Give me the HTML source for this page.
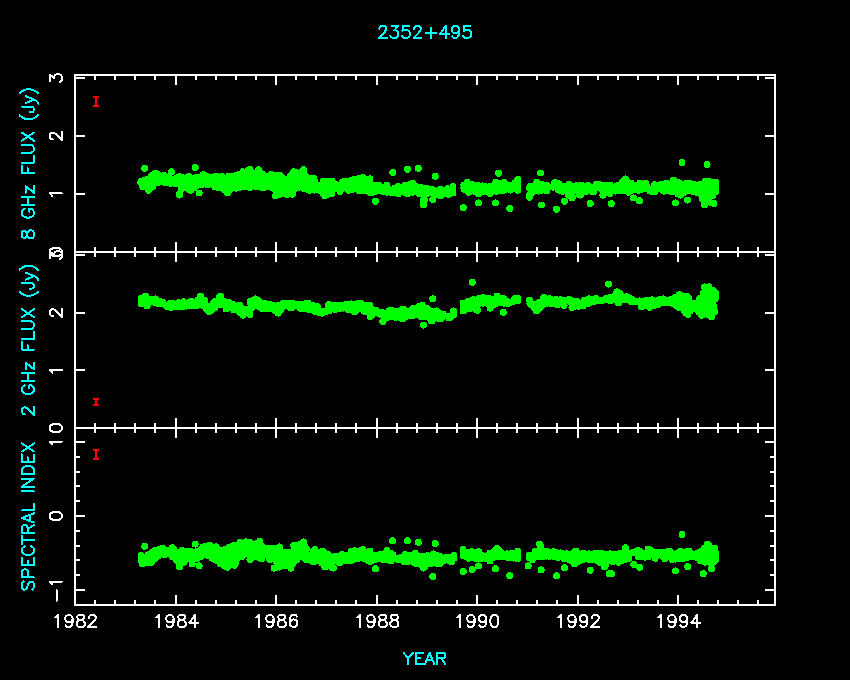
<!DOCTYPE html>
<html><head><meta charset="utf-8"><style>
html,body{margin:0;padding:0;background:#000;}
body{width:850px;height:680px;overflow:hidden;font-family:"Liberation Sans",sans-serif;}
svg{display:block;}
</style></head><body>
<svg width="850" height="680" viewBox="0 0 850 680">
<rect x="0" y="0" width="850" height="680" fill="#000"/>
<g fill="#00ff00" shape-rendering="crispEdges"><circle cx="140.8" cy="182.1" r="3.5"/><rect x="141.8" y="183.6" width="1" height="0.1"/><circle cx="142.2" cy="185.6" r="3.5"/><rect x="142.8" y="183.1" width="1" height="1.4"/><circle cx="143.3" cy="181.1" r="3.5"/><rect x="143.8" y="182.7" width="1" height="2.5"/><circle cx="144.3" cy="180.9" r="3.5"/><rect x="144.8" y="182.0" width="1" height="3.7"/><circle cx="144.9" cy="184.4" r="3.5"/><rect x="145.8" y="181.4" width="1" height="5.0"/><circle cx="146.3" cy="179.8" r="3.5"/><rect x="146.8" y="180.8" width="1" height="6.2"/><circle cx="147.7" cy="187.0" r="3.5"/><rect x="147.8" y="180.2" width="1" height="7.5"/><circle cx="148.3" cy="188.8" r="3.5"/><rect x="148.8" y="179.5" width="1" height="7.4"/><circle cx="148.9" cy="188.1" r="3.5"/><rect x="149.8" y="178.9" width="1" height="7.2"/><circle cx="150.7" cy="187.8" r="3.5"/><rect x="150.8" y="178.3" width="1" height="7.0"/><circle cx="151.6" cy="182.5" r="3.5"/><circle cx="151.3" cy="179.9" r="3.5"/><rect x="151.8" y="177.7" width="1" height="6.8"/><circle cx="151.8" cy="175.6" r="3.5"/><rect x="152.8" y="177.0" width="1" height="6.6"/><circle cx="153.6" cy="182.1" r="3.5"/><rect x="153.8" y="176.4" width="1" height="6.5"/><circle cx="153.8" cy="178.4" r="3.5"/><rect x="154.8" y="175.8" width="1" height="6.4"/><circle cx="155.5" cy="173.4" r="3.5"/><rect x="155.8" y="175.9" width="1" height="5.5"/><circle cx="155.9" cy="183.0" r="3.5"/><rect x="156.8" y="176.2" width="1" height="4.5"/><circle cx="157.8" cy="182.7" r="3.5"/><rect x="157.8" y="176.4" width="1" height="3.5"/><circle cx="157.8" cy="174.0" r="3.5"/><rect x="158.8" y="176.7" width="1" height="3.4"/><circle cx="159.7" cy="182.1" r="3.5"/><rect x="159.8" y="176.9" width="1" height="3.2"/><circle cx="160.4" cy="178.6" r="3.5"/><rect x="160.8" y="177.2" width="1" height="3.0"/><circle cx="161.6" cy="181.9" r="3.5"/><rect x="161.8" y="177.4" width="1" height="2.9"/><circle cx="161.9" cy="178.0" r="3.5"/><rect x="162.8" y="177.7" width="1" height="2.7"/><circle cx="163.4" cy="182.1" r="3.5"/><rect x="163.8" y="178.0" width="1" height="2.4"/><circle cx="164.7" cy="179.7" r="3.5"/><rect x="164.8" y="178.5" width="1" height="2.0"/><circle cx="165.4" cy="182.7" r="3.5"/><rect x="165.8" y="179.0" width="1" height="1.6"/><circle cx="166.7" cy="177.3" r="3.5"/><rect x="166.8" y="179.5" width="1" height="1.2"/><circle cx="167.6" cy="183.0" r="3.5"/><rect x="167.8" y="180.0" width="1" height="0.8"/><circle cx="168.3" cy="177.6" r="3.5"/><rect x="168.8" y="180.5" width="1" height="0.3"/><circle cx="169.5" cy="178.4" r="3.5"/><circle cx="170.4" cy="183.2" r="3.5"/><circle cx="171.0" cy="182.5" r="3.5"/><rect x="171.8" y="181.0" width="1" height="0.1"/><circle cx="172.0" cy="180.6" r="3.5"/><rect x="172.8" y="180.8" width="1" height="0.4"/><circle cx="173.6" cy="182.2" r="3.5"/><rect x="173.8" y="180.5" width="1" height="0.8"/><circle cx="174.1" cy="179.1" r="3.5"/><rect x="174.8" y="180.3" width="1" height="1.3"/><rect x="175.8" y="180.0" width="1" height="4.2"/><circle cx="175.8" cy="180.7" r="3.5"/><rect x="176.8" y="179.8" width="1" height="7.1"/><circle cx="177.2" cy="178.0" r="3.5"/><rect x="177.8" y="179.5" width="1" height="10.1"/><circle cx="178.2" cy="178.2" r="3.5"/><rect x="178.8" y="179.3" width="1" height="13.0"/><circle cx="179.2" cy="194.7" r="3.5"/><circle cx="178.9" cy="177.1" r="3.5"/><rect x="179.8" y="179.2" width="1" height="12.0"/><circle cx="179.9" cy="193.7" r="3.5"/><rect x="180.8" y="179.2" width="1" height="10.3"/><circle cx="181.5" cy="177.1" r="3.5"/><rect x="181.8" y="179.2" width="1" height="8.7"/><circle cx="181.8" cy="178.4" r="3.5"/><circle cx="182.5" cy="179.6" r="3.5"/><rect x="182.8" y="179.2" width="1" height="7.0"/><circle cx="182.8" cy="183.3" r="3.5"/><rect x="183.8" y="179.2" width="1" height="6.5"/><circle cx="184.6" cy="187.1" r="3.5"/><rect x="184.8" y="179.2" width="1" height="6.8"/><circle cx="184.9" cy="186.5" r="3.5"/><rect x="185.8" y="179.2" width="1" height="7.1"/><circle cx="186.5" cy="182.9" r="3.5"/><rect x="186.8" y="179.2" width="1" height="7.4"/><circle cx="187.3" cy="176.9" r="3.5"/><rect x="187.8" y="179.2" width="1" height="7.7"/><circle cx="188.5" cy="183.3" r="3.5"/><rect x="188.8" y="179.2" width="1" height="8.0"/><circle cx="189.3" cy="189.4" r="3.5"/><circle cx="189.2" cy="186.6" r="3.5"/><rect x="189.8" y="179.1" width="1" height="8.5"/><circle cx="190.5" cy="183.4" r="3.5"/><rect x="190.8" y="178.9" width="1" height="8.5"/><circle cx="191.7" cy="183.6" r="3.5"/><rect x="191.8" y="178.8" width="1" height="8.1"/><circle cx="192.0" cy="187.8" r="3.5"/><rect x="192.8" y="178.6" width="1" height="7.8"/><circle cx="192.9" cy="188.2" r="3.5"/><rect x="193.8" y="178.5" width="1" height="7.4"/><circle cx="194.5" cy="187.0" r="3.5"/><rect x="194.8" y="178.3" width="1" height="7.1"/><circle cx="195.4" cy="177.7" r="3.5"/><rect x="195.8" y="178.2" width="1" height="6.7"/><circle cx="196.0" cy="186.1" r="3.5"/><rect x="196.8" y="178.0" width="1" height="6.4"/><circle cx="197.8" cy="180.1" r="3.5"/><rect x="197.8" y="177.9" width="1" height="6.0"/><circle cx="198.3" cy="177.2" r="3.5"/><rect x="198.8" y="177.7" width="1" height="5.7"/><circle cx="199.2" cy="184.7" r="3.5"/><rect x="199.8" y="177.6" width="1" height="5.3"/><circle cx="200.3" cy="178.5" r="3.5"/><rect x="200.8" y="177.4" width="1" height="5.0"/><circle cx="201.7" cy="184.8" r="3.5"/><rect x="201.8" y="177.3" width="1" height="4.6"/><circle cx="202.6" cy="175.7" r="3.5"/><rect x="202.8" y="177.1" width="1" height="4.3"/><circle cx="203.2" cy="180.9" r="3.5"/><rect x="203.8" y="177.2" width="1" height="4.3"/><circle cx="204.1" cy="179.5" r="3.5"/><rect x="204.8" y="177.4" width="1" height="4.4"/><circle cx="205.4" cy="175.9" r="3.5"/><rect x="205.8" y="177.5" width="1" height="4.5"/><circle cx="205.8" cy="175.8" r="3.5"/><rect x="206.8" y="177.7" width="1" height="4.6"/><circle cx="207.4" cy="184.7" r="3.5"/><rect x="207.8" y="177.8" width="1" height="4.7"/><circle cx="208.7" cy="182.2" r="3.5"/><rect x="208.8" y="178.0" width="1" height="4.8"/><circle cx="209.4" cy="177.3" r="3.5"/><rect x="209.8" y="178.1" width="1" height="4.9"/><circle cx="210.4" cy="177.7" r="3.5"/><rect x="210.8" y="178.3" width="1" height="5.0"/><circle cx="210.8" cy="183.8" r="3.5"/><rect x="211.8" y="178.4" width="1" height="5.1"/><circle cx="212.3" cy="181.1" r="3.5"/><rect x="212.8" y="178.6" width="1" height="5.2"/><circle cx="213.4" cy="180.7" r="3.5"/><rect x="213.8" y="178.7" width="1" height="5.3"/><circle cx="214.7" cy="181.9" r="3.5"/><rect x="214.8" y="178.9" width="1" height="5.6"/><circle cx="215.2" cy="176.6" r="3.5"/><rect x="215.8" y="179.0" width="1" height="5.9"/><circle cx="216.2" cy="187.1" r="3.5"/><rect x="216.8" y="179.2" width="1" height="6.3"/><circle cx="217.3" cy="184.2" r="3.5"/><rect x="217.8" y="179.2" width="1" height="6.8"/><circle cx="217.8" cy="183.7" r="3.5"/><rect x="218.8" y="179.1" width="1" height="7.3"/><circle cx="219.0" cy="188.0" r="3.5"/><rect x="219.8" y="179.1" width="1" height="7.9"/><circle cx="219.8" cy="180.6" r="3.5"/><rect x="220.8" y="179.0" width="1" height="8.5"/><circle cx="221.0" cy="182.9" r="3.5"/><rect x="221.8" y="178.9" width="1" height="9.0"/><circle cx="222.2" cy="176.6" r="3.5"/><rect x="222.8" y="178.9" width="1" height="9.6"/><circle cx="223.4" cy="178.1" r="3.5"/><rect x="223.8" y="178.8" width="1" height="10.1"/><circle cx="224.1" cy="189.6" r="3.5"/><rect x="224.8" y="178.8" width="1" height="10.7"/><circle cx="225.4" cy="178.6" r="3.5"/><rect x="225.8" y="178.7" width="1" height="11.3"/><circle cx="226.4" cy="189.8" r="3.5"/><circle cx="225.9" cy="188.1" r="3.5"/><rect x="226.8" y="178.6" width="1" height="11.8"/><circle cx="227.6" cy="184.6" r="3.5"/><rect x="227.8" y="178.6" width="1" height="11.5"/><circle cx="228.4" cy="185.7" r="3.5"/><rect x="228.8" y="178.4" width="1" height="11.1"/><circle cx="229.1" cy="176.2" r="3.5"/><rect x="229.8" y="178.1" width="1" height="10.8"/><circle cx="229.8" cy="189.9" r="3.5"/><rect x="230.8" y="177.8" width="1" height="10.5"/><circle cx="231.3" cy="186.9" r="3.5"/><rect x="231.8" y="177.5" width="1" height="10.2"/><circle cx="232.0" cy="176.0" r="3.5"/><rect x="232.8" y="177.2" width="1" height="9.9"/><circle cx="233.0" cy="178.7" r="3.5"/><circle cx="233.3" cy="185.7" r="3.5"/><rect x="233.8" y="176.9" width="1" height="9.6"/><circle cx="234.5" cy="181.4" r="3.5"/><rect x="234.8" y="176.6" width="1" height="9.4"/><circle cx="235.4" cy="187.2" r="3.5"/><rect x="235.8" y="176.3" width="1" height="9.3"/><circle cx="236.7" cy="180.7" r="3.5"/><circle cx="236.2" cy="187.6" r="3.5"/><rect x="236.8" y="176.0" width="1" height="9.5"/><circle cx="237.0" cy="175.2" r="3.5"/><rect x="237.8" y="175.7" width="1" height="9.7"/><circle cx="238.8" cy="187.5" r="3.5"/><rect x="238.8" y="175.4" width="1" height="9.9"/><circle cx="238.8" cy="186.5" r="3.5"/><rect x="239.8" y="175.1" width="1" height="10.1"/><circle cx="240.7" cy="186.9" r="3.5"/><circle cx="239.9" cy="174.2" r="3.5"/><rect x="240.8" y="174.8" width="1" height="10.3"/><circle cx="241.5" cy="182.7" r="3.5"/><rect x="241.8" y="174.5" width="1" height="10.5"/><circle cx="242.6" cy="186.2" r="3.5"/><rect x="242.8" y="174.2" width="1" height="10.7"/><circle cx="243.7" cy="186.2" r="3.5"/><circle cx="243.2" cy="176.2" r="3.5"/><rect x="243.8" y="173.9" width="1" height="10.9"/><circle cx="244.2" cy="180.7" r="3.5"/><rect x="244.8" y="173.6" width="1" height="11.1"/><circle cx="245.0" cy="172.7" r="3.5"/><circle cx="245.0" cy="175.4" r="3.5"/><rect x="245.8" y="173.3" width="1" height="11.3"/><circle cx="246.6" cy="186.3" r="3.5"/><rect x="246.8" y="173.0" width="1" height="11.5"/><circle cx="247.3" cy="185.5" r="3.5"/><rect x="247.8" y="172.7" width="1" height="11.7"/><circle cx="248.2" cy="171.0" r="3.5"/><rect x="248.8" y="172.4" width="1" height="11.9"/><circle cx="248.9" cy="170.0" r="3.5"/><rect x="249.8" y="172.2" width="1" height="12.7"/><circle cx="250.4" cy="186.6" r="3.5"/><rect x="250.8" y="172.2" width="1" height="12.7"/><circle cx="250.9" cy="179.5" r="3.5"/><circle cx="251.2" cy="171.6" r="3.5"/><rect x="251.8" y="172.2" width="1" height="12.7"/><circle cx="252.3" cy="183.1" r="3.5"/><circle cx="252.0" cy="185.9" r="3.5"/><rect x="252.8" y="172.2" width="1" height="12.7"/><circle cx="253.2" cy="185.4" r="3.5"/><rect x="253.8" y="172.2" width="1" height="12.7"/><circle cx="254.1" cy="179.0" r="3.5"/><rect x="254.8" y="172.2" width="1" height="12.7"/><circle cx="254.9" cy="174.6" r="3.5"/><circle cx="255.6" cy="178.6" r="3.5"/><rect x="255.8" y="172.2" width="1" height="12.7"/><circle cx="256.6" cy="186.2" r="3.5"/><circle cx="256.7" cy="186.8" r="3.5"/><rect x="256.8" y="172.2" width="1" height="12.7"/><circle cx="257.7" cy="171.0" r="3.5"/><rect x="257.8" y="172.2" width="1" height="12.7"/><circle cx="258.5" cy="178.0" r="3.5"/><rect x="258.8" y="173.0" width="1" height="11.9"/><circle cx="258.9" cy="173.0" r="3.5"/><circle cx="259.6" cy="184.4" r="3.5"/><rect x="259.8" y="174.0" width="1" height="10.9"/><circle cx="259.8" cy="172.8" r="3.5"/><rect x="260.8" y="175.0" width="1" height="9.9"/><circle cx="261.3" cy="187.3" r="3.5"/><circle cx="260.9" cy="179.0" r="3.5"/><rect x="261.8" y="176.0" width="1" height="8.9"/><circle cx="261.8" cy="173.9" r="3.5"/><rect x="262.8" y="177.0" width="1" height="7.9"/><circle cx="263.4" cy="180.4" r="3.5"/><rect x="263.8" y="177.8" width="1" height="7.1"/><circle cx="263.8" cy="187.4" r="3.5"/><rect x="264.8" y="177.7" width="1" height="7.4"/><circle cx="264.8" cy="186.2" r="3.5"/><rect x="265.8" y="177.6" width="1" height="7.7"/><circle cx="266.3" cy="180.5" r="3.5"/><rect x="266.8" y="177.5" width="1" height="8.0"/><circle cx="267.2" cy="184.3" r="3.5"/><rect x="267.8" y="177.4" width="1" height="8.3"/><circle cx="267.8" cy="178.8" r="3.5"/><circle cx="268.0" cy="186.9" r="3.5"/><rect x="268.8" y="177.3" width="1" height="8.5"/><circle cx="269.3" cy="178.8" r="3.5"/><rect x="269.8" y="177.2" width="1" height="8.8"/><circle cx="270.4" cy="177.8" r="3.5"/><circle cx="270.2" cy="175.4" r="3.5"/><rect x="270.8" y="177.1" width="1" height="9.1"/><circle cx="271.5" cy="177.2" r="3.5"/><rect x="271.8" y="177.2" width="1" height="9.2"/><circle cx="271.8" cy="187.5" r="3.5"/><rect x="272.8" y="177.3" width="1" height="9.3"/><circle cx="273.1" cy="180.2" r="3.5"/><rect x="273.8" y="177.4" width="1" height="9.4"/><circle cx="274.3" cy="175.5" r="3.5"/><circle cx="274.5" cy="185.8" r="3.5"/><rect x="274.8" y="177.5" width="1" height="9.5"/><circle cx="275.0" cy="188.1" r="3.5"/><rect x="275.8" y="177.5" width="1" height="15.7"/><circle cx="275.8" cy="195.3" r="3.5"/><circle cx="276.7" cy="177.3" r="3.5"/><rect x="276.8" y="177.6" width="1" height="15.6"/><circle cx="277.4" cy="180.7" r="3.5"/><circle cx="277.1" cy="180.5" r="3.5"/><rect x="277.8" y="177.7" width="1" height="15.4"/><circle cx="278.7" cy="175.3" r="3.5"/><circle cx="277.8" cy="188.1" r="3.5"/><rect x="278.8" y="177.8" width="1" height="15.2"/><circle cx="279.7" cy="184.9" r="3.5"/><circle cx="278.9" cy="194.3" r="3.5"/><rect x="279.8" y="178.2" width="1" height="14.8"/><circle cx="280.5" cy="190.3" r="3.5"/><rect x="280.8" y="178.8" width="1" height="14.1"/><circle cx="281.3" cy="177.1" r="3.5"/><rect x="281.8" y="179.4" width="1" height="13.4"/><circle cx="282.4" cy="179.8" r="3.5"/><circle cx="281.9" cy="185.8" r="3.5"/><rect x="282.8" y="180.0" width="1" height="12.7"/><circle cx="283.3" cy="193.5" r="3.5"/><rect x="283.8" y="180.6" width="1" height="12.0"/><circle cx="284.5" cy="178.9" r="3.5"/><rect x="284.8" y="181.2" width="1" height="11.3"/><circle cx="285.1" cy="193.6" r="3.5"/><rect x="285.8" y="181.8" width="1" height="10.7"/><circle cx="286.1" cy="179.8" r="3.5"/><rect x="286.8" y="181.4" width="1" height="10.9"/><circle cx="287.0" cy="194.7" r="3.5"/><rect x="287.8" y="180.3" width="1" height="11.9"/><circle cx="287.9" cy="188.9" r="3.5"/><rect x="288.8" y="179.2" width="1" height="13.0"/><circle cx="289.7" cy="191.5" r="3.5"/><rect x="289.8" y="178.1" width="1" height="14.0"/><circle cx="290.7" cy="176.1" r="3.5"/><circle cx="290.2" cy="182.7" r="3.5"/><rect x="290.8" y="177.0" width="1" height="15.0"/><circle cx="290.9" cy="190.1" r="3.5"/><circle cx="291.0" cy="186.5" r="3.5"/><rect x="291.8" y="175.9" width="1" height="16.0"/><circle cx="292.6" cy="174.1" r="3.5"/><circle cx="292.1" cy="190.6" r="3.5"/><rect x="292.8" y="174.8" width="1" height="15.0"/><circle cx="292.9" cy="191.1" r="3.5"/><rect x="293.8" y="174.2" width="1" height="13.5"/><circle cx="293.9" cy="181.8" r="3.5"/><circle cx="294.2" cy="174.7" r="3.5"/><rect x="294.8" y="174.0" width="1" height="11.6"/><circle cx="295.1" cy="176.6" r="3.5"/><circle cx="295.2" cy="180.9" r="3.5"/><rect x="295.8" y="173.8" width="1" height="12.0"/><circle cx="296.0" cy="188.2" r="3.5"/><rect x="296.8" y="173.5" width="1" height="12.4"/><circle cx="297.2" cy="172.9" r="3.5"/><rect x="297.8" y="173.3" width="1" height="12.7"/><circle cx="297.9" cy="187.6" r="3.5"/><rect x="298.8" y="173.1" width="1" height="13.1"/><circle cx="298.9" cy="177.3" r="3.5"/><rect x="299.8" y="172.9" width="1" height="13.5"/><circle cx="299.9" cy="180.0" r="3.5"/><circle cx="300.7" cy="179.5" r="3.5"/><rect x="300.8" y="172.7" width="1" height="13.8"/><circle cx="301.7" cy="172.6" r="3.5"/><circle cx="301.4" cy="172.3" r="3.5"/><rect x="301.8" y="172.5" width="1" height="14.2"/><circle cx="302.0" cy="181.9" r="3.5"/><rect x="302.8" y="172.3" width="1" height="14.5"/><circle cx="302.9" cy="187.3" r="3.5"/><circle cx="303.7" cy="174.6" r="3.5"/><rect x="303.8" y="173.7" width="1" height="13.2"/><circle cx="303.8" cy="181.5" r="3.5"/><circle cx="304.4" cy="188.5" r="3.5"/><rect x="304.8" y="176.2" width="1" height="10.9"/><circle cx="305.1" cy="177.7" r="3.5"/><rect x="305.8" y="178.7" width="1" height="8.5"/><circle cx="306.5" cy="188.9" r="3.5"/><rect x="306.8" y="179.4" width="1" height="8.0"/><circle cx="307.1" cy="177.6" r="3.5"/><rect x="307.8" y="179.6" width="1" height="8.0"/><circle cx="308.4" cy="187.5" r="3.5"/><rect x="308.8" y="179.8" width="1" height="7.9"/><circle cx="309.1" cy="179.0" r="3.5"/><circle cx="308.8" cy="178.5" r="3.5"/><rect x="309.8" y="180.0" width="1" height="7.8"/><circle cx="309.9" cy="185.3" r="3.5"/><circle cx="310.1" cy="179.2" r="3.5"/><rect x="310.8" y="180.2" width="1" height="7.6"/><circle cx="311.5" cy="187.7" r="3.5"/><rect x="311.8" y="180.4" width="1" height="7.5"/><circle cx="312.0" cy="188.3" r="3.5"/><rect x="312.8" y="180.6" width="1" height="7.4"/><circle cx="313.2" cy="185.7" r="3.5"/><rect x="313.8" y="180.9" width="1" height="7.2"/><circle cx="314.4" cy="190.1" r="3.5"/><rect x="314.8" y="181.1" width="1" height="6.9"/><circle cx="315.0" cy="181.5" r="3.5"/><rect x="315.8" y="181.4" width="1" height="6.7"/><circle cx="315.9" cy="189.8" r="3.5"/><rect x="316.8" y="181.7" width="1" height="6.5"/><circle cx="317.6" cy="186.5" r="3.5"/><rect x="317.8" y="182.0" width="1" height="6.3"/><circle cx="317.9" cy="186.0" r="3.5"/><rect x="318.8" y="182.3" width="1" height="6.0"/><circle cx="319.6" cy="186.7" r="3.5"/><rect x="319.8" y="182.6" width="1" height="5.8"/><circle cx="320.1" cy="190.8" r="3.5"/><rect x="320.8" y="182.9" width="1" height="6.3"/><circle cx="321.1" cy="190.4" r="3.5"/><rect x="321.8" y="183.1" width="1" height="7.2"/><circle cx="322.7" cy="191.3" r="3.5"/><rect x="322.8" y="183.4" width="1" height="8.1"/><circle cx="323.3" cy="193.4" r="3.5"/><rect x="323.8" y="183.5" width="1" height="9.2"/><circle cx="324.3" cy="182.1" r="3.5"/><rect x="324.8" y="183.5" width="1" height="9.8"/><circle cx="325.2" cy="188.7" r="3.5"/><rect x="325.8" y="183.5" width="1" height="9.4"/><circle cx="326.6" cy="182.9" r="3.5"/><rect x="326.8" y="183.5" width="1" height="9.2"/><circle cx="327.5" cy="181.2" r="3.5"/><circle cx="327.2" cy="194.6" r="3.5"/><rect x="327.8" y="183.5" width="1" height="8.8"/><circle cx="328.3" cy="181.1" r="3.5"/><rect x="328.8" y="183.5" width="1" height="8.6"/><circle cx="329.7" cy="189.7" r="3.5"/><rect x="329.8" y="183.5" width="1" height="8.2"/><circle cx="329.8" cy="184.3" r="3.5"/><rect x="330.8" y="183.5" width="1" height="8.0"/><circle cx="331.4" cy="181.1" r="3.5"/><rect x="331.8" y="183.8" width="1" height="7.4"/><circle cx="332.3" cy="183.7" r="3.5"/><rect x="332.8" y="184.7" width="1" height="6.3"/><circle cx="333.4" cy="189.5" r="3.5"/><rect x="333.8" y="185.6" width="1" height="5.2"/><circle cx="334.8" cy="183.7" r="3.5"/><rect x="334.8" y="186.4" width="1" height="4.1"/><circle cx="335.1" cy="188.3" r="3.5"/><rect x="335.8" y="187.3" width="1" height="3.0"/><circle cx="336.0" cy="185.4" r="3.5"/><rect x="336.8" y="188.2" width="1" height="1.9"/><circle cx="337.7" cy="186.5" r="3.5"/><rect x="337.8" y="187.9" width="1" height="2.0"/><rect x="338.8" y="187.1" width="1" height="2.6"/><circle cx="339.4" cy="185.0" r="3.5"/><rect x="339.8" y="186.4" width="1" height="3.1"/><circle cx="340.1" cy="191.3" r="3.5"/><rect x="340.8" y="185.6" width="1" height="3.7"/><rect x="341.8" y="184.9" width="1" height="4.2"/><circle cx="341.9" cy="183.1" r="3.5"/><rect x="342.8" y="184.2" width="1" height="4.7"/><circle cx="343.6" cy="181.8" r="3.5"/><rect x="343.8" y="184.0" width="1" height="4.7"/><circle cx="344.4" cy="183.8" r="3.5"/><rect x="344.8" y="183.8" width="1" height="4.7"/><circle cx="345.2" cy="187.7" r="3.5"/><rect x="345.8" y="183.6" width="1" height="4.6"/><circle cx="346.2" cy="187.8" r="3.5"/><rect x="346.8" y="183.4" width="1" height="4.6"/><circle cx="347.3" cy="181.2" r="3.5"/><rect x="347.8" y="183.2" width="1" height="4.6"/><circle cx="348.5" cy="181.4" r="3.5"/><rect x="348.8" y="183.0" width="1" height="4.7"/><circle cx="348.8" cy="181.9" r="3.5"/><rect x="349.8" y="182.8" width="1" height="4.9"/><circle cx="350.5" cy="180.8" r="3.5"/><rect x="350.8" y="182.7" width="1" height="5.2"/><circle cx="351.4" cy="189.9" r="3.5"/><rect x="351.8" y="182.5" width="1" height="5.4"/><circle cx="352.1" cy="187.9" r="3.5"/><rect x="352.8" y="182.3" width="1" height="5.7"/><circle cx="353.6" cy="181.0" r="3.5"/><rect x="353.8" y="182.1" width="1" height="5.9"/><circle cx="354.1" cy="179.7" r="3.5"/><rect x="354.8" y="181.9" width="1" height="6.2"/><circle cx="355.7" cy="182.3" r="3.5"/><rect x="355.8" y="181.6" width="1" height="6.6"/><circle cx="356.5" cy="187.9" r="3.5"/><circle cx="356.1" cy="186.1" r="3.5"/><rect x="356.8" y="181.4" width="1" height="6.9"/><circle cx="357.5" cy="189.4" r="3.5"/><rect x="357.8" y="181.1" width="1" height="7.2"/><circle cx="357.9" cy="181.2" r="3.5"/><rect x="358.8" y="180.9" width="1" height="7.5"/><circle cx="358.8" cy="178.7" r="3.5"/><rect x="359.8" y="180.6" width="1" height="7.8"/><circle cx="359.9" cy="184.4" r="3.5"/><rect x="360.8" y="180.4" width="1" height="8.1"/><circle cx="361.0" cy="182.4" r="3.5"/><rect x="361.8" y="180.1" width="1" height="8.3"/><circle cx="362.7" cy="178.7" r="3.5"/><rect x="362.8" y="180.0" width="1" height="8.4"/><circle cx="363.3" cy="184.1" r="3.5"/><rect x="363.8" y="180.2" width="1" height="8.2"/><circle cx="364.2" cy="179.2" r="3.5"/><circle cx="364.1" cy="186.2" r="3.5"/><rect x="364.8" y="180.4" width="1" height="8.0"/><circle cx="364.9" cy="190.3" r="3.5"/><rect x="365.8" y="180.6" width="1" height="7.8"/><circle cx="365.8" cy="186.9" r="3.5"/><rect x="366.8" y="180.8" width="1" height="7.6"/><circle cx="367.2" cy="184.9" r="3.5"/><rect x="367.8" y="181.0" width="1" height="7.4"/><circle cx="368.5" cy="182.5" r="3.5"/><rect x="368.8" y="181.2" width="1" height="7.2"/><circle cx="369.0" cy="179.6" r="3.5"/><rect x="369.8" y="186.3" width="1" height="3.5"/><circle cx="370.5" cy="190.8" r="3.5"/><rect x="370.8" y="186.5" width="1" height="3.2"/><rect x="371.8" y="186.7" width="1" height="3.0"/><circle cx="372.7" cy="192.2" r="3.5"/><rect x="372.8" y="186.8" width="1" height="2.8"/><circle cx="372.9" cy="185.1" r="3.5"/><rect x="373.8" y="187.0" width="1" height="2.6"/><circle cx="374.5" cy="192.0" r="3.5"/><rect x="374.8" y="187.2" width="1" height="2.4"/><circle cx="374.9" cy="186.1" r="3.5"/><rect x="375.8" y="187.3" width="1" height="2.1"/><circle cx="376.3" cy="185.2" r="3.5"/><rect x="376.8" y="187.5" width="1" height="1.9"/><circle cx="377.7" cy="185.5" r="3.5"/><rect x="377.8" y="187.7" width="1" height="1.7"/><circle cx="378.2" cy="189.0" r="3.5"/><rect x="378.8" y="187.7" width="1" height="1.6"/><circle cx="379.5" cy="190.0" r="3.5"/><rect x="379.8" y="187.7" width="1" height="1.5"/><circle cx="380.4" cy="190.8" r="3.5"/><rect x="380.8" y="187.7" width="1" height="1.5"/><circle cx="380.9" cy="187.2" r="3.5"/><rect x="381.8" y="187.7" width="1" height="1.4"/><circle cx="382.4" cy="190.2" r="3.5"/><rect x="382.8" y="187.7" width="1" height="1.5"/><circle cx="383.4" cy="188.0" r="3.5"/><rect x="383.8" y="187.7" width="1" height="1.6"/><circle cx="383.9" cy="189.7" r="3.5"/><rect x="384.8" y="187.7" width="1" height="1.8"/><circle cx="385.3" cy="190.5" r="3.5"/><rect x="385.8" y="187.7" width="1" height="1.9"/><rect x="386.8" y="187.7" width="1" height="2.0"/><circle cx="386.9" cy="192.2" r="3.5"/><rect x="387.8" y="187.9" width="1" height="2.0"/><circle cx="388.3" cy="189.2" r="3.5"/><rect x="388.8" y="188.0" width="1" height="2.0"/><circle cx="389.2" cy="191.3" r="3.5"/><rect x="389.8" y="188.1" width="1" height="2.0"/><rect x="390.8" y="188.2" width="1" height="2.0"/><circle cx="391.5" cy="190.6" r="3.5"/><rect x="391.8" y="188.4" width="1" height="2.0"/><circle cx="391.8" cy="192.8" r="3.5"/><rect x="392.8" y="188.5" width="1" height="2.1"/><circle cx="393.3" cy="192.6" r="3.5"/><rect x="393.8" y="188.6" width="1" height="2.1"/><circle cx="394.7" cy="188.3" r="3.5"/><rect x="394.8" y="188.7" width="1" height="2.1"/><rect x="395.8" y="188.9" width="1" height="2.1"/><rect x="396.8" y="189.0" width="1" height="2.1"/><rect x="397.8" y="189.1" width="1" height="2.1"/><circle cx="397.8" cy="187.8" r="3.5"/><rect x="398.8" y="188.9" width="1" height="2.4"/><circle cx="399.5" cy="187.8" r="3.5"/><rect x="399.8" y="188.6" width="1" height="2.6"/><circle cx="400.6" cy="187.2" r="3.5"/><rect x="400.8" y="188.4" width="1" height="2.9"/><circle cx="401.5" cy="189.1" r="3.5"/><rect x="401.8" y="188.1" width="1" height="3.1"/><circle cx="402.5" cy="191.9" r="3.5"/><rect x="402.8" y="187.9" width="1" height="3.4"/><circle cx="403.7" cy="191.3" r="3.5"/><rect x="403.8" y="187.6" width="1" height="3.6"/><circle cx="404.6" cy="189.3" r="3.5"/><rect x="404.8" y="187.4" width="1" height="3.9"/><circle cx="405.4" cy="185.4" r="3.5"/><rect x="405.8" y="187.1" width="1" height="4.1"/><circle cx="405.8" cy="193.1" r="3.5"/><rect x="406.8" y="186.9" width="1" height="4.4"/><circle cx="406.9" cy="192.9" r="3.5"/><rect x="407.8" y="186.6" width="1" height="4.6"/><circle cx="408.0" cy="193.7" r="3.5"/><rect x="408.8" y="186.4" width="1" height="4.9"/><circle cx="409.0" cy="184.8" r="3.5"/><rect x="409.8" y="186.1" width="1" height="5.1"/><circle cx="410.5" cy="189.0" r="3.5"/><rect x="410.8" y="185.9" width="1" height="5.4"/><circle cx="411.3" cy="184.3" r="3.5"/><rect x="411.8" y="185.6" width="1" height="5.6"/><circle cx="412.0" cy="186.3" r="3.5"/><rect x="412.8" y="186.0" width="1" height="5.2"/><circle cx="412.9" cy="192.1" r="3.5"/><rect x="413.8" y="186.5" width="1" height="4.7"/><circle cx="414.2" cy="188.1" r="3.5"/><rect x="414.8" y="187.0" width="1" height="4.2"/><circle cx="415.5" cy="189.0" r="3.5"/><rect x="415.8" y="187.5" width="1" height="3.7"/><circle cx="416.5" cy="186.5" r="3.5"/><rect x="416.8" y="188.0" width="1" height="3.2"/><circle cx="417.3" cy="188.2" r="3.5"/><rect x="417.8" y="188.5" width="1" height="2.7"/><circle cx="418.8" cy="189.6" r="3.5"/><rect x="418.8" y="189.0" width="1" height="2.2"/><circle cx="419.4" cy="187.8" r="3.5"/><rect x="419.8" y="189.5" width="1" height="3.4"/><circle cx="420.8" cy="187.4" r="3.5"/><rect x="420.8" y="190.0" width="1" height="4.9"/><circle cx="421.5" cy="188.5" r="3.5"/><rect x="421.8" y="190.5" width="1" height="6.4"/><circle cx="421.9" cy="190.5" r="3.5"/><rect x="422.8" y="190.6" width="1" height="8.3"/><circle cx="423.0" cy="189.4" r="3.5"/><circle cx="423.6" cy="200.3" r="3.5"/><rect x="423.8" y="190.7" width="1" height="7.2"/><circle cx="424.6" cy="200.3" r="3.5"/><rect x="424.8" y="190.8" width="1" height="4.1"/><circle cx="425.2" cy="188.9" r="3.5"/><rect x="425.8" y="190.8" width="1" height="1.0"/><circle cx="426.2" cy="190.8" r="3.5"/><rect x="426.8" y="190.9" width="1" height="0.4"/><circle cx="427.2" cy="188.7" r="3.5"/><rect x="427.8" y="191.0" width="1" height="0.5"/><rect x="428.8" y="191.1" width="1" height="0.6"/><circle cx="429.1" cy="191.4" r="3.5"/><rect x="429.8" y="191.1" width="1" height="0.7"/><circle cx="430.6" cy="192.5" r="3.5"/><rect x="430.8" y="191.2" width="1" height="0.7"/><circle cx="431.4" cy="189.0" r="3.5"/><rect x="431.8" y="191.3" width="1" height="0.8"/><circle cx="432.2" cy="192.7" r="3.5"/><rect x="432.8" y="191.4" width="1" height="0.9"/><circle cx="433.3" cy="194.1" r="3.5"/><rect x="433.8" y="191.5" width="1" height="0.9"/><circle cx="434.1" cy="190.8" r="3.5"/><rect x="434.8" y="191.5" width="1" height="1.0"/><circle cx="434.8" cy="192.9" r="3.5"/><rect x="435.8" y="191.6" width="1" height="1.1"/><circle cx="436.2" cy="194.9" r="3.5"/><rect x="436.8" y="191.7" width="1" height="1.2"/><circle cx="437.7" cy="191.6" r="3.5"/><rect x="437.8" y="191.8" width="1" height="1.2"/><rect x="438.8" y="191.8" width="1" height="1.3"/><circle cx="439.4" cy="189.8" r="3.5"/><rect x="439.8" y="191.9" width="1" height="1.4"/><circle cx="440.8" cy="189.5" r="3.5"/><rect x="440.8" y="191.8" width="1" height="1.4"/><rect x="441.8" y="191.6" width="1" height="1.4"/><circle cx="442.0" cy="189.9" r="3.5"/><rect x="442.8" y="191.4" width="1" height="1.4"/><circle cx="443.7" cy="191.8" r="3.5"/><rect x="443.8" y="191.2" width="1" height="1.4"/><circle cx="443.9" cy="193.5" r="3.5"/><rect x="444.8" y="191.0" width="1" height="1.4"/><circle cx="445.3" cy="190.4" r="3.5"/><rect x="445.8" y="190.8" width="1" height="1.4"/><circle cx="445.8" cy="194.0" r="3.5"/><rect x="446.8" y="190.6" width="1" height="1.4"/><circle cx="447.5" cy="188.5" r="3.5"/><rect x="447.8" y="190.4" width="1" height="1.4"/><circle cx="448.4" cy="194.3" r="3.5"/><rect x="448.8" y="190.2" width="1" height="1.4"/><circle cx="449.2" cy="193.8" r="3.5"/><rect x="449.8" y="190.0" width="1" height="1.4"/><circle cx="450.2" cy="193.3" r="3.5"/><rect x="450.8" y="189.8" width="1" height="1.4"/><rect x="451.8" y="189.6" width="1" height="1.4"/><circle cx="452.1" cy="188.8" r="3.5"/><circle cx="141.3" cy="183.1" r="3.5"/><circle cx="144.1" cy="180.3" r="3.5"/><circle cx="155.4" cy="173.2" r="3.5"/><circle cx="163.9" cy="175.3" r="3.5"/><circle cx="170.9" cy="178.9" r="3.5"/><circle cx="179.4" cy="176.7" r="3.5"/><circle cx="189.3" cy="176.7" r="3.5"/><circle cx="203.4" cy="174.6" r="3.5"/><circle cx="217.5" cy="176.7" r="3.5"/><circle cx="228.8" cy="176.0" r="3.5"/><circle cx="242.9" cy="171.8" r="3.5"/><circle cx="250.0" cy="169.7" r="3.5"/><circle cx="250.0" cy="169.7" r="3.5"/><circle cx="258.5" cy="169.7" r="3.5"/><circle cx="264.1" cy="175.3" r="3.5"/><circle cx="271.2" cy="174.6" r="3.5"/><circle cx="279.6" cy="175.3" r="3.5"/><circle cx="286.7" cy="179.6" r="3.5"/><circle cx="293.8" cy="171.8" r="3.5"/><circle cx="303.6" cy="169.7" r="3.5"/><circle cx="306.5" cy="176.7" r="3.5"/><circle cx="313.5" cy="178.1" r="3.5"/><circle cx="323.4" cy="181.0" r="3.5"/><circle cx="331.9" cy="181.0" r="3.5"/><circle cx="337.5" cy="185.9" r="3.5"/><circle cx="343.2" cy="181.7" r="3.5"/><circle cx="354.5" cy="179.6" r="3.5"/><circle cx="362.9" cy="177.4" r="3.5"/><circle cx="370.0" cy="178.9" r="3.5"/><circle cx="370.0" cy="183.8" r="3.5"/><circle cx="378.5" cy="185.2" r="3.5"/><circle cx="386.9" cy="185.2" r="3.5"/><circle cx="398.2" cy="186.6" r="3.5"/><circle cx="412.4" cy="183.1" r="3.5"/><circle cx="422.2" cy="188.0" r="3.5"/><circle cx="440.6" cy="189.4" r="3.5"/><circle cx="452.9" cy="186.6" r="3.5"/><circle cx="452.9" cy="190.9" r="3.5"/><circle cx="141.3" cy="181.0" r="3.5"/><circle cx="142.7" cy="186.7" r="3.5"/><circle cx="148.4" cy="190.2" r="3.5"/><circle cx="152.6" cy="186.7" r="3.5"/><circle cx="158.2" cy="182.4" r="3.5"/><circle cx="175.2" cy="183.9" r="3.5"/><circle cx="179.4" cy="195.1" r="3.5"/><circle cx="183.6" cy="188.1" r="3.5"/><circle cx="190.7" cy="190.2" r="3.5"/><circle cx="203.4" cy="183.9" r="3.5"/><circle cx="214.7" cy="186.7" r="3.5"/><circle cx="227.4" cy="193.0" r="3.5"/><circle cx="235.9" cy="188.1" r="3.5"/><circle cx="250.0" cy="186.7" r="3.5"/><circle cx="250.0" cy="187.4" r="3.5"/><circle cx="264.1" cy="187.4" r="3.5"/><circle cx="275.4" cy="189.5" r="3.5"/><circle cx="275.4" cy="195.9" r="3.5"/><circle cx="292.4" cy="194.4" r="3.5"/><circle cx="295.2" cy="188.1" r="3.5"/><circle cx="309.3" cy="190.2" r="3.5"/><circle cx="320.6" cy="190.9" r="3.5"/><circle cx="324.8" cy="195.9" r="3.5"/><circle cx="331.9" cy="193.7" r="3.5"/><circle cx="348.8" cy="190.2" r="3.5"/><circle cx="360.1" cy="190.9" r="3.5"/><circle cx="370.0" cy="190.9" r="3.5"/><circle cx="370.0" cy="192.3" r="3.5"/><circle cx="382.7" cy="191.6" r="3.5"/><circle cx="398.2" cy="193.7" r="3.5"/><circle cx="419.4" cy="193.7" r="3.5"/><circle cx="423.6" cy="202.2" r="3.5"/><circle cx="426.5" cy="193.7" r="3.5"/><circle cx="440.6" cy="195.9" r="3.5"/><circle cx="452.9" cy="193.0" r="3.5"/><circle cx="452.9" cy="189.5" r="3.5"/><rect x="463.4" y="186.3" width="1" height="1.0"/><circle cx="464.2" cy="187.6" r="3.5"/><rect x="464.4" y="185.9" width="1" height="1.9"/><circle cx="464.4" cy="189.4" r="3.5"/><rect x="465.4" y="185.5" width="1" height="2.8"/><circle cx="466.3" cy="189.5" r="3.5"/><rect x="466.4" y="185.1" width="1" height="3.7"/><circle cx="467.1" cy="186.0" r="3.5"/><rect x="467.4" y="185.0" width="1" height="4.3"/><circle cx="467.7" cy="186.7" r="3.5"/><rect x="468.4" y="185.3" width="1" height="4.5"/><circle cx="469.1" cy="184.3" r="3.5"/><rect x="469.4" y="185.6" width="1" height="4.4"/><circle cx="469.6" cy="184.1" r="3.5"/><rect x="470.4" y="185.9" width="1" height="4.2"/><circle cx="471.3" cy="190.8" r="3.5"/><rect x="471.4" y="186.2" width="1" height="4.1"/><circle cx="472.2" cy="184.4" r="3.5"/><rect x="472.4" y="186.4" width="1" height="4.0"/><circle cx="472.6" cy="190.7" r="3.5"/><rect x="473.4" y="186.7" width="1" height="3.8"/><circle cx="473.6" cy="190.2" r="3.5"/><rect x="474.4" y="187.0" width="1" height="3.7"/><circle cx="474.8" cy="191.0" r="3.5"/><rect x="475.4" y="187.3" width="1" height="3.5"/><circle cx="475.6" cy="191.7" r="3.5"/><rect x="476.4" y="187.6" width="1" height="3.4"/><circle cx="476.9" cy="192.6" r="3.5"/><rect x="477.4" y="187.8" width="1" height="3.3"/><circle cx="477.7" cy="192.8" r="3.5"/><rect x="478.4" y="187.9" width="1" height="3.3"/><circle cx="478.5" cy="188.7" r="3.5"/><rect x="479.4" y="188.0" width="1" height="3.0"/><circle cx="479.5" cy="193.4" r="3.5"/><rect x="480.4" y="188.1" width="1" height="2.6"/><circle cx="480.4" cy="186.1" r="3.5"/><rect x="481.4" y="188.2" width="1" height="2.2"/><circle cx="481.9" cy="192.0" r="3.5"/><rect x="482.4" y="188.3" width="1" height="1.9"/><circle cx="482.6" cy="185.9" r="3.5"/><rect x="483.4" y="188.4" width="1" height="1.5"/><circle cx="484.2" cy="191.7" r="3.5"/><rect x="484.4" y="188.5" width="1" height="1.2"/><circle cx="484.4" cy="191.9" r="3.5"/><rect x="485.4" y="188.7" width="1" height="0.8"/><circle cx="486.0" cy="186.8" r="3.5"/><rect x="486.4" y="188.8" width="1" height="0.4"/><rect x="487.4" y="188.9" width="1" height="0.1"/><circle cx="487.5" cy="188.4" r="3.5"/><rect x="490.4" y="189.7" width="1" height="1.3"/><circle cx="491.2" cy="187.4" r="3.5"/><rect x="491.4" y="188.7" width="1" height="2.1"/><circle cx="492.0" cy="191.8" r="3.5"/><rect x="492.4" y="187.7" width="1" height="2.8"/><rect x="493.4" y="186.7" width="1" height="3.6"/><circle cx="494.3" cy="185.4" r="3.5"/><rect x="494.4" y="185.7" width="1" height="4.3"/><circle cx="495.1" cy="186.0" r="3.5"/><rect x="495.4" y="184.9" width="1" height="4.9"/><circle cx="495.8" cy="182.5" r="3.5"/><rect x="496.4" y="184.9" width="1" height="4.6"/><circle cx="496.8" cy="191.2" r="3.5"/><rect x="497.4" y="184.9" width="1" height="4.4"/><circle cx="498.2" cy="190.7" r="3.5"/><rect x="498.4" y="184.9" width="1" height="4.1"/><circle cx="498.8" cy="183.4" r="3.5"/><rect x="499.4" y="184.9" width="1" height="3.9"/><circle cx="500.0" cy="189.7" r="3.5"/><rect x="500.4" y="184.9" width="1" height="3.6"/><circle cx="500.8" cy="183.1" r="3.5"/><rect x="501.4" y="184.9" width="1" height="3.4"/><circle cx="501.7" cy="190.3" r="3.5"/><rect x="502.4" y="184.9" width="1" height="3.1"/><circle cx="503.0" cy="183.3" r="3.5"/><rect x="503.4" y="184.9" width="1" height="2.9"/><circle cx="504.2" cy="189.7" r="3.5"/><rect x="504.4" y="185.3" width="1" height="2.4"/><circle cx="504.8" cy="188.4" r="3.5"/><rect x="505.4" y="185.9" width="1" height="1.8"/><circle cx="505.4" cy="183.7" r="3.5"/><rect x="506.4" y="186.5" width="1" height="1.2"/><circle cx="506.4" cy="185.8" r="3.5"/><rect x="507.4" y="187.1" width="1" height="0.6"/><circle cx="508.7" cy="185.7" r="3.5"/><circle cx="510.1" cy="185.9" r="3.5"/><circle cx="510.5" cy="190.0" r="3.5"/><circle cx="511.5" cy="188.8" r="3.5"/><rect x="512.4" y="187.4" width="1" height="0.3"/><circle cx="512.9" cy="185.0" r="3.5"/><rect x="513.4" y="186.4" width="1" height="1.3"/><rect x="514.4" y="185.4" width="1" height="2.3"/><rect x="515.4" y="184.4" width="1" height="3.3"/><circle cx="515.4" cy="182.6" r="3.5"/><rect x="516.4" y="183.4" width="1" height="4.3"/><circle cx="516.6" cy="185.4" r="3.5"/><circle cx="463.9" cy="185.2" r="3.5"/><circle cx="467.4" cy="182.4" r="3.5"/><circle cx="477.3" cy="185.2" r="3.5"/><circle cx="490.0" cy="186.6" r="3.5"/><circle cx="490.0" cy="188.0" r="3.5"/><circle cx="495.6" cy="182.4" r="3.5"/><circle cx="504.1" cy="182.4" r="3.5"/><circle cx="511.2" cy="186.6" r="3.5"/><circle cx="517.8" cy="179.6" r="3.5"/><circle cx="517.8" cy="183.8" r="3.5"/><circle cx="463.9" cy="188.1" r="3.5"/><circle cx="468.8" cy="192.3" r="3.5"/><circle cx="478.7" cy="193.7" r="3.5"/><circle cx="490.0" cy="190.9" r="3.5"/><circle cx="490.0" cy="193.7" r="3.5"/><circle cx="504.1" cy="190.2" r="3.5"/><circle cx="517.8" cy="190.2" r="3.5"/><circle cx="517.8" cy="188.1" r="3.5"/><rect x="529.0" y="188.7" width="1" height="6.0"/><circle cx="529.2" cy="195.3" r="3.5"/><rect x="530.0" y="188.1" width="1" height="4.9"/><circle cx="530.1" cy="186.2" r="3.5"/><rect x="531.0" y="187.6" width="1" height="3.7"/><circle cx="531.3" cy="192.2" r="3.5"/><rect x="532.0" y="187.1" width="1" height="2.7"/><circle cx="532.1" cy="187.5" r="3.5"/><rect x="533.0" y="186.5" width="1" height="3.2"/><rect x="534.0" y="186.0" width="1" height="3.6"/><rect x="535.0" y="185.5" width="1" height="4.0"/><circle cx="535.5" cy="187.6" r="3.5"/><rect x="536.0" y="184.9" width="1" height="4.5"/><circle cx="536.6" cy="190.9" r="3.5"/><rect x="537.0" y="185.1" width="1" height="4.2"/><rect x="538.0" y="185.4" width="1" height="3.8"/><circle cx="538.3" cy="191.1" r="3.5"/><rect x="539.0" y="185.7" width="1" height="3.4"/><circle cx="539.2" cy="188.6" r="3.5"/><rect x="540.0" y="186.0" width="1" height="3.0"/><circle cx="540.5" cy="190.8" r="3.5"/><rect x="541.0" y="186.3" width="1" height="2.6"/><circle cx="541.9" cy="184.2" r="3.5"/><rect x="542.0" y="186.6" width="1" height="2.2"/><circle cx="542.2" cy="188.2" r="3.5"/><rect x="543.0" y="186.9" width="1" height="1.9"/><rect x="544.0" y="187.1" width="1" height="1.5"/><rect x="545.0" y="187.4" width="1" height="1.1"/><circle cx="545.5" cy="187.5" r="3.5"/><rect x="546.0" y="187.7" width="1" height="0.7"/><circle cx="546.3" cy="190.6" r="3.5"/><rect x="547.0" y="187.4" width="1" height="1.0"/><circle cx="548.0" cy="186.9" r="3.5"/><rect x="548.0" y="187.0" width="1" height="1.4"/><rect x="549.0" y="186.7" width="1" height="1.7"/><rect x="550.0" y="186.4" width="1" height="2.0"/><rect x="551.0" y="186.0" width="1" height="2.4"/><rect x="552.0" y="185.7" width="1" height="2.7"/><circle cx="552.9" cy="187.2" r="3.5"/><rect x="553.0" y="185.4" width="1" height="3.0"/><circle cx="553.4" cy="186.3" r="3.5"/><rect x="554.0" y="185.0" width="1" height="3.4"/><circle cx="554.5" cy="183.1" r="3.5"/><rect x="555.0" y="185.0" width="1" height="3.4"/><circle cx="555.8" cy="183.6" r="3.5"/><rect x="556.0" y="185.1" width="1" height="3.3"/><rect x="557.0" y="185.3" width="1" height="3.1"/><circle cx="557.9" cy="189.4" r="3.5"/><rect x="558.0" y="185.4" width="1" height="3.0"/><circle cx="558.6" cy="183.6" r="3.5"/><rect x="559.0" y="185.6" width="1" height="2.8"/><circle cx="560.0" cy="187.1" r="3.5"/><rect x="560.0" y="185.7" width="1" height="2.7"/><circle cx="560.1" cy="185.6" r="3.5"/><rect x="561.0" y="185.9" width="1" height="3.1"/><circle cx="561.3" cy="191.1" r="3.5"/><rect x="562.0" y="186.0" width="1" height="3.6"/><circle cx="562.9" cy="191.2" r="3.5"/><rect x="563.0" y="186.2" width="1" height="4.1"/><circle cx="563.7" cy="186.2" r="3.5"/><rect x="564.0" y="186.3" width="1" height="4.5"/><circle cx="564.2" cy="188.1" r="3.5"/><rect x="565.0" y="186.5" width="1" height="5.0"/><circle cx="565.9" cy="189.5" r="3.5"/><rect x="566.0" y="186.6" width="1" height="5.5"/><circle cx="566.0" cy="189.1" r="3.5"/><rect x="567.0" y="186.8" width="1" height="6.0"/><circle cx="568.0" cy="186.3" r="3.5"/><rect x="568.0" y="186.9" width="1" height="6.4"/><circle cx="568.5" cy="194.9" r="3.5"/><rect x="569.0" y="187.0" width="1" height="7.0"/><circle cx="569.6" cy="185.6" r="3.5"/><rect x="570.0" y="187.1" width="1" height="7.5"/><circle cx="570.8" cy="192.8" r="3.5"/><rect x="571.0" y="187.1" width="1" height="8.1"/><circle cx="572.0" cy="194.6" r="3.5"/><rect x="572.0" y="187.2" width="1" height="8.1"/><circle cx="572.7" cy="196.9" r="3.5"/><rect x="573.0" y="187.2" width="1" height="7.7"/><circle cx="573.3" cy="187.3" r="3.5"/><rect x="574.0" y="187.3" width="1" height="7.3"/><circle cx="574.9" cy="186.0" r="3.5"/><rect x="575.0" y="187.4" width="1" height="6.9"/><circle cx="575.6" cy="188.1" r="3.5"/><rect x="576.0" y="187.4" width="1" height="6.5"/><circle cx="576.5" cy="185.5" r="3.5"/><rect x="577.0" y="187.5" width="1" height="6.1"/><circle cx="577.8" cy="191.3" r="3.5"/><rect x="578.0" y="187.5" width="1" height="5.7"/><circle cx="578.5" cy="191.5" r="3.5"/><rect x="579.0" y="187.6" width="1" height="5.4"/><circle cx="579.6" cy="194.9" r="3.5"/><rect x="580.0" y="187.6" width="1" height="4.9"/><circle cx="580.4" cy="192.5" r="3.5"/><rect x="581.0" y="187.7" width="1" height="4.4"/><circle cx="581.4" cy="190.2" r="3.5"/><rect x="582.0" y="187.7" width="1" height="3.9"/><circle cx="582.3" cy="187.2" r="3.5"/><rect x="583.0" y="187.6" width="1" height="3.5"/><rect x="584.0" y="187.6" width="1" height="3.0"/><circle cx="584.0" cy="186.0" r="3.5"/><rect x="585.0" y="187.5" width="1" height="2.6"/><circle cx="585.5" cy="192.0" r="3.5"/><rect x="586.0" y="187.5" width="1" height="2.1"/><circle cx="586.4" cy="189.8" r="3.5"/><rect x="587.0" y="187.4" width="1" height="1.7"/><circle cx="587.7" cy="187.3" r="3.5"/><rect x="588.0" y="187.4" width="1" height="1.2"/><circle cx="588.4" cy="185.5" r="3.5"/><rect x="589.0" y="187.3" width="1" height="1.3"/><circle cx="590.0" cy="188.4" r="3.5"/><rect x="590.0" y="187.3" width="1" height="1.6"/><circle cx="591.0" cy="187.7" r="3.5"/><rect x="591.0" y="187.2" width="1" height="2.0"/><circle cx="591.2" cy="188.4" r="3.5"/><rect x="592.0" y="187.2" width="1" height="2.3"/><circle cx="592.5" cy="191.9" r="3.5"/><rect x="593.0" y="187.1" width="1" height="2.7"/><circle cx="593.8" cy="191.5" r="3.5"/><rect x="594.0" y="187.1" width="1" height="3.0"/><rect x="595.0" y="187.0" width="1" height="3.4"/><rect x="596.0" y="187.0" width="1" height="3.7"/><circle cx="596.4" cy="185.1" r="3.5"/><rect x="597.0" y="187.1" width="1" height="3.9"/><circle cx="597.7" cy="185.2" r="3.5"/><rect x="598.0" y="187.1" width="1" height="4.2"/><circle cx="598.6" cy="184.7" r="3.5"/><rect x="599.0" y="187.2" width="1" height="4.4"/><circle cx="599.5" cy="184.7" r="3.5"/><rect x="600.0" y="187.2" width="1" height="4.7"/><circle cx="600.5" cy="187.3" r="3.5"/><rect x="601.0" y="187.3" width="1" height="4.9"/><rect x="602.0" y="187.3" width="1" height="5.2"/><circle cx="602.0" cy="185.0" r="3.5"/><rect x="603.0" y="187.4" width="1" height="4.9"/><circle cx="603.5" cy="194.3" r="3.5"/><rect x="604.0" y="187.4" width="1" height="4.3"/><circle cx="604.7" cy="192.4" r="3.5"/><rect x="605.0" y="187.5" width="1" height="3.6"/><circle cx="605.9" cy="185.3" r="3.5"/><rect x="606.0" y="187.5" width="1" height="3.0"/><rect x="607.0" y="187.6" width="1" height="2.3"/><circle cx="607.0" cy="186.5" r="3.5"/><rect x="608.0" y="187.6" width="1" height="1.7"/><circle cx="608.0" cy="187.8" r="3.5"/><rect x="609.0" y="187.7" width="1" height="1.0"/><circle cx="609.3" cy="185.3" r="3.5"/><rect x="610.0" y="189.0" width="1" height="2.0"/><rect x="611.0" y="188.9" width="1" height="1.9"/><rect x="612.0" y="188.7" width="1" height="1.7"/><circle cx="612.5" cy="190.2" r="3.5"/><rect x="613.0" y="188.5" width="1" height="1.5"/><rect x="614.0" y="188.4" width="1" height="1.4"/><circle cx="614.2" cy="188.3" r="3.5"/><rect x="615.0" y="188.2" width="1" height="1.2"/><circle cx="615.8" cy="191.1" r="3.5"/><rect x="616.0" y="188.0" width="1" height="1.0"/><circle cx="616.2" cy="186.6" r="3.5"/><rect x="617.0" y="187.9" width="1" height="0.9"/><rect x="618.0" y="187.7" width="1" height="0.7"/><circle cx="618.7" cy="190.5" r="3.5"/><rect x="619.0" y="186.8" width="1" height="1.8"/><rect x="620.0" y="185.9" width="1" height="2.8"/><circle cx="620.4" cy="190.5" r="3.5"/><rect x="621.0" y="185.0" width="1" height="3.9"/><circle cx="621.3" cy="185.5" r="3.5"/><rect x="622.0" y="184.1" width="1" height="4.9"/><circle cx="622.6" cy="181.7" r="3.5"/><rect x="623.0" y="183.2" width="1" height="6.0"/><circle cx="623.4" cy="190.6" r="3.5"/><rect x="624.0" y="182.3" width="1" height="7.0"/><circle cx="624.5" cy="182.3" r="3.5"/><rect x="625.0" y="181.4" width="1" height="8.0"/><circle cx="625.6" cy="190.8" r="3.5"/><rect x="626.0" y="182.1" width="1" height="7.5"/><circle cx="626.2" cy="182.7" r="3.5"/><rect x="627.0" y="182.8" width="1" height="6.9"/><circle cx="627.5" cy="181.8" r="3.5"/><rect x="628.0" y="183.6" width="1" height="6.2"/><circle cx="628.7" cy="189.7" r="3.5"/><rect x="629.0" y="184.3" width="1" height="5.2"/><circle cx="629.1" cy="185.0" r="3.5"/><rect x="630.0" y="185.1" width="1" height="4.3"/><circle cx="630.8" cy="190.9" r="3.5"/><rect x="631.0" y="185.6" width="1" height="3.6"/><circle cx="631.1" cy="184.7" r="3.5"/><rect x="632.0" y="185.6" width="1" height="3.3"/><circle cx="632.4" cy="189.9" r="3.5"/><rect x="633.0" y="185.6" width="1" height="3.1"/><circle cx="633.6" cy="186.9" r="3.5"/><rect x="634.0" y="185.6" width="1" height="2.9"/><rect x="635.0" y="185.6" width="1" height="2.7"/><rect x="636.0" y="185.6" width="1" height="2.5"/><circle cx="636.7" cy="185.8" r="3.5"/><rect x="637.0" y="185.6" width="1" height="2.3"/><rect x="638.0" y="185.6" width="1" height="2.1"/><circle cx="639.0" cy="188.1" r="3.5"/><rect x="639.0" y="185.6" width="1" height="2.2"/><circle cx="639.7" cy="183.3" r="3.5"/><rect x="640.0" y="185.6" width="1" height="2.3"/><circle cx="640.7" cy="189.8" r="3.5"/><rect x="641.0" y="185.6" width="1" height="2.4"/><circle cx="641.6" cy="187.8" r="3.5"/><rect x="642.0" y="185.6" width="1" height="2.5"/><circle cx="642.9" cy="186.8" r="3.5"/><rect x="643.0" y="185.6" width="1" height="2.6"/><circle cx="643.1" cy="187.5" r="3.5"/><rect x="644.0" y="185.6" width="1" height="2.7"/><circle cx="644.9" cy="188.2" r="3.5"/><rect x="645.0" y="185.6" width="1" height="2.8"/><circle cx="645.7" cy="188.6" r="3.5"/><rect x="646.0" y="185.8" width="1" height="2.8"/><circle cx="646.3" cy="185.7" r="3.5"/><rect x="647.0" y="185.9" width="1" height="2.7"/><rect x="648.0" y="186.1" width="1" height="2.7"/><circle cx="648.6" cy="189.3" r="3.5"/><rect x="649.0" y="186.2" width="1" height="2.6"/><circle cx="649.7" cy="190.8" r="3.5"/><rect x="650.0" y="186.4" width="1" height="2.6"/><circle cx="650.5" cy="190.1" r="3.5"/><rect x="651.0" y="186.5" width="1" height="2.5"/><circle cx="651.5" cy="189.3" r="3.5"/><rect x="652.0" y="186.7" width="1" height="2.4"/><rect x="653.0" y="186.8" width="1" height="2.3"/><circle cx="653.2" cy="191.4" r="3.5"/><rect x="654.0" y="187.0" width="1" height="2.1"/><circle cx="654.4" cy="184.7" r="3.5"/><rect x="655.0" y="187.1" width="1" height="1.9"/><circle cx="655.2" cy="191.2" r="3.5"/><rect x="656.0" y="187.3" width="1" height="1.7"/><circle cx="656.9" cy="188.2" r="3.5"/><rect x="657.0" y="187.4" width="1" height="1.5"/><circle cx="657.1" cy="186.9" r="3.5"/><rect x="658.0" y="187.6" width="1" height="1.3"/><circle cx="658.5" cy="187.2" r="3.5"/><rect x="659.0" y="187.7" width="1" height="1.1"/><rect x="660.0" y="187.3" width="1" height="1.5"/><circle cx="660.5" cy="189.1" r="3.5"/><rect x="661.0" y="187.0" width="1" height="1.8"/><circle cx="661.0" cy="184.7" r="3.5"/><rect x="662.0" y="186.6" width="1" height="2.1"/><rect x="663.0" y="186.3" width="1" height="2.4"/><circle cx="663.5" cy="190.4" r="3.5"/><rect x="664.0" y="185.9" width="1" height="2.7"/><circle cx="664.1" cy="191.1" r="3.5"/><rect x="665.0" y="185.6" width="1" height="3.0"/><circle cx="665.1" cy="190.9" r="3.5"/><rect x="666.0" y="185.2" width="1" height="3.3"/><circle cx="666.6" cy="183.3" r="3.5"/><rect x="667.0" y="184.9" width="1" height="3.6"/><circle cx="667.3" cy="190.4" r="3.5"/><rect x="668.0" y="184.5" width="1" height="3.9"/><circle cx="668.4" cy="190.8" r="3.5"/><rect x="669.0" y="184.2" width="1" height="4.3"/><rect x="670.0" y="183.8" width="1" height="5.0"/><circle cx="670.1" cy="190.3" r="3.5"/><rect x="671.0" y="183.5" width="1" height="5.8"/><circle cx="671.4" cy="184.3" r="3.5"/><rect x="672.0" y="183.1" width="1" height="6.5"/><circle cx="672.2" cy="192.0" r="3.5"/><rect x="673.0" y="182.8" width="1" height="7.2"/><circle cx="673.8" cy="187.2" r="3.5"/><circle cx="673.9" cy="188.9" r="3.5"/><rect x="674.0" y="183.2" width="1" height="7.1"/><circle cx="674.1" cy="181.2" r="3.5"/><rect x="675.0" y="183.8" width="1" height="7.0"/><circle cx="675.4" cy="182.9" r="3.5"/><rect x="676.0" y="184.2" width="1" height="6.9"/><circle cx="676.2" cy="191.8" r="3.5"/><rect x="677.0" y="184.8" width="1" height="6.7"/><circle cx="677.8" cy="182.6" r="3.5"/><rect x="678.0" y="185.2" width="1" height="6.6"/><circle cx="678.1" cy="194.0" r="3.5"/><rect x="679.0" y="185.8" width="1" height="6.5"/><circle cx="679.4" cy="184.2" r="3.5"/><circle cx="679.5" cy="193.5" r="3.5"/><rect x="680.0" y="186.2" width="1" height="6.4"/><circle cx="680.2" cy="189.8" r="3.5"/><rect x="681.0" y="186.2" width="1" height="5.9"/><circle cx="681.6" cy="194.2" r="3.5"/><rect x="682.0" y="186.1" width="1" height="5.4"/><circle cx="682.5" cy="189.6" r="3.5"/><rect x="683.0" y="186.1" width="1" height="4.8"/><circle cx="683.2" cy="184.6" r="3.5"/><rect x="684.0" y="186.0" width="1" height="4.3"/><circle cx="684.4" cy="192.3" r="3.5"/><rect x="685.0" y="185.9" width="1" height="3.8"/><circle cx="685.5" cy="183.6" r="3.5"/><rect x="686.0" y="185.8" width="1" height="3.3"/><circle cx="686.7" cy="191.1" r="3.5"/><rect x="687.0" y="185.7" width="1" height="2.8"/><circle cx="687.7" cy="186.8" r="3.5"/><rect x="688.0" y="185.6" width="1" height="3.0"/><circle cx="688.9" cy="190.4" r="3.5"/><rect x="689.0" y="185.7" width="1" height="3.1"/><circle cx="689.6" cy="183.7" r="3.5"/><rect x="690.0" y="185.9" width="1" height="3.1"/><rect x="691.0" y="186.2" width="1" height="3.1"/><circle cx="691.5" cy="187.4" r="3.5"/><rect x="692.0" y="186.4" width="1" height="3.0"/><rect x="693.0" y="186.7" width="1" height="3.0"/><circle cx="693.2" cy="191.8" r="3.5"/><rect x="694.0" y="186.9" width="1" height="3.0"/><circle cx="694.2" cy="184.6" r="3.5"/><rect x="695.0" y="187.2" width="1" height="3.0"/><circle cx="695.9" cy="190.3" r="3.5"/><rect x="696.0" y="187.4" width="1" height="2.9"/><circle cx="696.9" cy="191.9" r="3.5"/><rect x="697.0" y="187.7" width="1" height="2.9"/><rect x="698.0" y="187.2" width="1" height="3.6"/><circle cx="698.1" cy="193.0" r="3.5"/><rect x="699.0" y="186.7" width="1" height="4.3"/><circle cx="699.7" cy="191.1" r="3.5"/><rect x="700.0" y="186.2" width="1" height="5.4"/><circle cx="700.0" cy="184.4" r="3.5"/><rect x="701.0" y="185.7" width="1" height="8.6"/><circle cx="701.7" cy="186.5" r="3.5"/><rect x="702.0" y="185.2" width="1" height="11.7"/><circle cx="702.8" cy="199.3" r="3.5"/><circle cx="702.9" cy="197.8" r="3.5"/><rect x="703.0" y="184.7" width="1" height="14.9"/><circle cx="703.3" cy="198.9" r="3.5"/><rect x="704.0" y="184.2" width="1" height="18.1"/><circle cx="704.5" cy="183.0" r="3.5"/><rect x="705.0" y="183.7" width="1" height="17.0"/><circle cx="705.1" cy="181.9" r="3.5"/><circle cx="705.6" cy="194.9" r="3.5"/><rect x="706.0" y="183.5" width="1" height="15.3"/><circle cx="706.4" cy="200.7" r="3.5"/><rect x="707.0" y="183.7" width="1" height="13.2"/><circle cx="707.4" cy="198.6" r="3.5"/><circle cx="707.2" cy="181.5" r="3.5"/><rect x="708.0" y="183.8" width="1" height="11.1"/><circle cx="708.4" cy="188.9" r="3.5"/><rect x="709.0" y="184.0" width="1" height="10.2"/><circle cx="709.3" cy="181.6" r="3.5"/><rect x="710.0" y="184.1" width="1" height="9.8"/><circle cx="710.0" cy="188.4" r="3.5"/><circle cx="710.3" cy="183.8" r="3.5"/><rect x="711.0" y="184.3" width="1" height="9.3"/><circle cx="712.0" cy="182.7" r="3.5"/><rect x="712.0" y="184.4" width="1" height="8.8"/><circle cx="712.9" cy="189.6" r="3.5"/><circle cx="712.6" cy="192.6" r="3.5"/><rect x="713.0" y="184.5" width="1" height="7.7"/><circle cx="713.9" cy="185.6" r="3.5"/><rect x="714.0" y="184.7" width="1" height="6.5"/><circle cx="714.4" cy="183.2" r="3.5"/><rect x="715.0" y="184.8" width="1" height="5.4"/><circle cx="715.5" cy="191.9" r="3.5"/><circle cx="529.5" cy="188.0" r="3.5"/><circle cx="536.6" cy="182.4" r="3.5"/><circle cx="546.5" cy="185.2" r="3.5"/><circle cx="554.9" cy="182.4" r="3.5"/><circle cx="569.1" cy="184.5" r="3.5"/><circle cx="581.8" cy="185.2" r="3.5"/><circle cx="595.9" cy="184.5" r="3.5"/><circle cx="610.0" cy="185.2" r="3.5"/><circle cx="610.0" cy="186.6" r="3.5"/><circle cx="618.5" cy="185.2" r="3.5"/><circle cx="625.5" cy="178.9" r="3.5"/><circle cx="631.2" cy="183.1" r="3.5"/><circle cx="645.3" cy="183.1" r="3.5"/><circle cx="659.4" cy="185.2" r="3.5"/><circle cx="673.5" cy="180.3" r="3.5"/><circle cx="680.6" cy="183.8" r="3.5"/><circle cx="689.1" cy="183.1" r="3.5"/><circle cx="697.5" cy="185.2" r="3.5"/><circle cx="706.0" cy="181.0" r="3.5"/><circle cx="715.9" cy="182.4" r="3.5"/><circle cx="715.9" cy="185.2" r="3.5"/><circle cx="529.5" cy="188.1" r="3.5"/><circle cx="529.5" cy="197.3" r="3.5"/><circle cx="532.4" cy="192.3" r="3.5"/><circle cx="546.5" cy="190.9" r="3.5"/><circle cx="560.6" cy="190.9" r="3.5"/><circle cx="571.9" cy="198.0" r="3.5"/><circle cx="580.4" cy="195.1" r="3.5"/><circle cx="588.8" cy="190.9" r="3.5"/><circle cx="602.9" cy="195.1" r="3.5"/><circle cx="610.0" cy="190.9" r="3.5"/><circle cx="610.0" cy="193.7" r="3.5"/><circle cx="618.5" cy="190.9" r="3.5"/><circle cx="628.4" cy="192.3" r="3.5"/><circle cx="638.2" cy="190.2" r="3.5"/><circle cx="652.4" cy="191.6" r="3.5"/><circle cx="669.3" cy="190.9" r="3.5"/><circle cx="680.6" cy="195.1" r="3.5"/><circle cx="687.6" cy="190.9" r="3.5"/><circle cx="700.4" cy="193.7" r="3.5"/><circle cx="704.6" cy="205.0" r="3.5"/><circle cx="708.8" cy="196.8" r="3.5"/><circle cx="712.4" cy="195.9" r="3.5"/><circle cx="715.9" cy="190.9" r="3.5"/><circle cx="715.9" cy="190.9" r="3.5"/><circle cx="144.8" cy="168.3" r="3.5"/><circle cx="195.2" cy="167.6" r="3.5"/><circle cx="171.6" cy="171.8" r="3.5"/><circle cx="199.2" cy="193.0" r="3.5"/><circle cx="392.6" cy="172.5" r="3.5"/><circle cx="407.4" cy="169.3" r="3.5"/><circle cx="418.3" cy="168.3" r="3.5"/><circle cx="435.2" cy="176.3" r="3.5"/><circle cx="375.4" cy="201.2" r="3.5"/><circle cx="423.4" cy="205.0" r="3.5"/><circle cx="432.8" cy="199.4" r="3.5"/><circle cx="463.2" cy="207.8" r="3.5"/><circle cx="478.4" cy="202.9" r="3.5"/><circle cx="498.5" cy="173.2" r="3.5"/><circle cx="540.4" cy="173.0" r="3.5"/><circle cx="495.6" cy="202.9" r="3.5"/><circle cx="509.8" cy="208.5" r="3.5"/><circle cx="541.5" cy="205.0" r="3.5"/><circle cx="556.4" cy="209.2" r="3.5"/><circle cx="564.5" cy="201.2" r="3.5"/><circle cx="590.2" cy="203.6" r="3.5"/><circle cx="682.0" cy="162.6" r="3.5"/><circle cx="707.1" cy="164.5" r="3.5"/><circle cx="633.7" cy="197.9" r="3.5"/><circle cx="639.6" cy="200.8" r="3.5"/><circle cx="675.6" cy="202.9" r="3.5"/><circle cx="687.6" cy="200.1" r="3.5"/><circle cx="611.4" cy="203.6" r="3.5"/><circle cx="711.6" cy="202.9" r="3.5"/><circle cx="713.8" cy="203.6" r="3.5"/><rect x="143.8" y="299.9" width="1" height="0.7"/><circle cx="144.4" cy="298.5" r="3.5"/><rect x="144.8" y="298.9" width="1" height="2.8"/><circle cx="145.7" cy="299.4" r="3.5"/><rect x="145.8" y="299.2" width="1" height="3.6"/><circle cx="146.0" cy="297.9" r="3.5"/><rect x="146.8" y="300.0" width="1" height="3.2"/><circle cx="146.8" cy="302.9" r="3.5"/><rect x="147.8" y="300.9" width="1" height="1.3"/><circle cx="148.1" cy="304.2" r="3.5"/><circle cx="149.5" cy="301.3" r="3.5"/><circle cx="153.3" cy="299.7" r="3.5"/><circle cx="155.6" cy="302.7" r="3.5"/><circle cx="157.4" cy="302.6" r="3.5"/><circle cx="158.1" cy="303.2" r="3.5"/><circle cx="159.6" cy="301.5" r="3.5"/><circle cx="162.4" cy="303.2" r="3.5"/><circle cx="162.9" cy="302.5" r="3.5"/><circle cx="166.8" cy="306.2" r="3.5"/><circle cx="167.9" cy="306.6" r="3.5"/><circle cx="169.6" cy="303.8" r="3.5"/><circle cx="170.4" cy="303.3" r="3.5"/><circle cx="171.0" cy="304.5" r="3.5"/><circle cx="175.2" cy="306.2" r="3.5"/><circle cx="175.9" cy="305.0" r="3.5"/><circle cx="177.5" cy="304.7" r="3.5"/><circle cx="178.4" cy="302.8" r="3.5"/><circle cx="179.5" cy="306.5" r="3.5"/><circle cx="184.2" cy="303.5" r="3.5"/><circle cx="186.2" cy="306.1" r="3.5"/><circle cx="187.4" cy="305.9" r="3.5"/><circle cx="188.7" cy="302.8" r="3.5"/><circle cx="188.8" cy="304.8" r="3.5"/><circle cx="190.4" cy="306.0" r="3.5"/><circle cx="191.7" cy="305.8" r="3.5"/><circle cx="191.9" cy="301.4" r="3.5"/><circle cx="193.3" cy="304.2" r="3.5"/><rect x="193.8" y="303.5" width="1" height="0.1"/><rect x="194.8" y="303.3" width="1" height="0.3"/><circle cx="195.5" cy="305.5" r="3.5"/><rect x="195.8" y="303.1" width="1" height="0.4"/><rect x="196.8" y="302.9" width="1" height="0.6"/><circle cx="197.1" cy="305.3" r="3.5"/><rect x="197.8" y="302.1" width="1" height="1.5"/><circle cx="197.8" cy="300.3" r="3.5"/><rect x="198.8" y="300.6" width="1" height="3.0"/><rect x="199.8" y="299.1" width="1" height="4.5"/><circle cx="200.2" cy="296.8" r="3.5"/><rect x="200.8" y="299.3" width="1" height="4.3"/><circle cx="201.1" cy="302.9" r="3.5"/><rect x="201.8" y="300.3" width="1" height="3.3"/><rect x="202.8" y="301.3" width="1" height="2.3"/><circle cx="202.8" cy="300.2" r="3.5"/><rect x="203.8" y="302.3" width="1" height="2.1"/><circle cx="204.5" cy="304.0" r="3.5"/><rect x="204.8" y="303.6" width="1" height="1.7"/><circle cx="204.8" cy="301.5" r="3.5"/><rect x="205.8" y="305.5" width="1" height="0.9"/><circle cx="206.3" cy="308.6" r="3.5"/><rect x="206.8" y="307.3" width="1" height="0.1"/><circle cx="207.4" cy="305.9" r="3.5"/><circle cx="208.6" cy="310.9" r="3.5"/><circle cx="210.7" cy="310.7" r="3.5"/><circle cx="210.8" cy="305.9" r="3.5"/><circle cx="212.0" cy="309.2" r="3.5"/><rect x="212.8" y="305.9" width="1" height="0.2"/><circle cx="213.0" cy="303.6" r="3.5"/><rect x="213.8" y="304.7" width="1" height="0.5"/><circle cx="214.5" cy="304.5" r="3.5"/><rect x="214.8" y="303.7" width="1" height="1.0"/><circle cx="215.1" cy="303.7" r="3.5"/><rect x="215.8" y="302.7" width="1" height="1.5"/><circle cx="216.6" cy="305.1" r="3.5"/><rect x="216.8" y="301.7" width="1" height="2.0"/><rect x="217.8" y="300.7" width="1" height="2.5"/><circle cx="218.8" cy="300.0" r="3.5"/><rect x="218.8" y="299.7" width="1" height="3.0"/><circle cx="219.6" cy="303.0" r="3.5"/><rect x="219.8" y="298.7" width="1" height="3.5"/><circle cx="219.8" cy="296.9" r="3.5"/><rect x="220.8" y="299.8" width="1" height="3.0"/><circle cx="221.4" cy="300.5" r="3.5"/><rect x="221.8" y="301.1" width="1" height="2.4"/><circle cx="222.3" cy="303.6" r="3.5"/><rect x="222.8" y="302.5" width="1" height="1.8"/><circle cx="223.1" cy="304.4" r="3.5"/><rect x="223.8" y="303.8" width="1" height="1.2"/><circle cx="224.6" cy="303.7" r="3.5"/><rect x="224.8" y="304.3" width="1" height="1.5"/><rect x="225.8" y="304.5" width="1" height="1.9"/><circle cx="226.0" cy="302.5" r="3.5"/><rect x="226.8" y="304.7" width="1" height="1.8"/><circle cx="227.0" cy="308.7" r="3.5"/><rect x="227.8" y="304.8" width="1" height="1.8"/><rect x="228.8" y="305.1" width="1" height="1.7"/><rect x="229.8" y="305.3" width="1" height="1.6"/><circle cx="230.8" cy="306.7" r="3.5"/><rect x="230.8" y="305.6" width="1" height="1.5"/><circle cx="231.0" cy="307.9" r="3.5"/><rect x="231.8" y="305.8" width="1" height="1.3"/><circle cx="231.9" cy="305.6" r="3.5"/><rect x="232.8" y="306.1" width="1" height="1.2"/><circle cx="233.6" cy="304.7" r="3.5"/><rect x="233.8" y="306.3" width="1" height="1.1"/><circle cx="233.9" cy="309.8" r="3.5"/><rect x="234.8" y="306.6" width="1" height="1.0"/><circle cx="235.2" cy="309.9" r="3.5"/><rect x="235.8" y="306.8" width="1" height="0.8"/><circle cx="236.5" cy="306.6" r="3.5"/><rect x="236.8" y="307.1" width="1" height="0.7"/><circle cx="237.5" cy="307.3" r="3.5"/><rect x="237.8" y="307.3" width="1" height="1.3"/><circle cx="238.3" cy="309.1" r="3.5"/><rect x="238.8" y="307.6" width="1" height="1.9"/><circle cx="238.8" cy="305.4" r="3.5"/><rect x="239.8" y="307.9" width="1" height="2.5"/><circle cx="240.0" cy="312.8" r="3.5"/><rect x="240.8" y="308.9" width="1" height="2.3"/><rect x="241.8" y="309.9" width="1" height="2.2"/><circle cx="242.0" cy="312.0" r="3.5"/><rect x="242.8" y="310.9" width="1" height="1.6"/><circle cx="243.1" cy="313.7" r="3.5"/><rect x="243.8" y="311.9" width="1" height="0.1"/><circle cx="244.5" cy="311.7" r="3.5"/><rect x="244.8" y="310.7" width="1" height="0.8"/><circle cx="245.6" cy="310.6" r="3.5"/><rect x="245.8" y="309.4" width="1" height="1.7"/><circle cx="246.7" cy="309.4" r="3.5"/><rect x="246.8" y="308.0" width="1" height="2.5"/><circle cx="247.1" cy="312.8" r="3.5"/><rect x="247.8" y="306.6" width="1" height="3.4"/><circle cx="248.3" cy="311.9" r="3.5"/><rect x="248.8" y="305.2" width="1" height="4.3"/><circle cx="249.5" cy="311.4" r="3.5"/><rect x="249.8" y="304.8" width="1" height="6.6"/><circle cx="250.3" cy="302.4" r="3.5"/><rect x="250.8" y="304.2" width="1" height="4.9"/><circle cx="251.2" cy="308.3" r="3.5"/><rect x="251.8" y="303.5" width="1" height="3.2"/><circle cx="252.5" cy="306.6" r="3.5"/><rect x="252.8" y="302.9" width="1" height="1.5"/><circle cx="253.3" cy="300.5" r="3.5"/><rect x="254.8" y="301.7" width="1" height="1.0"/><circle cx="255.0" cy="301.9" r="3.5"/><rect x="255.8" y="301.7" width="1" height="1.4"/><circle cx="256.5" cy="304.8" r="3.5"/><rect x="256.8" y="302.2" width="1" height="1.4"/><rect x="257.8" y="302.7" width="1" height="1.4"/><circle cx="258.3" cy="300.7" r="3.5"/><rect x="258.8" y="303.2" width="1" height="1.4"/><circle cx="259.4" cy="306.6" r="3.5"/><rect x="259.8" y="303.7" width="1" height="1.4"/><circle cx="260.4" cy="303.8" r="3.5"/><rect x="260.8" y="304.2" width="1" height="1.4"/><circle cx="261.2" cy="303.3" r="3.5"/><rect x="261.8" y="304.7" width="1" height="1.4"/><circle cx="262.4" cy="308.4" r="3.5"/><rect x="262.8" y="305.2" width="1" height="1.1"/><circle cx="263.1" cy="303.6" r="3.5"/><rect x="263.8" y="305.7" width="1" height="0.7"/><circle cx="264.5" cy="307.2" r="3.5"/><rect x="264.8" y="305.8" width="1" height="0.5"/><circle cx="265.6" cy="303.7" r="3.5"/><rect x="265.8" y="306.0" width="1" height="0.4"/><circle cx="266.0" cy="304.7" r="3.5"/><rect x="266.8" y="306.1" width="1" height="0.2"/><circle cx="267.2" cy="308.7" r="3.5"/><rect x="267.8" y="306.3" width="1" height="0.1"/><circle cx="269.6" cy="304.4" r="3.5"/><circle cx="270.3" cy="304.6" r="3.5"/><circle cx="272.9" cy="305.5" r="3.5"/><rect x="273.8" y="307.2" width="1" height="0.4"/><rect x="274.8" y="307.3" width="1" height="1.0"/><circle cx="275.0" cy="310.8" r="3.5"/><rect x="275.8" y="307.5" width="1" height="1.6"/><rect x="276.8" y="307.6" width="1" height="2.2"/><circle cx="277.6" cy="308.3" r="3.5"/><rect x="277.8" y="307.8" width="1" height="2.8"/><rect x="278.8" y="307.4" width="1" height="2.7"/><circle cx="279.5" cy="306.1" r="3.5"/><rect x="279.8" y="307.0" width="1" height="2.6"/><rect x="280.8" y="306.6" width="1" height="2.4"/><circle cx="281.1" cy="309.4" r="3.5"/><rect x="281.8" y="306.3" width="1" height="2.3"/><circle cx="282.2" cy="304.6" r="3.5"/><rect x="282.8" y="305.9" width="1" height="2.2"/><circle cx="283.0" cy="306.1" r="3.5"/><rect x="283.8" y="305.6" width="1" height="1.9"/><circle cx="284.5" cy="303.8" r="3.5"/><rect x="284.8" y="305.6" width="1" height="1.4"/><circle cx="285.8" cy="303.8" r="3.5"/><rect x="285.8" y="305.6" width="1" height="0.9"/><rect x="286.8" y="305.6" width="1" height="0.4"/><circle cx="287.0" cy="303.6" r="3.5"/><circle cx="288.5" cy="304.6" r="3.5"/><circle cx="289.5" cy="305.2" r="3.5"/><circle cx="290.9" cy="304.5" r="3.5"/><circle cx="292.2" cy="307.3" r="3.5"/><circle cx="293.5" cy="304.0" r="3.5"/><circle cx="293.8" cy="303.9" r="3.5"/><circle cx="294.9" cy="304.4" r="3.5"/><circle cx="296.4" cy="305.6" r="3.5"/><circle cx="297.1" cy="305.1" r="3.5"/><circle cx="300.0" cy="308.1" r="3.5"/><circle cx="301.1" cy="308.1" r="3.5"/><circle cx="302.7" cy="304.0" r="3.5"/><rect x="302.8" y="306.3" width="1" height="0.0"/><circle cx="303.6" cy="308.5" r="3.5"/><rect x="303.8" y="306.2" width="1" height="0.3"/><circle cx="304.8" cy="308.5" r="3.5"/><rect x="304.8" y="306.0" width="1" height="0.7"/><circle cx="305.0" cy="303.9" r="3.5"/><rect x="305.8" y="305.9" width="1" height="1.1"/><circle cx="305.8" cy="308.2" r="3.5"/><rect x="306.8" y="305.7" width="1" height="1.5"/><circle cx="306.8" cy="307.1" r="3.5"/><rect x="307.8" y="305.8" width="1" height="1.7"/><circle cx="308.1" cy="307.9" r="3.5"/><rect x="308.8" y="306.1" width="1" height="1.6"/><rect x="309.8" y="306.4" width="1" height="1.6"/><circle cx="309.8" cy="310.0" r="3.5"/><rect x="310.8" y="306.8" width="1" height="1.5"/><rect x="311.8" y="307.1" width="1" height="1.4"/><circle cx="312.0" cy="305.2" r="3.5"/><rect x="312.8" y="307.4" width="1" height="1.3"/><circle cx="313.8" cy="307.0" r="3.5"/><rect x="313.8" y="307.8" width="1" height="1.2"/><rect x="314.8" y="308.1" width="1" height="1.1"/><circle cx="315.7" cy="308.7" r="3.5"/><rect x="315.8" y="308.4" width="1" height="1.0"/><rect x="316.8" y="308.4" width="1" height="1.3"/><circle cx="317.6" cy="307.1" r="3.5"/><rect x="317.8" y="308.3" width="1" height="1.6"/><rect x="318.8" y="308.1" width="1" height="1.9"/><circle cx="318.9" cy="312.5" r="3.5"/><rect x="319.8" y="308.0" width="1" height="2.2"/><rect x="320.8" y="307.9" width="1" height="2.5"/><rect x="321.8" y="307.8" width="1" height="2.7"/><rect x="322.8" y="307.7" width="1" height="2.5"/><circle cx="323.4" cy="311.5" r="3.5"/><rect x="323.8" y="307.6" width="1" height="2.3"/><circle cx="324.6" cy="311.1" r="3.5"/><rect x="324.8" y="307.5" width="1" height="2.1"/><circle cx="325.7" cy="311.8" r="3.5"/><rect x="325.8" y="307.4" width="1" height="1.9"/><circle cx="326.0" cy="311.6" r="3.5"/><rect x="326.8" y="307.3" width="1" height="1.8"/><rect x="327.8" y="307.1" width="1" height="1.6"/><circle cx="328.0" cy="305.9" r="3.5"/><rect x="328.8" y="307.1" width="1" height="1.4"/><circle cx="329.5" cy="310.3" r="3.5"/><rect x="329.8" y="307.1" width="1" height="1.1"/><circle cx="330.4" cy="309.4" r="3.5"/><rect x="330.8" y="307.2" width="1" height="0.8"/><rect x="331.8" y="307.3" width="1" height="0.6"/><rect x="332.8" y="307.3" width="1" height="0.3"/><circle cx="333.6" cy="305.3" r="3.5"/><rect x="333.8" y="307.4" width="1" height="0.0"/><circle cx="334.6" cy="307.9" r="3.5"/><circle cx="335.2" cy="309.6" r="3.5"/><circle cx="335.8" cy="305.7" r="3.5"/><circle cx="337.5" cy="305.2" r="3.5"/><circle cx="337.9" cy="307.8" r="3.5"/><circle cx="339.9" cy="308.7" r="3.5"/><circle cx="341.7" cy="307.9" r="3.5"/><circle cx="342.6" cy="306.1" r="3.5"/><circle cx="345.9" cy="304.6" r="3.5"/><rect x="346.8" y="306.9" width="1" height="0.0"/><circle cx="347.5" cy="307.2" r="3.5"/><rect x="347.8" y="306.8" width="1" height="0.5"/><circle cx="348.5" cy="309.7" r="3.5"/><rect x="348.8" y="306.7" width="1" height="0.9"/><circle cx="349.0" cy="304.9" r="3.5"/><rect x="349.8" y="306.5" width="1" height="1.3"/><circle cx="350.4" cy="309.8" r="3.5"/><rect x="350.8" y="306.4" width="1" height="1.8"/><circle cx="351.4" cy="306.4" r="3.5"/><rect x="351.8" y="306.3" width="1" height="2.2"/><rect x="352.8" y="306.2" width="1" height="2.6"/><circle cx="352.8" cy="306.5" r="3.5"/><rect x="353.8" y="306.1" width="1" height="3.0"/><circle cx="354.2" cy="309.1" r="3.5"/><rect x="354.8" y="306.0" width="1" height="3.2"/><circle cx="355.5" cy="310.8" r="3.5"/><rect x="355.8" y="305.9" width="1" height="3.3"/><circle cx="356.0" cy="304.3" r="3.5"/><rect x="356.8" y="305.8" width="1" height="3.4"/><rect x="357.8" y="305.7" width="1" height="3.5"/><circle cx="358.1" cy="303.8" r="3.5"/><rect x="358.8" y="305.8" width="1" height="3.4"/><circle cx="359.4" cy="306.8" r="3.5"/><rect x="359.8" y="305.9" width="1" height="3.2"/><circle cx="360.7" cy="309.0" r="3.5"/><rect x="360.8" y="306.1" width="1" height="3.0"/><circle cx="361.6" cy="303.8" r="3.5"/><rect x="361.8" y="306.3" width="1" height="2.9"/><circle cx="362.6" cy="304.9" r="3.5"/><rect x="362.8" y="306.5" width="1" height="2.7"/><circle cx="363.7" cy="310.8" r="3.5"/><rect x="363.8" y="306.7" width="1" height="2.5"/><circle cx="364.0" cy="306.9" r="3.5"/><rect x="364.8" y="306.9" width="1" height="2.3"/><rect x="365.8" y="307.1" width="1" height="1.8"/><circle cx="366.2" cy="308.8" r="3.5"/><rect x="366.8" y="307.3" width="1" height="0.9"/><circle cx="367.0" cy="305.3" r="3.5"/><rect x="367.8" y="307.4" width="1" height="0.1"/><circle cx="369.5" cy="308.7" r="3.5"/><rect x="369.8" y="308.7" width="1" height="5.4"/><circle cx="370.2" cy="307.7" r="3.5"/><rect x="370.8" y="309.4" width="1" height="4.3"/><circle cx="371.0" cy="313.1" r="3.5"/><rect x="371.8" y="310.1" width="1" height="3.2"/><circle cx="372.1" cy="315.1" r="3.5"/><rect x="372.8" y="310.8" width="1" height="2.1"/><circle cx="372.8" cy="310.2" r="3.5"/><rect x="373.8" y="311.5" width="1" height="1.1"/><rect x="374.8" y="312.2" width="1" height="0.0"/><circle cx="375.0" cy="311.5" r="3.5"/><circle cx="376.5" cy="310.7" r="3.5"/><circle cx="378.5" cy="311.9" r="3.5"/><circle cx="379.1" cy="313.3" r="3.5"/><circle cx="380.4" cy="314.2" r="3.5"/><rect x="381.8" y="314.9" width="1" height="2.8"/><circle cx="382.3" cy="312.8" r="3.5"/><rect x="382.8" y="314.7" width="1" height="4.0"/><circle cx="382.9" cy="313.1" r="3.5"/><rect x="383.8" y="314.4" width="1" height="3.7"/><circle cx="384.7" cy="318.5" r="3.5"/><rect x="384.8" y="314.2" width="1" height="3.4"/><rect x="385.8" y="313.9" width="1" height="3.0"/><circle cx="386.6" cy="318.0" r="3.5"/><rect x="386.8" y="313.7" width="1" height="2.7"/><circle cx="387.4" cy="316.6" r="3.5"/><rect x="387.8" y="313.4" width="1" height="2.4"/><circle cx="388.6" cy="311.4" r="3.5"/><rect x="388.8" y="313.2" width="1" height="2.0"/><circle cx="389.1" cy="310.8" r="3.5"/><rect x="389.8" y="312.9" width="1" height="1.7"/><circle cx="390.1" cy="310.9" r="3.5"/><rect x="390.8" y="312.7" width="1" height="1.4"/><circle cx="391.4" cy="315.9" r="3.5"/><rect x="391.8" y="312.6" width="1" height="1.7"/><circle cx="392.2" cy="310.4" r="3.5"/><rect x="392.8" y="312.6" width="1" height="1.9"/><circle cx="393.7" cy="312.1" r="3.5"/><rect x="393.8" y="312.5" width="1" height="2.2"/><circle cx="394.6" cy="311.7" r="3.5"/><rect x="394.8" y="312.5" width="1" height="2.4"/><circle cx="395.5" cy="317.2" r="3.5"/><rect x="395.8" y="312.4" width="1" height="2.7"/><circle cx="396.0" cy="311.2" r="3.5"/><rect x="396.8" y="312.3" width="1" height="2.9"/><circle cx="397.3" cy="316.9" r="3.5"/><rect x="397.8" y="312.3" width="1" height="3.2"/><circle cx="398.8" cy="311.6" r="3.5"/><rect x="398.8" y="312.2" width="1" height="3.4"/><circle cx="399.3" cy="317.2" r="3.5"/><rect x="399.8" y="312.1" width="1" height="3.7"/><circle cx="400.4" cy="318.1" r="3.5"/><rect x="400.8" y="312.1" width="1" height="3.9"/><circle cx="401.5" cy="309.8" r="3.5"/><rect x="401.8" y="312.0" width="1" height="4.2"/><circle cx="402.0" cy="317.8" r="3.5"/><rect x="402.8" y="311.9" width="1" height="4.0"/><circle cx="402.8" cy="310.3" r="3.5"/><rect x="403.8" y="311.9" width="1" height="3.7"/><circle cx="404.5" cy="309.5" r="3.5"/><rect x="404.8" y="311.8" width="1" height="3.4"/><circle cx="404.9" cy="311.5" r="3.5"/><rect x="405.8" y="311.7" width="1" height="3.2"/><circle cx="406.2" cy="316.6" r="3.5"/><rect x="406.8" y="311.7" width="1" height="2.9"/><circle cx="407.1" cy="314.8" r="3.5"/><rect x="407.8" y="311.6" width="1" height="2.6"/><rect x="408.8" y="311.5" width="1" height="2.3"/><circle cx="408.8" cy="315.5" r="3.5"/><rect x="409.8" y="311.4" width="1" height="2.0"/><circle cx="410.7" cy="311.2" r="3.5"/><rect x="410.8" y="311.4" width="1" height="1.7"/><rect x="411.8" y="311.3" width="1" height="1.4"/><circle cx="412.1" cy="310.4" r="3.5"/><rect x="412.8" y="311.0" width="1" height="1.9"/><circle cx="413.5" cy="315.2" r="3.5"/><rect x="413.8" y="310.6" width="1" height="2.4"/><circle cx="414.2" cy="309.3" r="3.5"/><rect x="414.8" y="310.3" width="1" height="2.9"/><circle cx="415.3" cy="308.6" r="3.5"/><rect x="415.8" y="309.9" width="1" height="3.5"/><circle cx="415.9" cy="314.3" r="3.5"/><rect x="416.8" y="309.5" width="1" height="4.0"/><circle cx="417.7" cy="308.9" r="3.5"/><rect x="417.8" y="309.2" width="1" height="4.5"/><circle cx="418.2" cy="309.9" r="3.5"/><rect x="418.8" y="308.8" width="1" height="5.0"/><circle cx="418.9" cy="306.6" r="3.5"/><rect x="419.8" y="308.5" width="1" height="5.6"/><circle cx="420.3" cy="315.9" r="3.5"/><rect x="420.8" y="308.1" width="1" height="6.2"/><circle cx="421.5" cy="313.3" r="3.5"/><rect x="421.8" y="307.8" width="1" height="6.9"/><circle cx="421.9" cy="313.8" r="3.5"/><rect x="422.8" y="308.5" width="1" height="6.5"/><circle cx="423.5" cy="315.9" r="3.5"/><rect x="423.8" y="309.3" width="1" height="6.1"/><circle cx="423.9" cy="316.6" r="3.5"/><rect x="424.8" y="310.0" width="1" height="5.7"/><circle cx="425.6" cy="311.6" r="3.5"/><rect x="425.8" y="310.8" width="1" height="5.4"/><circle cx="426.5" cy="308.3" r="3.5"/><rect x="426.8" y="311.5" width="1" height="5.0"/><circle cx="427.0" cy="316.4" r="3.5"/><rect x="427.8" y="312.3" width="1" height="4.6"/><circle cx="428.5" cy="310.3" r="3.5"/><rect x="428.8" y="313.0" width="1" height="4.2"/><circle cx="429.2" cy="315.7" r="3.5"/><rect x="429.8" y="313.8" width="1" height="3.9"/><circle cx="430.7" cy="315.4" r="3.5"/><rect x="430.8" y="314.0" width="1" height="4.0"/><circle cx="430.9" cy="320.0" r="3.5"/><rect x="431.8" y="313.9" width="1" height="4.4"/><circle cx="431.8" cy="319.8" r="3.5"/><rect x="432.8" y="313.8" width="1" height="4.2"/><circle cx="433.3" cy="316.4" r="3.5"/><rect x="433.8" y="313.7" width="1" height="4.0"/><circle cx="433.8" cy="316.5" r="3.5"/><rect x="434.8" y="313.5" width="1" height="3.9"/><circle cx="434.8" cy="311.5" r="3.5"/><rect x="435.8" y="313.4" width="1" height="3.7"/><circle cx="435.9" cy="318.0" r="3.5"/><rect x="436.8" y="313.9" width="1" height="2.9"/><circle cx="436.9" cy="313.0" r="3.5"/><rect x="437.8" y="314.4" width="1" height="2.1"/><rect x="438.8" y="314.9" width="1" height="1.4"/><circle cx="438.9" cy="312.9" r="3.5"/><rect x="439.8" y="315.4" width="1" height="0.8"/><circle cx="440.5" cy="318.4" r="3.5"/><rect x="440.8" y="315.9" width="1" height="0.2"/><circle cx="441.2" cy="318.3" r="3.5"/><circle cx="442.7" cy="316.7" r="3.5"/><rect x="446.8" y="315.6" width="1" height="0.1"/><rect x="447.8" y="315.2" width="1" height="0.4"/><circle cx="448.2" cy="316.4" r="3.5"/><rect x="448.8" y="314.9" width="1" height="0.5"/><rect x="449.8" y="314.5" width="1" height="0.2"/><circle cx="450.5" cy="316.9" r="3.5"/><circle cx="450.9" cy="316.0" r="3.5"/><circle cx="141.3" cy="303.9" r="3.5"/><circle cx="145.5" cy="296.1" r="3.5"/><circle cx="149.8" cy="299.6" r="3.5"/><circle cx="155.4" cy="298.9" r="3.5"/><circle cx="162.5" cy="302.4" r="3.5"/><circle cx="172.4" cy="303.1" r="3.5"/><circle cx="183.6" cy="301.7" r="3.5"/><circle cx="190.7" cy="301.7" r="3.5"/><circle cx="197.8" cy="300.3" r="3.5"/><circle cx="200.6" cy="296.1" r="3.5"/><circle cx="204.8" cy="300.3" r="3.5"/><circle cx="209.1" cy="308.1" r="3.5"/><circle cx="214.7" cy="301.7" r="3.5"/><circle cx="220.4" cy="296.1" r="3.5"/><circle cx="224.6" cy="301.7" r="3.5"/><circle cx="228.8" cy="302.4" r="3.5"/><circle cx="240.1" cy="305.3" r="3.5"/><circle cx="244.4" cy="309.5" r="3.5"/><circle cx="250.0" cy="301.7" r="3.5"/><circle cx="250.0" cy="302.4" r="3.5"/><circle cx="255.6" cy="298.9" r="3.5"/><circle cx="264.1" cy="303.1" r="3.5"/><circle cx="278.2" cy="305.3" r="3.5"/><circle cx="283.9" cy="303.1" r="3.5"/><circle cx="290.9" cy="303.1" r="3.5"/><circle cx="298.0" cy="304.6" r="3.5"/><circle cx="307.9" cy="303.1" r="3.5"/><circle cx="316.4" cy="306.0" r="3.5"/><circle cx="329.1" cy="304.6" r="3.5"/><circle cx="340.4" cy="305.3" r="3.5"/><circle cx="351.6" cy="303.9" r="3.5"/><circle cx="358.7" cy="303.1" r="3.5"/><circle cx="370.0" cy="305.3" r="3.5"/><circle cx="370.0" cy="306.0" r="3.5"/><circle cx="379.9" cy="313.0" r="3.5"/><circle cx="391.2" cy="310.2" r="3.5"/><circle cx="402.5" cy="309.5" r="3.5"/><circle cx="412.4" cy="308.8" r="3.5"/><circle cx="422.2" cy="305.3" r="3.5"/><circle cx="430.7" cy="311.6" r="3.5"/><circle cx="436.4" cy="310.9" r="3.5"/><circle cx="443.4" cy="314.4" r="3.5"/><circle cx="453.3" cy="310.9" r="3.5"/><circle cx="454.0" cy="314.4" r="3.5"/><circle cx="141.3" cy="298.3" r="3.5"/><circle cx="141.3" cy="299.7" r="3.5"/><circle cx="146.9" cy="306.0" r="3.5"/><circle cx="151.2" cy="301.8" r="3.5"/><circle cx="158.2" cy="303.9" r="3.5"/><circle cx="170.9" cy="307.4" r="3.5"/><circle cx="182.2" cy="306.7" r="3.5"/><circle cx="196.4" cy="306.0" r="3.5"/><circle cx="203.4" cy="306.0" r="3.5"/><circle cx="209.1" cy="311.7" r="3.5"/><circle cx="214.7" cy="307.4" r="3.5"/><circle cx="220.4" cy="304.6" r="3.5"/><circle cx="226.0" cy="308.9" r="3.5"/><circle cx="237.3" cy="310.3" r="3.5"/><circle cx="242.9" cy="315.2" r="3.5"/><circle cx="250.0" cy="311.7" r="3.5"/><circle cx="250.0" cy="314.5" r="3.5"/><circle cx="254.2" cy="304.6" r="3.5"/><circle cx="262.7" cy="308.9" r="3.5"/><circle cx="272.6" cy="308.9" r="3.5"/><circle cx="278.2" cy="313.1" r="3.5"/><circle cx="289.5" cy="307.4" r="3.5"/><circle cx="303.6" cy="308.9" r="3.5"/><circle cx="314.9" cy="311.7" r="3.5"/><circle cx="322.0" cy="313.1" r="3.5"/><circle cx="329.1" cy="311.0" r="3.5"/><circle cx="343.2" cy="308.1" r="3.5"/><circle cx="354.5" cy="311.7" r="3.5"/><circle cx="365.8" cy="311.7" r="3.5"/><circle cx="370.0" cy="308.9" r="3.5"/><circle cx="370.0" cy="316.6" r="3.5"/><circle cx="379.9" cy="313.1" r="3.5"/><circle cx="382.7" cy="321.6" r="3.5"/><circle cx="391.2" cy="316.6" r="3.5"/><circle cx="402.5" cy="318.7" r="3.5"/><circle cx="412.4" cy="315.2" r="3.5"/><circle cx="420.8" cy="316.6" r="3.5"/><circle cx="432.1" cy="320.9" r="3.5"/><circle cx="439.2" cy="318.7" r="3.5"/><circle cx="449.1" cy="318.0" r="3.5"/><circle cx="454.0" cy="312.4" r="3.5"/><rect x="462.6" y="304.8" width="1" height="3.2"/><circle cx="463.4" cy="307.5" r="3.5"/><rect x="463.6" y="304.6" width="1" height="3.1"/><circle cx="464.6" cy="309.6" r="3.5"/><rect x="464.6" y="304.4" width="1" height="3.1"/><circle cx="465.5" cy="308.1" r="3.5"/><rect x="465.6" y="304.1" width="1" height="3.0"/><circle cx="466.0" cy="309.0" r="3.5"/><rect x="466.6" y="303.9" width="1" height="2.9"/><circle cx="467.6" cy="301.9" r="3.5"/><rect x="467.6" y="303.7" width="1" height="2.9"/><circle cx="468.6" cy="308.4" r="3.5"/><rect x="468.6" y="303.4" width="1" height="3.0"/><circle cx="469.1" cy="308.0" r="3.5"/><rect x="469.6" y="303.2" width="1" height="3.4"/><circle cx="470.3" cy="308.6" r="3.5"/><rect x="470.6" y="302.9" width="1" height="3.8"/><circle cx="470.7" cy="300.9" r="3.5"/><rect x="471.6" y="302.7" width="1" height="4.2"/><circle cx="472.3" cy="306.1" r="3.5"/><rect x="472.6" y="302.4" width="1" height="4.6"/><circle cx="472.7" cy="300.0" r="3.5"/><rect x="473.6" y="302.2" width="1" height="5.0"/><circle cx="473.8" cy="299.8" r="3.5"/><rect x="474.6" y="301.9" width="1" height="5.5"/><circle cx="475.3" cy="304.6" r="3.5"/><rect x="475.6" y="301.7" width="1" height="5.9"/><circle cx="476.3" cy="309.2" r="3.5"/><rect x="476.6" y="301.4" width="1" height="6.3"/><circle cx="477.5" cy="310.1" r="3.5"/><rect x="477.6" y="301.2" width="1" height="5.5"/><circle cx="478.5" cy="299.2" r="3.5"/><rect x="478.6" y="300.9" width="1" height="4.5"/><circle cx="478.8" cy="298.5" r="3.5"/><rect x="479.6" y="300.7" width="1" height="3.5"/><circle cx="479.8" cy="303.2" r="3.5"/><rect x="480.6" y="300.4" width="1" height="2.5"/><circle cx="481.0" cy="298.7" r="3.5"/><rect x="481.6" y="300.2" width="1" height="1.5"/><circle cx="482.6" cy="297.7" r="3.5"/><rect x="482.6" y="300.0" width="1" height="0.7"/><circle cx="483.0" cy="303.1" r="3.5"/><rect x="483.6" y="300.2" width="1" height="0.7"/><circle cx="484.6" cy="303.0" r="3.5"/><rect x="484.6" y="300.4" width="1" height="0.7"/><circle cx="485.4" cy="301.6" r="3.5"/><rect x="485.6" y="300.6" width="1" height="0.7"/><rect x="486.6" y="300.8" width="1" height="0.7"/><circle cx="487.5" cy="303.4" r="3.5"/><rect x="487.6" y="301.0" width="1" height="0.7"/><circle cx="487.8" cy="298.7" r="3.5"/><rect x="488.6" y="301.2" width="1" height="0.7"/><circle cx="489.6" cy="298.8" r="3.5"/><rect x="489.6" y="304.1" width="1" height="1.4"/><circle cx="490.6" cy="301.8" r="3.5"/><rect x="490.6" y="303.3" width="1" height="1.5"/><circle cx="490.8" cy="307.0" r="3.5"/><rect x="491.6" y="302.5" width="1" height="1.6"/><rect x="492.6" y="301.7" width="1" height="1.7"/><circle cx="493.1" cy="299.9" r="3.5"/><rect x="493.6" y="300.9" width="1" height="1.8"/><circle cx="493.8" cy="304.9" r="3.5"/><rect x="494.6" y="300.1" width="1" height="1.9"/><rect x="495.6" y="299.3" width="1" height="2.0"/><circle cx="496.1" cy="303.1" r="3.5"/><rect x="496.6" y="298.6" width="1" height="2.1"/><circle cx="497.2" cy="296.2" r="3.5"/><rect x="497.6" y="299.0" width="1" height="1.7"/><circle cx="498.2" cy="299.7" r="3.5"/><rect x="498.6" y="299.4" width="1" height="1.3"/><circle cx="499.3" cy="300.1" r="3.5"/><rect x="499.6" y="299.8" width="1" height="0.9"/><circle cx="500.4" cy="302.1" r="3.5"/><rect x="500.6" y="300.2" width="1" height="0.5"/><rect x="501.6" y="300.6" width="1" height="0.1"/><circle cx="502.1" cy="298.3" r="3.5"/><circle cx="504.0" cy="303.1" r="3.5"/><circle cx="505.6" cy="302.8" r="3.5"/><circle cx="506.6" cy="300.9" r="3.5"/><circle cx="506.9" cy="303.2" r="3.5"/><circle cx="508.9" cy="303.0" r="3.5"/><circle cx="511.4" cy="302.0" r="3.5"/><circle cx="512.2" cy="302.0" r="3.5"/><circle cx="514.6" cy="298.8" r="3.5"/><circle cx="514.8" cy="299.3" r="3.5"/><circle cx="516.4" cy="298.5" r="3.5"/><circle cx="516.7" cy="300.6" r="3.5"/><circle cx="463.1" cy="303.1" r="3.5"/><circle cx="468.8" cy="301.0" r="3.5"/><circle cx="482.9" cy="297.5" r="3.5"/><circle cx="490.0" cy="298.9" r="3.5"/><circle cx="490.0" cy="301.7" r="3.5"/><circle cx="497.1" cy="296.1" r="3.5"/><circle cx="504.1" cy="298.9" r="3.5"/><circle cx="517.8" cy="298.2" r="3.5"/><circle cx="517.8" cy="301.0" r="3.5"/><circle cx="463.1" cy="308.9" r="3.5"/><circle cx="463.1" cy="311.0" r="3.5"/><circle cx="468.8" cy="308.9" r="3.5"/><circle cx="477.3" cy="310.3" r="3.5"/><circle cx="482.9" cy="303.2" r="3.5"/><circle cx="490.0" cy="304.6" r="3.5"/><circle cx="490.0" cy="308.1" r="3.5"/><circle cx="497.1" cy="303.2" r="3.5"/><circle cx="508.4" cy="303.2" r="3.5"/><circle cx="517.8" cy="300.4" r="3.5"/><circle cx="517.8" cy="299.0" r="3.5"/><circle cx="529.9" cy="303.5" r="3.5"/><circle cx="530.8" cy="304.5" r="3.5"/><rect x="533.0" y="305.3" width="1" height="0.1"/><circle cx="533.9" cy="307.6" r="3.5"/><rect x="534.0" y="305.7" width="1" height="0.7"/><rect x="535.0" y="306.0" width="1" height="1.4"/><circle cx="535.6" cy="304.0" r="3.5"/><rect x="536.0" y="306.3" width="1" height="2.1"/><circle cx="536.7" cy="310.3" r="3.5"/><rect x="537.0" y="305.5" width="1" height="2.2"/><circle cx="537.5" cy="308.4" r="3.5"/><rect x="538.0" y="304.6" width="1" height="2.3"/><circle cx="538.5" cy="302.6" r="3.5"/><rect x="539.0" y="303.7" width="1" height="2.5"/><circle cx="539.1" cy="308.5" r="3.5"/><rect x="540.0" y="302.8" width="1" height="2.6"/><rect x="541.0" y="301.9" width="1" height="2.7"/><circle cx="541.4" cy="306.5" r="3.5"/><rect x="542.0" y="301.0" width="1" height="2.8"/><circle cx="542.6" cy="301.4" r="3.5"/><rect x="543.0" y="300.1" width="1" height="2.9"/><rect x="544.0" y="300.1" width="1" height="2.1"/><circle cx="544.6" cy="301.3" r="3.5"/><rect x="545.0" y="300.3" width="1" height="1.2"/><circle cx="545.3" cy="300.7" r="3.5"/><rect x="546.0" y="300.5" width="1" height="0.2"/><circle cx="546.3" cy="299.8" r="3.5"/><rect x="547.0" y="300.6" width="1" height="0.2"/><rect x="548.0" y="300.8" width="1" height="0.2"/><circle cx="548.4" cy="301.8" r="3.5"/><rect x="549.0" y="301.0" width="1" height="0.1"/><circle cx="549.7" cy="298.8" r="3.5"/><rect x="550.0" y="301.1" width="1" height="0.1"/><rect x="551.0" y="301.3" width="1" height="0.0"/><circle cx="551.8" cy="303.7" r="3.5"/><circle cx="553.0" cy="303.9" r="3.5"/><circle cx="556.0" cy="299.7" r="3.5"/><circle cx="557.1" cy="304.3" r="3.5"/><rect x="558.0" y="302.1" width="1" height="0.1"/><circle cx="558.3" cy="304.4" r="3.5"/><rect x="559.0" y="302.1" width="1" height="0.3"/><rect x="560.0" y="302.1" width="1" height="0.5"/><circle cx="560.8" cy="299.7" r="3.5"/><rect x="561.0" y="302.1" width="1" height="0.7"/><rect x="562.0" y="302.1" width="1" height="0.9"/><circle cx="562.8" cy="300.3" r="3.5"/><rect x="563.0" y="302.1" width="1" height="1.1"/><rect x="564.0" y="302.1" width="1" height="1.3"/><circle cx="564.1" cy="305.3" r="3.5"/><rect x="565.0" y="302.1" width="1" height="1.5"/><circle cx="565.8" cy="300.9" r="3.5"/><rect x="566.0" y="302.1" width="1" height="1.7"/><rect x="567.0" y="302.1" width="1" height="1.9"/><circle cx="567.6" cy="300.3" r="3.5"/><rect x="568.0" y="302.1" width="1" height="2.1"/><circle cx="568.1" cy="301.0" r="3.5"/><rect x="569.0" y="302.2" width="1" height="2.2"/><circle cx="569.0" cy="300.1" r="3.5"/><rect x="570.0" y="302.5" width="1" height="2.2"/><circle cx="570.9" cy="300.5" r="3.5"/><rect x="571.0" y="302.7" width="1" height="2.1"/><circle cx="571.3" cy="302.4" r="3.5"/><rect x="572.0" y="303.0" width="1" height="1.9"/><circle cx="572.8" cy="302.0" r="3.5"/><rect x="573.0" y="303.2" width="1" height="1.5"/><circle cx="573.3" cy="307.0" r="3.5"/><rect x="574.0" y="303.5" width="1" height="1.1"/><circle cx="574.3" cy="301.4" r="3.5"/><rect x="575.0" y="303.7" width="1" height="0.8"/><circle cx="575.2" cy="302.2" r="3.5"/><rect x="576.0" y="304.0" width="1" height="0.4"/><circle cx="576.7" cy="303.2" r="3.5"/><rect x="577.0" y="304.2" width="1" height="0.0"/><rect x="578.0" y="304.0" width="1" height="0.1"/><circle cx="578.4" cy="306.4" r="3.5"/><rect x="579.0" y="303.7" width="1" height="0.2"/><circle cx="579.4" cy="305.5" r="3.5"/><rect x="580.0" y="303.5" width="1" height="0.4"/><rect x="581.0" y="303.2" width="1" height="0.5"/><rect x="582.0" y="303.0" width="1" height="0.6"/><circle cx="582.8" cy="304.5" r="3.5"/><rect x="583.0" y="302.7" width="1" height="0.6"/><rect x="584.0" y="302.5" width="1" height="0.4"/><circle cx="584.1" cy="300.3" r="3.5"/><rect x="585.0" y="302.2" width="1" height="0.1"/><circle cx="586.6" cy="303.7" r="3.5"/><circle cx="587.4" cy="303.8" r="3.5"/><circle cx="588.9" cy="302.9" r="3.5"/><circle cx="590.2" cy="302.2" r="3.5"/><circle cx="591.3" cy="301.1" r="3.5"/><circle cx="592.1" cy="299.4" r="3.5"/><circle cx="593.9" cy="300.8" r="3.5"/><circle cx="594.3" cy="301.3" r="3.5"/><circle cx="595.1" cy="300.5" r="3.5"/><circle cx="596.0" cy="298.7" r="3.5"/><circle cx="598.0" cy="300.6" r="3.5"/><circle cx="599.7" cy="300.2" r="3.5"/><circle cx="601.6" cy="300.6" r="3.5"/><circle cx="604.3" cy="299.9" r="3.5"/><circle cx="605.4" cy="298.7" r="3.5"/><circle cx="606.4" cy="298.3" r="3.5"/><circle cx="611.0" cy="300.3" r="3.5"/><rect x="613.0" y="297.9" width="1" height="0.8"/><rect x="614.0" y="296.9" width="1" height="2.1"/><circle cx="614.8" cy="299.1" r="3.5"/><rect x="615.0" y="295.9" width="1" height="3.3"/><circle cx="615.8" cy="294.2" r="3.5"/><rect x="616.0" y="294.9" width="1" height="4.6"/><circle cx="616.7" cy="293.7" r="3.5"/><rect x="617.0" y="294.6" width="1" height="5.2"/><circle cx="617.9" cy="301.7" r="3.5"/><rect x="618.0" y="295.1" width="1" height="4.9"/><circle cx="618.8" cy="297.2" r="3.5"/><rect x="619.0" y="295.6" width="1" height="4.4"/><circle cx="619.2" cy="293.2" r="3.5"/><rect x="620.0" y="296.1" width="1" height="3.8"/><circle cx="620.2" cy="294.2" r="3.5"/><rect x="621.0" y="296.6" width="1" height="3.3"/><circle cx="622.0" cy="297.4" r="3.5"/><rect x="622.0" y="297.1" width="1" height="2.7"/><circle cx="622.5" cy="299.4" r="3.5"/><rect x="623.0" y="297.6" width="1" height="2.1"/><rect x="624.0" y="298.1" width="1" height="1.6"/><circle cx="624.6" cy="297.6" r="3.5"/><rect x="625.0" y="298.6" width="1" height="1.0"/><circle cx="625.5" cy="299.6" r="3.5"/><rect x="626.0" y="299.1" width="1" height="0.5"/><circle cx="626.7" cy="298.9" r="3.5"/><circle cx="628.0" cy="298.8" r="3.5"/><circle cx="629.4" cy="298.0" r="3.5"/><circle cx="630.8" cy="300.1" r="3.5"/><circle cx="631.8" cy="299.3" r="3.5"/><circle cx="632.4" cy="302.0" r="3.5"/><circle cx="633.2" cy="301.9" r="3.5"/><circle cx="634.2" cy="300.9" r="3.5"/><circle cx="635.1" cy="302.0" r="3.5"/><circle cx="638.9" cy="301.5" r="3.5"/><rect x="639.0" y="303.4" width="1" height="0.0"/><circle cx="639.5" cy="300.9" r="3.5"/><rect x="640.0" y="303.3" width="1" height="0.6"/><rect x="641.0" y="303.3" width="1" height="1.0"/><circle cx="641.8" cy="301.6" r="3.5"/><rect x="642.0" y="303.2" width="1" height="1.2"/><circle cx="642.1" cy="306.4" r="3.5"/><rect x="643.0" y="303.1" width="1" height="1.3"/><rect x="644.0" y="303.0" width="1" height="1.5"/><rect x="645.0" y="302.9" width="1" height="1.7"/><rect x="646.0" y="302.8" width="1" height="1.8"/><circle cx="646.2" cy="305.7" r="3.5"/><rect x="647.0" y="302.8" width="1" height="2.0"/><rect x="648.0" y="302.7" width="1" height="2.2"/><circle cx="649.0" cy="301.4" r="3.5"/><rect x="649.0" y="302.6" width="1" height="2.3"/><circle cx="649.6" cy="300.9" r="3.5"/><rect x="650.0" y="302.5" width="1" height="2.1"/><circle cx="650.5" cy="306.0" r="3.5"/><rect x="651.0" y="302.4" width="1" height="1.9"/><circle cx="651.9" cy="299.9" r="3.5"/><rect x="652.0" y="302.3" width="1" height="1.6"/><rect x="653.0" y="302.3" width="1" height="1.4"/><circle cx="653.4" cy="305.5" r="3.5"/><rect x="654.0" y="302.2" width="1" height="1.1"/><circle cx="654.3" cy="305.3" r="3.5"/><rect x="655.0" y="302.1" width="1" height="0.9"/><circle cx="655.2" cy="305.0" r="3.5"/><rect x="656.0" y="302.0" width="1" height="0.6"/><circle cx="656.5" cy="302.0" r="3.5"/><rect x="657.0" y="301.9" width="1" height="0.4"/><rect x="658.0" y="301.8" width="1" height="0.2"/><circle cx="658.1" cy="300.4" r="3.5"/><rect x="659.0" y="301.8" width="1" height="0.1"/><circle cx="660.0" cy="299.6" r="3.5"/><circle cx="660.4" cy="300.9" r="3.5"/><circle cx="662.6" cy="299.7" r="3.5"/><circle cx="663.4" cy="302.9" r="3.5"/><circle cx="664.4" cy="303.0" r="3.5"/><circle cx="665.7" cy="301.4" r="3.5"/><circle cx="667.8" cy="300.6" r="3.5"/><circle cx="668.7" cy="302.5" r="3.5"/><circle cx="670.0" cy="299.8" r="3.5"/><circle cx="672.0" cy="300.7" r="3.5"/><rect x="673.0" y="301.1" width="1" height="1.0"/><circle cx="673.4" cy="304.0" r="3.5"/><rect x="674.0" y="300.4" width="1" height="2.2"/><circle cx="674.8" cy="304.6" r="3.5"/><rect x="675.0" y="299.8" width="1" height="3.4"/><circle cx="675.3" cy="297.4" r="3.5"/><rect x="676.0" y="299.1" width="1" height="4.6"/><circle cx="676.1" cy="305.5" r="3.5"/><rect x="677.0" y="298.3" width="1" height="5.8"/><circle cx="677.3" cy="305.6" r="3.5"/><rect x="678.0" y="297.6" width="1" height="7.0"/><circle cx="678.9" cy="303.8" r="3.5"/><rect x="679.0" y="297.3" width="1" height="7.9"/><circle cx="679.0" cy="296.2" r="3.5"/><rect x="680.0" y="297.5" width="1" height="8.5"/><circle cx="680.6" cy="304.9" r="3.5"/><rect x="681.0" y="297.8" width="1" height="9.0"/><circle cx="681.1" cy="295.8" r="3.5"/><rect x="682.0" y="298.0" width="1" height="9.6"/><circle cx="682.1" cy="305.8" r="3.5"/><circle cx="682.4" cy="296.6" r="3.5"/><rect x="683.0" y="298.3" width="1" height="10.1"/><circle cx="683.3" cy="302.3" r="3.5"/><rect x="684.0" y="298.5" width="1" height="10.7"/><circle cx="684.7" cy="311.3" r="3.5"/><circle cx="684.4" cy="296.3" r="3.5"/><rect x="685.0" y="298.8" width="1" height="11.2"/><circle cx="685.5" cy="311.0" r="3.5"/><rect x="686.0" y="299.0" width="1" height="11.4"/><circle cx="686.0" cy="296.7" r="3.5"/><rect x="687.0" y="299.3" width="1" height="10.7"/><circle cx="687.1" cy="307.1" r="3.5"/><rect x="688.0" y="300.1" width="1" height="9.4"/><circle cx="688.5" cy="308.9" r="3.5"/><circle cx="688.8" cy="298.7" r="3.5"/><rect x="689.0" y="301.0" width="1" height="8.0"/><circle cx="690.0" cy="310.9" r="3.5"/><rect x="690.0" y="301.9" width="1" height="6.6"/><circle cx="690.3" cy="310.1" r="3.5"/><rect x="691.0" y="302.8" width="1" height="5.2"/><circle cx="691.8" cy="303.0" r="3.5"/><rect x="692.0" y="303.7" width="1" height="3.8"/><circle cx="692.7" cy="308.4" r="3.5"/><rect x="693.0" y="304.6" width="1" height="2.4"/><circle cx="694.0" cy="308.7" r="3.5"/><rect x="694.0" y="305.5" width="1" height="1.0"/><rect x="695.0" y="304.7" width="1" height="2.3"/><rect x="696.0" y="303.6" width="1" height="4.4"/><circle cx="696.9" cy="309.4" r="3.5"/><rect x="697.0" y="302.4" width="1" height="6.5"/><circle cx="697.1" cy="304.8" r="3.5"/><rect x="698.0" y="301.2" width="1" height="8.5"/><circle cx="698.9" cy="312.1" r="3.5"/><rect x="699.0" y="300.1" width="1" height="10.6"/><circle cx="699.4" cy="298.8" r="3.5"/><rect x="700.0" y="298.9" width="1" height="12.7"/><circle cx="700.2" cy="312.5" r="3.5"/><circle cx="700.5" cy="305.4" r="3.5"/><rect x="701.0" y="297.7" width="1" height="14.7"/><circle cx="701.3" cy="308.9" r="3.5"/><rect x="702.0" y="296.6" width="1" height="16.3"/><circle cx="702.7" cy="300.8" r="3.5"/><rect x="703.0" y="294.3" width="1" height="18.6"/><circle cx="703.8" cy="292.9" r="3.5"/><rect x="704.0" y="289.8" width="1" height="23.3"/><circle cx="704.7" cy="304.3" r="3.5"/><circle cx="704.9" cy="313.8" r="3.5"/><rect x="705.0" y="289.4" width="1" height="23.8"/><circle cx="705.4" cy="294.4" r="3.5"/><circle cx="705.5" cy="289.6" r="3.5"/><rect x="706.0" y="289.4" width="1" height="24.0"/><circle cx="706.3" cy="307.7" r="3.5"/><circle cx="706.6" cy="287.4" r="3.5"/><rect x="707.0" y="289.4" width="1" height="24.1"/><circle cx="707.3" cy="290.1" r="3.5"/><circle cx="707.6" cy="290.1" r="3.5"/><rect x="708.0" y="289.4" width="1" height="24.3"/><circle cx="708.1" cy="311.9" r="3.5"/><circle cx="708.7" cy="313.6" r="3.5"/><rect x="709.0" y="290.1" width="1" height="23.7"/><circle cx="709.8" cy="294.3" r="3.5"/><circle cx="709.2" cy="315.2" r="3.5"/><rect x="710.0" y="291.1" width="1" height="22.9"/><circle cx="710.2" cy="304.0" r="3.5"/><circle cx="710.5" cy="292.4" r="3.5"/><rect x="711.0" y="292.1" width="1" height="22.0"/><circle cx="711.8" cy="299.5" r="3.5"/><circle cx="712.0" cy="292.5" r="3.5"/><rect x="712.0" y="293.1" width="1" height="19.5"/><circle cx="712.4" cy="304.9" r="3.5"/><circle cx="713.0" cy="290.7" r="3.5"/><rect x="713.0" y="294.1" width="1" height="16.8"/><circle cx="713.9" cy="299.6" r="3.5"/><circle cx="713.9" cy="306.7" r="3.5"/><rect x="714.0" y="294.9" width="1" height="13.7"/><circle cx="714.2" cy="310.4" r="3.5"/><circle cx="714.4" cy="293.1" r="3.5"/><rect x="715.0" y="295.7" width="1" height="0.5"/><circle cx="715.7" cy="293.6" r="3.5"/><circle cx="529.5" cy="300.3" r="3.5"/><circle cx="536.6" cy="303.9" r="3.5"/><circle cx="543.6" cy="297.5" r="3.5"/><circle cx="556.4" cy="299.6" r="3.5"/><circle cx="569.1" cy="299.6" r="3.5"/><circle cx="577.5" cy="301.7" r="3.5"/><circle cx="588.8" cy="298.9" r="3.5"/><circle cx="610.0" cy="297.5" r="3.5"/><circle cx="610.0" cy="298.9" r="3.5"/><circle cx="617.1" cy="291.9" r="3.5"/><circle cx="626.9" cy="296.8" r="3.5"/><circle cx="638.2" cy="301.0" r="3.5"/><circle cx="646.7" cy="300.3" r="3.5"/><circle cx="663.6" cy="298.9" r="3.5"/><circle cx="672.1" cy="299.6" r="3.5"/><circle cx="679.2" cy="294.7" r="3.5"/><circle cx="687.6" cy="296.8" r="3.5"/><circle cx="694.7" cy="303.1" r="3.5"/><circle cx="703.2" cy="293.3" r="3.5"/><circle cx="704.6" cy="286.9" r="3.5"/><circle cx="708.8" cy="286.9" r="3.5"/><circle cx="713.8" cy="291.9" r="3.5"/><circle cx="715.9" cy="294.7" r="3.5"/><circle cx="715.9" cy="297.5" r="3.5"/><circle cx="529.5" cy="300.4" r="3.5"/><circle cx="536.6" cy="311.0" r="3.5"/><circle cx="546.5" cy="303.2" r="3.5"/><circle cx="557.8" cy="304.6" r="3.5"/><circle cx="571.9" cy="307.4" r="3.5"/><circle cx="583.2" cy="306.0" r="3.5"/><circle cx="591.6" cy="301.8" r="3.5"/><circle cx="610.0" cy="299.7" r="3.5"/><circle cx="610.0" cy="300.4" r="3.5"/><circle cx="618.5" cy="302.5" r="3.5"/><circle cx="631.2" cy="301.8" r="3.5"/><circle cx="641.1" cy="306.7" r="3.5"/><circle cx="649.5" cy="307.4" r="3.5"/><circle cx="658.0" cy="304.6" r="3.5"/><circle cx="669.3" cy="302.5" r="3.5"/><circle cx="679.2" cy="307.4" r="3.5"/><circle cx="686.2" cy="313.1" r="3.5"/><circle cx="694.7" cy="308.9" r="3.5"/><circle cx="701.8" cy="315.2" r="3.5"/><circle cx="711.6" cy="316.6" r="3.5"/><circle cx="714.5" cy="311.7" r="3.5"/><circle cx="715.2" cy="299.0" r="3.5"/><circle cx="715.9" cy="296.1" r="3.5"/><circle cx="432.8" cy="298.9" r="3.5"/><circle cx="472.4" cy="282.4" r="3.5"/><circle cx="423.4" cy="325.1" r="3.5"/><circle cx="503.4" cy="312.4" r="3.5"/><circle cx="608.6" cy="284.1" r="3.5"/><circle cx="687.6" cy="314.5" r="3.5"/><circle cx="142.0" cy="557.1" r="3.5"/><rect x="142.8" y="559.0" width="1" height="2.2"/><rect x="143.8" y="558.7" width="1" height="2.4"/><circle cx="144.5" cy="558.2" r="3.5"/><rect x="144.8" y="558.3" width="1" height="2.7"/><circle cx="145.3" cy="558.5" r="3.5"/><rect x="145.8" y="557.9" width="1" height="2.9"/><circle cx="146.7" cy="559.9" r="3.5"/><rect x="146.8" y="557.5" width="1" height="3.1"/><circle cx="147.4" cy="562.8" r="3.5"/><rect x="147.8" y="557.2" width="1" height="3.3"/><circle cx="147.9" cy="562.6" r="3.5"/><rect x="148.8" y="556.6" width="1" height="3.7"/><circle cx="149.8" cy="554.5" r="3.5"/><rect x="149.8" y="556.0" width="1" height="4.1"/><rect x="150.8" y="555.4" width="1" height="4.5"/><circle cx="151.7" cy="561.9" r="3.5"/><rect x="151.8" y="554.8" width="1" height="4.2"/><circle cx="151.9" cy="552.4" r="3.5"/><rect x="152.8" y="554.2" width="1" height="3.9"/><circle cx="153.2" cy="556.8" r="3.5"/><rect x="153.8" y="553.6" width="1" height="3.6"/><circle cx="154.0" cy="551.5" r="3.5"/><rect x="154.8" y="553.0" width="1" height="3.3"/><circle cx="155.2" cy="558.2" r="3.5"/><rect x="155.8" y="552.6" width="1" height="2.7"/><circle cx="155.8" cy="557.7" r="3.5"/><rect x="156.8" y="552.3" width="1" height="2.1"/><rect x="157.8" y="552.0" width="1" height="1.6"/><circle cx="158.0" cy="549.8" r="3.5"/><rect x="158.8" y="551.7" width="1" height="1.9"/><circle cx="159.1" cy="554.6" r="3.5"/><rect x="159.8" y="551.4" width="1" height="2.3"/><circle cx="159.9" cy="549.6" r="3.5"/><rect x="160.8" y="551.1" width="1" height="2.6"/><circle cx="161.3" cy="549.1" r="3.5"/><rect x="161.8" y="550.8" width="1" height="3.0"/><rect x="162.8" y="551.2" width="1" height="2.7"/><circle cx="163.6" cy="554.4" r="3.5"/><rect x="163.8" y="551.7" width="1" height="2.2"/><circle cx="164.3" cy="549.6" r="3.5"/><rect x="164.8" y="552.2" width="1" height="1.8"/><circle cx="165.4" cy="554.2" r="3.5"/><rect x="165.8" y="552.7" width="1" height="1.3"/><circle cx="166.2" cy="550.3" r="3.5"/><rect x="166.8" y="553.2" width="1" height="0.9"/><circle cx="167.0" cy="552.4" r="3.5"/><rect x="167.8" y="553.5" width="1" height="0.6"/><circle cx="167.9" cy="551.2" r="3.5"/><rect x="168.8" y="552.6" width="1" height="1.5"/><circle cx="169.7" cy="553.7" r="3.5"/><rect x="169.8" y="551.8" width="1" height="2.4"/><circle cx="170.0" cy="553.0" r="3.5"/><rect x="170.8" y="551.0" width="1" height="3.3"/><circle cx="171.1" cy="552.6" r="3.5"/><rect x="171.8" y="550.1" width="1" height="4.2"/><rect x="172.8" y="551.3" width="1" height="3.8"/><circle cx="173.5" cy="549.3" r="3.5"/><rect x="173.8" y="552.6" width="1" height="3.3"/><circle cx="174.6" cy="550.8" r="3.5"/><rect x="174.8" y="553.9" width="1" height="2.8"/><circle cx="175.0" cy="553.2" r="3.5"/><rect x="175.8" y="555.3" width="1" height="2.3"/><circle cx="176.6" cy="558.8" r="3.5"/><rect x="176.8" y="555.4" width="1" height="4.0"/><circle cx="177.6" cy="561.4" r="3.5"/><rect x="177.8" y="554.9" width="1" height="6.7"/><circle cx="178.5" cy="554.2" r="3.5"/><rect x="178.8" y="554.4" width="1" height="9.5"/><circle cx="178.8" cy="557.4" r="3.5"/><circle cx="179.6" cy="552.5" r="3.5"/><rect x="179.8" y="553.9" width="1" height="9.5"/><circle cx="180.6" cy="556.0" r="3.5"/><rect x="180.8" y="553.4" width="1" height="9.0"/><circle cx="181.4" cy="559.1" r="3.5"/><rect x="181.8" y="552.9" width="1" height="8.4"/><circle cx="181.9" cy="563.0" r="3.5"/><rect x="182.8" y="553.0" width="1" height="7.3"/><circle cx="183.4" cy="557.4" r="3.5"/><rect x="183.8" y="553.1" width="1" height="7.0"/><circle cx="184.3" cy="551.2" r="3.5"/><rect x="184.8" y="553.2" width="1" height="7.0"/><circle cx="185.5" cy="559.9" r="3.5"/><rect x="185.8" y="553.3" width="1" height="7.1"/><circle cx="186.3" cy="553.8" r="3.5"/><rect x="186.8" y="553.4" width="1" height="7.2"/><circle cx="187.5" cy="554.4" r="3.5"/><rect x="187.8" y="553.5" width="1" height="7.2"/><circle cx="188.0" cy="556.9" r="3.5"/><rect x="188.8" y="553.6" width="1" height="7.3"/><circle cx="189.6" cy="551.6" r="3.5"/><rect x="189.8" y="553.7" width="1" height="7.4"/><circle cx="190.0" cy="556.5" r="3.5"/><rect x="190.8" y="553.8" width="1" height="7.4"/><circle cx="191.1" cy="551.5" r="3.5"/><rect x="191.8" y="553.9" width="1" height="7.3"/><circle cx="192.7" cy="556.8" r="3.5"/><rect x="192.8" y="554.0" width="1" height="6.0"/><circle cx="193.1" cy="554.9" r="3.5"/><rect x="193.8" y="554.1" width="1" height="4.8"/><circle cx="194.0" cy="558.6" r="3.5"/><rect x="194.8" y="554.2" width="1" height="3.5"/><circle cx="194.8" cy="553.4" r="3.5"/><rect x="195.8" y="554.3" width="1" height="2.2"/><circle cx="196.7" cy="554.2" r="3.5"/><rect x="196.8" y="553.7" width="1" height="2.5"/><circle cx="197.0" cy="558.4" r="3.5"/><rect x="197.8" y="553.0" width="1" height="2.9"/><rect x="198.8" y="552.3" width="1" height="3.2"/><circle cx="199.7" cy="552.5" r="3.5"/><rect x="199.8" y="551.6" width="1" height="3.6"/><circle cx="200.1" cy="550.7" r="3.5"/><rect x="200.8" y="550.9" width="1" height="4.0"/><circle cx="201.2" cy="556.5" r="3.5"/><rect x="201.8" y="550.2" width="1" height="4.4"/><circle cx="202.5" cy="548.1" r="3.5"/><rect x="202.8" y="549.5" width="1" height="4.8"/><circle cx="202.8" cy="547.0" r="3.5"/><rect x="203.8" y="549.1" width="1" height="4.8"/><circle cx="204.0" cy="546.9" r="3.5"/><rect x="204.8" y="548.9" width="1" height="4.7"/><circle cx="205.3" cy="546.4" r="3.5"/><rect x="205.8" y="548.6" width="1" height="4.7"/><circle cx="205.9" cy="546.6" r="3.5"/><rect x="206.8" y="548.4" width="1" height="4.6"/><rect x="207.8" y="548.1" width="1" height="5.2"/><circle cx="208.3" cy="546.4" r="3.5"/><rect x="208.8" y="548.0" width="1" height="6.0"/><circle cx="209.5" cy="548.8" r="3.5"/><rect x="209.8" y="548.2" width="1" height="6.4"/><circle cx="210.2" cy="545.8" r="3.5"/><rect x="210.8" y="548.4" width="1" height="6.9"/><circle cx="211.2" cy="548.0" r="3.5"/><rect x="211.8" y="548.6" width="1" height="7.4"/><circle cx="212.7" cy="548.1" r="3.5"/><rect x="212.8" y="548.8" width="1" height="7.8"/><circle cx="213.6" cy="555.9" r="3.5"/><rect x="213.8" y="549.0" width="1" height="8.3"/><circle cx="213.8" cy="558.1" r="3.5"/><rect x="214.8" y="549.2" width="1" height="8.8"/><circle cx="215.3" cy="559.6" r="3.5"/><rect x="215.8" y="549.5" width="1" height="9.1"/><circle cx="216.3" cy="549.4" r="3.5"/><rect x="216.8" y="550.5" width="1" height="8.8"/><circle cx="217.4" cy="560.7" r="3.5"/><rect x="217.8" y="551.5" width="1" height="8.5"/><circle cx="218.4" cy="552.7" r="3.5"/><rect x="218.8" y="552.5" width="1" height="8.1"/><circle cx="219.7" cy="561.1" r="3.5"/><rect x="219.8" y="553.5" width="1" height="7.8"/><circle cx="219.9" cy="552.8" r="3.5"/><rect x="220.8" y="553.2" width="1" height="8.6"/><circle cx="221.0" cy="551.0" r="3.5"/><circle cx="221.0" cy="550.8" r="3.5"/><rect x="221.8" y="552.8" width="1" height="9.5"/><circle cx="222.6" cy="550.6" r="3.5"/><rect x="222.8" y="552.4" width="1" height="10.4"/><circle cx="223.4" cy="565.2" r="3.5"/><rect x="223.8" y="552.0" width="1" height="11.4"/><circle cx="224.0" cy="549.8" r="3.5"/><rect x="224.8" y="551.5" width="1" height="12.3"/><circle cx="224.9" cy="551.4" r="3.5"/><rect x="225.8" y="551.1" width="1" height="13.2"/><circle cx="225.9" cy="554.3" r="3.5"/><rect x="226.8" y="550.7" width="1" height="14.1"/><circle cx="227.4" cy="548.9" r="3.5"/><circle cx="227.2" cy="567.0" r="3.5"/><rect x="227.8" y="550.3" width="1" height="14.3"/><circle cx="227.9" cy="563.7" r="3.5"/><rect x="228.8" y="549.9" width="1" height="14.4"/><circle cx="229.7" cy="548.0" r="3.5"/><rect x="229.8" y="549.5" width="1" height="14.5"/><circle cx="229.9" cy="552.2" r="3.5"/><rect x="230.8" y="549.1" width="1" height="14.6"/><circle cx="231.3" cy="564.9" r="3.5"/><rect x="231.8" y="548.8" width="1" height="14.7"/><circle cx="232.1" cy="550.3" r="3.5"/><rect x="232.8" y="548.4" width="1" height="14.7"/><circle cx="232.8" cy="546.1" r="3.5"/><circle cx="233.1" cy="559.7" r="3.5"/><rect x="233.8" y="548.0" width="1" height="14.8"/><circle cx="234.3" cy="564.4" r="3.5"/><rect x="234.8" y="547.5" width="1" height="13.2"/><circle cx="235.4" cy="563.2" r="3.5"/><circle cx="235.6" cy="562.1" r="3.5"/><rect x="235.8" y="547.0" width="1" height="11.2"/><circle cx="236.5" cy="546.4" r="3.5"/><rect x="236.8" y="546.5" width="1" height="9.2"/><circle cx="237.3" cy="557.2" r="3.5"/><rect x="237.8" y="546.0" width="1" height="9.5"/><circle cx="238.6" cy="554.5" r="3.5"/><circle cx="237.9" cy="557.6" r="3.5"/><rect x="238.8" y="545.5" width="1" height="9.8"/><circle cx="239.4" cy="544.8" r="3.5"/><rect x="239.8" y="545.1" width="1" height="10.1"/><circle cx="240.0" cy="551.2" r="3.5"/><circle cx="240.1" cy="543.1" r="3.5"/><rect x="240.8" y="545.0" width="1" height="10.1"/><circle cx="241.5" cy="543.9" r="3.5"/><rect x="241.8" y="544.8" width="1" height="10.0"/><circle cx="242.2" cy="556.4" r="3.5"/><circle cx="242.0" cy="552.5" r="3.5"/><rect x="242.8" y="544.7" width="1" height="10.0"/><circle cx="242.9" cy="548.4" r="3.5"/><circle cx="243.2" cy="545.5" r="3.5"/><rect x="243.8" y="544.6" width="1" height="9.9"/><circle cx="244.0" cy="544.8" r="3.5"/><circle cx="244.2" cy="549.2" r="3.5"/><rect x="244.8" y="544.5" width="1" height="9.9"/><circle cx="245.7" cy="543.6" r="3.5"/><rect x="245.8" y="544.5" width="1" height="9.7"/><circle cx="246.6" cy="543.5" r="3.5"/><rect x="246.8" y="544.7" width="1" height="9.4"/><circle cx="247.7" cy="551.2" r="3.5"/><rect x="247.8" y="544.8" width="1" height="9.0"/><circle cx="248.5" cy="543.7" r="3.5"/><circle cx="248.5" cy="544.5" r="3.5"/><rect x="248.8" y="545.0" width="1" height="8.7"/><circle cx="248.8" cy="554.0" r="3.5"/><circle cx="248.9" cy="554.7" r="3.5"/><rect x="249.8" y="546.5" width="1" height="10.6"/><circle cx="249.9" cy="559.4" r="3.5"/><circle cx="250.5" cy="557.9" r="3.5"/><rect x="250.8" y="546.4" width="1" height="10.6"/><circle cx="251.0" cy="558.4" r="3.5"/><rect x="251.8" y="546.3" width="1" height="10.7"/><circle cx="252.5" cy="553.5" r="3.5"/><rect x="252.8" y="546.2" width="1" height="10.7"/><circle cx="253.5" cy="552.9" r="3.5"/><rect x="253.8" y="546.1" width="1" height="10.7"/><circle cx="254.6" cy="556.6" r="3.5"/><circle cx="254.8" cy="544.0" r="3.5"/><rect x="254.8" y="546.0" width="1" height="10.8"/><circle cx="255.7" cy="545.4" r="3.5"/><rect x="255.8" y="545.9" width="1" height="10.8"/><circle cx="256.2" cy="544.3" r="3.5"/><rect x="256.8" y="545.7" width="1" height="11.0"/><circle cx="257.5" cy="548.0" r="3.5"/><circle cx="257.4" cy="546.4" r="3.5"/><rect x="257.8" y="544.9" width="1" height="11.7"/><circle cx="258.1" cy="542.8" r="3.5"/><rect x="258.8" y="544.2" width="1" height="12.4"/><circle cx="259.1" cy="557.6" r="3.5"/><rect x="259.8" y="545.0" width="1" height="11.4"/><circle cx="259.8" cy="557.1" r="3.5"/><rect x="260.8" y="548.5" width="1" height="7.9"/><circle cx="261.7" cy="558.1" r="3.5"/><rect x="261.8" y="548.9" width="1" height="7.6"/><circle cx="262.2" cy="552.2" r="3.5"/><circle cx="262.1" cy="547.7" r="3.5"/><rect x="262.8" y="549.1" width="1" height="7.5"/><circle cx="263.1" cy="552.6" r="3.5"/><rect x="263.8" y="549.3" width="1" height="7.4"/><circle cx="264.4" cy="553.7" r="3.5"/><rect x="264.8" y="549.5" width="1" height="7.2"/><circle cx="264.9" cy="550.2" r="3.5"/><rect x="265.8" y="549.7" width="1" height="7.1"/><circle cx="266.4" cy="554.6" r="3.5"/><rect x="266.8" y="549.9" width="1" height="7.0"/><circle cx="267.2" cy="548.6" r="3.5"/><rect x="267.8" y="550.1" width="1" height="6.9"/><circle cx="268.1" cy="552.9" r="3.5"/><circle cx="267.8" cy="554.6" r="3.5"/><rect x="268.8" y="550.4" width="1" height="6.7"/><circle cx="269.1" cy="558.2" r="3.5"/><rect x="269.8" y="550.6" width="1" height="7.5"/><circle cx="270.3" cy="548.8" r="3.5"/><rect x="270.8" y="550.8" width="1" height="9.4"/><circle cx="271.1" cy="549.9" r="3.5"/><rect x="271.8" y="550.6" width="1" height="11.5"/><circle cx="272.3" cy="557.4" r="3.5"/><rect x="272.8" y="550.4" width="1" height="13.7"/><circle cx="273.4" cy="548.2" r="3.5"/><rect x="273.8" y="550.2" width="1" height="15.3"/><circle cx="274.0" cy="553.4" r="3.5"/><rect x="274.8" y="550.1" width="1" height="15.3"/><circle cx="275.1" cy="553.3" r="3.5"/><circle cx="274.9" cy="553.2" r="3.5"/><rect x="275.8" y="549.9" width="1" height="15.2"/><circle cx="276.5" cy="566.5" r="3.5"/><rect x="276.8" y="549.8" width="1" height="15.2"/><circle cx="277.0" cy="555.6" r="3.5"/><circle cx="277.8" cy="567.1" r="3.5"/><rect x="277.8" y="549.6" width="1" height="15.2"/><circle cx="278.4" cy="552.3" r="3.5"/><rect x="278.8" y="549.4" width="1" height="15.2"/><circle cx="279.6" cy="567.1" r="3.5"/><circle cx="279.5" cy="565.1" r="3.5"/><rect x="279.8" y="549.8" width="1" height="14.6"/><circle cx="279.9" cy="548.9" r="3.5"/><rect x="280.8" y="550.6" width="1" height="13.6"/><circle cx="281.7" cy="558.0" r="3.5"/><rect x="281.8" y="551.4" width="1" height="12.6"/><circle cx="282.0" cy="555.8" r="3.5"/><rect x="282.8" y="552.2" width="1" height="11.6"/><circle cx="283.1" cy="559.1" r="3.5"/><rect x="283.8" y="553.0" width="1" height="10.6"/><circle cx="284.2" cy="556.8" r="3.5"/><rect x="284.8" y="553.8" width="1" height="9.6"/><circle cx="285.0" cy="552.3" r="3.5"/><circle cx="285.7" cy="562.2" r="3.5"/><rect x="285.8" y="554.6" width="1" height="9.2"/><circle cx="286.4" cy="565.4" r="3.5"/><rect x="286.8" y="555.0" width="1" height="9.2"/><circle cx="286.9" cy="553.4" r="3.5"/><rect x="287.8" y="555.0" width="1" height="9.6"/><circle cx="288.7" cy="552.7" r="3.5"/><rect x="288.8" y="555.0" width="1" height="10.0"/><circle cx="289.7" cy="552.6" r="3.5"/><rect x="289.8" y="555.0" width="1" height="10.3"/><circle cx="290.4" cy="559.7" r="3.5"/><circle cx="289.8" cy="554.2" r="3.5"/><rect x="290.8" y="554.2" width="1" height="10.6"/><circle cx="291.3" cy="562.8" r="3.5"/><circle cx="291.7" cy="553.5" r="3.5"/><rect x="291.8" y="551.7" width="1" height="10.6"/><circle cx="292.3" cy="564.4" r="3.5"/><circle cx="291.9" cy="563.4" r="3.5"/><rect x="292.8" y="549.2" width="1" height="10.6"/><circle cx="293.4" cy="562.0" r="3.5"/><circle cx="293.0" cy="551.9" r="3.5"/><rect x="293.8" y="547.8" width="1" height="10.6"/><circle cx="294.1" cy="546.3" r="3.5"/><circle cx="294.4" cy="556.4" r="3.5"/><rect x="294.8" y="547.6" width="1" height="10.7"/><circle cx="295.2" cy="559.9" r="3.5"/><rect x="295.8" y="547.4" width="1" height="10.8"/><circle cx="296.0" cy="545.1" r="3.5"/><rect x="296.8" y="547.2" width="1" height="10.9"/><circle cx="297.0" cy="559.7" r="3.5"/><rect x="297.8" y="547.0" width="1" height="11.0"/><circle cx="297.8" cy="556.2" r="3.5"/><rect x="298.8" y="546.8" width="1" height="11.1"/><circle cx="298.8" cy="545.2" r="3.5"/><rect x="299.8" y="546.6" width="1" height="11.2"/><circle cx="300.2" cy="550.8" r="3.5"/><rect x="300.8" y="546.2" width="1" height="11.5"/><circle cx="301.0" cy="556.6" r="3.5"/><rect x="301.8" y="545.4" width="1" height="12.1"/><circle cx="302.4" cy="551.4" r="3.5"/><circle cx="302.0" cy="544.2" r="3.5"/><rect x="302.8" y="544.7" width="1" height="12.8"/><circle cx="303.6" cy="542.7" r="3.5"/><rect x="303.8" y="546.0" width="1" height="11.4"/><circle cx="304.1" cy="551.5" r="3.5"/><rect x="304.8" y="548.5" width="1" height="8.8"/><circle cx="305.4" cy="559.1" r="3.5"/><circle cx="305.1" cy="546.9" r="3.5"/><rect x="305.8" y="551.0" width="1" height="6.2"/><circle cx="305.9" cy="549.4" r="3.5"/><rect x="306.8" y="551.5" width="1" height="5.8"/><circle cx="307.5" cy="558.5" r="3.5"/><rect x="307.8" y="551.6" width="1" height="6.0"/><circle cx="308.0" cy="558.8" r="3.5"/><rect x="308.8" y="551.7" width="1" height="6.3"/><circle cx="309.0" cy="558.5" r="3.5"/><rect x="309.8" y="551.8" width="1" height="6.5"/><circle cx="310.1" cy="560.2" r="3.5"/><rect x="310.8" y="551.9" width="1" height="6.7"/><circle cx="311.7" cy="559.0" r="3.5"/><rect x="311.8" y="552.0" width="1" height="6.9"/><circle cx="312.6" cy="557.3" r="3.5"/><rect x="312.8" y="552.0" width="1" height="7.1"/><circle cx="313.5" cy="550.6" r="3.5"/><rect x="313.8" y="552.1" width="1" height="7.2"/><circle cx="313.8" cy="550.9" r="3.5"/><rect x="314.8" y="552.3" width="1" height="7.3"/><circle cx="315.4" cy="560.9" r="3.5"/><rect x="315.8" y="552.5" width="1" height="7.2"/><circle cx="315.9" cy="559.8" r="3.5"/><rect x="316.8" y="552.8" width="1" height="7.1"/><circle cx="316.9" cy="561.0" r="3.5"/><rect x="317.8" y="553.0" width="1" height="7.0"/><circle cx="318.1" cy="560.7" r="3.5"/><rect x="318.8" y="553.3" width="1" height="6.9"/><circle cx="318.8" cy="557.1" r="3.5"/><rect x="319.8" y="553.5" width="1" height="6.9"/><circle cx="320.1" cy="552.2" r="3.5"/><rect x="320.8" y="553.8" width="1" height="6.8"/><circle cx="321.3" cy="555.7" r="3.5"/><circle cx="321.6" cy="551.7" r="3.5"/><rect x="321.8" y="554.0" width="1" height="7.0"/><circle cx="322.6" cy="560.5" r="3.5"/><rect x="322.8" y="554.3" width="1" height="8.0"/><circle cx="323.6" cy="552.2" r="3.5"/><circle cx="323.7" cy="564.4" r="3.5"/><rect x="323.8" y="554.7" width="1" height="8.8"/><circle cx="324.2" cy="554.7" r="3.5"/><circle cx="324.2" cy="554.2" r="3.5"/><rect x="324.8" y="555.1" width="1" height="9.1"/><circle cx="325.0" cy="553.6" r="3.5"/><rect x="325.8" y="555.5" width="1" height="8.9"/><circle cx="326.1" cy="566.5" r="3.5"/><rect x="326.8" y="556.0" width="1" height="8.6"/><circle cx="327.6" cy="566.0" r="3.5"/><rect x="327.8" y="556.4" width="1" height="8.3"/><circle cx="327.8" cy="554.6" r="3.5"/><rect x="328.8" y="556.9" width="1" height="8.1"/><circle cx="328.8" cy="555.5" r="3.5"/><rect x="329.8" y="557.3" width="1" height="7.8"/><circle cx="330.2" cy="563.3" r="3.5"/><rect x="330.8" y="557.7" width="1" height="7.5"/><circle cx="331.5" cy="567.4" r="3.5"/><rect x="331.8" y="558.2" width="1" height="7.2"/><circle cx="332.1" cy="566.9" r="3.5"/><rect x="332.8" y="558.6" width="1" height="7.0"/><circle cx="333.0" cy="561.3" r="3.5"/><rect x="333.8" y="559.0" width="1" height="5.8"/><circle cx="334.2" cy="557.3" r="3.5"/><rect x="334.8" y="559.1" width="1" height="4.9"/><circle cx="335.3" cy="556.9" r="3.5"/><rect x="335.8" y="558.8" width="1" height="4.4"/><circle cx="336.6" cy="556.3" r="3.5"/><rect x="336.8" y="558.5" width="1" height="3.9"/><rect x="337.8" y="558.2" width="1" height="3.4"/><circle cx="338.5" cy="561.1" r="3.5"/><rect x="338.8" y="557.9" width="1" height="2.9"/><circle cx="339.2" cy="562.5" r="3.5"/><rect x="339.8" y="557.6" width="1" height="2.4"/><circle cx="340.7" cy="561.9" r="3.5"/><rect x="340.8" y="557.3" width="1" height="2.5"/><circle cx="341.2" cy="555.6" r="3.5"/><rect x="341.8" y="556.9" width="1" height="2.7"/><rect x="342.8" y="556.6" width="1" height="2.9"/><circle cx="343.1" cy="560.8" r="3.5"/><rect x="343.8" y="556.2" width="1" height="3.1"/><circle cx="344.2" cy="555.4" r="3.5"/><rect x="344.8" y="555.9" width="1" height="3.3"/><circle cx="345.5" cy="555.0" r="3.5"/><rect x="345.8" y="555.5" width="1" height="3.4"/><circle cx="346.4" cy="560.9" r="3.5"/><rect x="346.8" y="555.2" width="1" height="3.6"/><circle cx="347.5" cy="560.9" r="3.5"/><rect x="347.8" y="554.8" width="1" height="3.8"/><rect x="348.8" y="554.4" width="1" height="4.0"/><circle cx="349.0" cy="557.1" r="3.5"/><rect x="349.8" y="554.1" width="1" height="4.1"/><circle cx="350.1" cy="556.2" r="3.5"/><rect x="350.8" y="553.7" width="1" height="4.2"/><circle cx="350.8" cy="560.4" r="3.5"/><rect x="351.8" y="553.5" width="1" height="4.2"/><circle cx="352.6" cy="555.7" r="3.5"/><rect x="352.8" y="553.4" width="1" height="4.0"/><circle cx="353.2" cy="559.4" r="3.5"/><rect x="353.8" y="553.3" width="1" height="3.9"/><circle cx="354.1" cy="550.8" r="3.5"/><rect x="354.8" y="553.1" width="1" height="3.8"/><rect x="355.8" y="553.0" width="1" height="3.7"/><circle cx="355.9" cy="551.1" r="3.5"/><rect x="356.8" y="552.9" width="1" height="3.5"/><circle cx="357.2" cy="553.2" r="3.5"/><rect x="357.8" y="552.8" width="1" height="3.8"/><circle cx="358.0" cy="553.5" r="3.5"/><rect x="358.8" y="552.6" width="1" height="4.1"/><circle cx="359.7" cy="551.6" r="3.5"/><rect x="359.8" y="552.5" width="1" height="4.4"/><circle cx="360.0" cy="550.8" r="3.5"/><rect x="360.8" y="552.4" width="1" height="4.7"/><rect x="361.8" y="552.3" width="1" height="5.0"/><circle cx="361.9" cy="555.1" r="3.5"/><rect x="362.8" y="552.2" width="1" height="5.2"/><circle cx="362.8" cy="552.1" r="3.5"/><rect x="363.8" y="552.4" width="1" height="5.1"/><circle cx="364.5" cy="558.7" r="3.5"/><rect x="364.8" y="552.6" width="1" height="5.1"/><circle cx="365.1" cy="552.5" r="3.5"/><rect x="365.8" y="552.8" width="1" height="5.1"/><circle cx="366.3" cy="553.9" r="3.5"/><rect x="366.8" y="553.0" width="1" height="5.0"/><circle cx="367.8" cy="560.4" r="3.5"/><rect x="367.8" y="553.2" width="1" height="5.0"/><circle cx="368.3" cy="560.0" r="3.5"/><rect x="368.8" y="553.4" width="1" height="5.0"/><circle cx="369.0" cy="557.4" r="3.5"/><rect x="369.8" y="555.8" width="1" height="3.4"/><rect x="370.8" y="556.0" width="1" height="2.8"/><circle cx="371.4" cy="561.0" r="3.5"/><rect x="371.8" y="556.3" width="1" height="2.2"/><circle cx="372.5" cy="558.4" r="3.5"/><rect x="372.8" y="556.5" width="1" height="1.6"/><circle cx="373.4" cy="555.4" r="3.5"/><rect x="373.8" y="556.8" width="1" height="1.0"/><circle cx="374.7" cy="559.7" r="3.5"/><rect x="374.8" y="557.0" width="1" height="0.5"/><circle cx="375.1" cy="555.3" r="3.5"/><circle cx="376.1" cy="557.6" r="3.5"/><circle cx="378.7" cy="557.7" r="3.5"/><circle cx="380.0" cy="554.7" r="3.5"/><rect x="380.8" y="556.2" width="1" height="0.7"/><circle cx="381.0" cy="558.1" r="3.5"/><rect x="381.8" y="555.6" width="1" height="1.4"/><circle cx="382.0" cy="557.8" r="3.5"/><rect x="382.8" y="555.0" width="1" height="2.2"/><circle cx="382.9" cy="559.4" r="3.5"/><rect x="383.8" y="554.4" width="1" height="2.9"/><circle cx="384.2" cy="553.9" r="3.5"/><rect x="384.8" y="553.9" width="1" height="3.7"/><circle cx="385.5" cy="555.9" r="3.5"/><rect x="385.8" y="553.3" width="1" height="4.4"/><circle cx="386.3" cy="559.4" r="3.5"/><rect x="386.8" y="553.1" width="1" height="4.8"/><circle cx="387.0" cy="551.7" r="3.5"/><rect x="387.8" y="553.9" width="1" height="4.2"/><circle cx="388.1" cy="559.6" r="3.5"/><rect x="388.8" y="554.6" width="1" height="3.6"/><circle cx="389.0" cy="560.1" r="3.5"/><rect x="389.8" y="555.4" width="1" height="3.0"/><circle cx="390.7" cy="553.0" r="3.5"/><rect x="390.8" y="556.1" width="1" height="2.4"/><circle cx="391.2" cy="560.4" r="3.5"/><rect x="391.8" y="556.9" width="1" height="1.7"/><rect x="392.8" y="557.1" width="1" height="1.5"/><circle cx="393.1" cy="557.2" r="3.5"/><rect x="393.8" y="557.1" width="1" height="1.6"/><rect x="394.8" y="557.1" width="1" height="1.6"/><rect x="395.8" y="557.1" width="1" height="1.7"/><circle cx="395.9" cy="558.3" r="3.5"/><rect x="396.8" y="557.1" width="1" height="1.8"/><rect x="397.8" y="557.1" width="1" height="1.8"/><circle cx="397.9" cy="559.7" r="3.5"/><rect x="398.8" y="557.1" width="1" height="1.9"/><rect x="399.8" y="557.1" width="1" height="1.9"/><circle cx="400.1" cy="560.0" r="3.5"/><rect x="400.8" y="557.1" width="1" height="2.0"/><circle cx="400.8" cy="557.5" r="3.5"/><rect x="401.8" y="557.1" width="1" height="2.0"/><rect x="402.8" y="557.1" width="1" height="2.1"/><circle cx="403.6" cy="560.3" r="3.5"/><rect x="403.8" y="557.1" width="1" height="2.2"/><circle cx="404.4" cy="561.0" r="3.5"/><rect x="404.8" y="557.1" width="1" height="2.3"/><circle cx="405.7" cy="561.7" r="3.5"/><rect x="405.8" y="557.0" width="1" height="2.6"/><circle cx="406.4" cy="559.8" r="3.5"/><rect x="406.8" y="556.8" width="1" height="2.9"/><circle cx="407.4" cy="561.6" r="3.5"/><rect x="407.8" y="556.7" width="1" height="3.1"/><circle cx="408.0" cy="555.1" r="3.5"/><rect x="408.8" y="556.6" width="1" height="3.4"/><circle cx="409.0" cy="555.8" r="3.5"/><rect x="409.8" y="556.4" width="1" height="3.7"/><circle cx="410.0" cy="559.4" r="3.5"/><rect x="410.8" y="556.3" width="1" height="4.0"/><circle cx="411.2" cy="557.0" r="3.5"/><rect x="411.8" y="556.1" width="1" height="4.3"/><circle cx="412.3" cy="558.3" r="3.5"/><rect x="412.8" y="556.0" width="1" height="4.5"/><circle cx="413.2" cy="561.6" r="3.5"/><rect x="413.8" y="555.8" width="1" height="4.8"/><circle cx="414.3" cy="554.3" r="3.5"/><rect x="414.8" y="555.7" width="1" height="5.0"/><circle cx="415.3" cy="563.2" r="3.5"/><rect x="415.8" y="556.2" width="1" height="4.8"/><circle cx="416.8" cy="558.7" r="3.5"/><rect x="416.8" y="556.6" width="1" height="4.5"/><circle cx="416.9" cy="562.6" r="3.5"/><rect x="417.8" y="557.0" width="1" height="4.2"/><circle cx="418.4" cy="558.9" r="3.5"/><rect x="418.8" y="557.4" width="1" height="3.9"/><circle cx="419.5" cy="556.8" r="3.5"/><rect x="419.8" y="557.8" width="1" height="4.4"/><circle cx="420.2" cy="556.7" r="3.5"/><rect x="420.8" y="558.2" width="1" height="5.0"/><circle cx="421.0" cy="556.2" r="3.5"/><rect x="421.8" y="558.7" width="1" height="5.5"/><circle cx="422.2" cy="565.7" r="3.5"/><rect x="422.8" y="559.1" width="1" height="6.1"/><circle cx="423.7" cy="557.3" r="3.5"/><rect x="423.8" y="559.1" width="1" height="6.2"/><circle cx="424.3" cy="563.9" r="3.5"/><rect x="424.8" y="558.8" width="1" height="5.9"/><circle cx="425.0" cy="566.4" r="3.5"/><rect x="425.8" y="558.5" width="1" height="5.6"/><circle cx="426.2" cy="556.3" r="3.5"/><rect x="426.8" y="558.2" width="1" height="5.3"/><circle cx="426.9" cy="556.9" r="3.5"/><rect x="427.8" y="557.9" width="1" height="5.0"/><circle cx="427.9" cy="555.8" r="3.5"/><rect x="428.8" y="557.6" width="1" height="4.7"/><circle cx="429.4" cy="562.0" r="3.5"/><rect x="429.8" y="557.3" width="1" height="4.5"/><circle cx="430.2" cy="563.7" r="3.5"/><rect x="430.8" y="557.1" width="1" height="4.2"/><circle cx="431.6" cy="556.3" r="3.5"/><rect x="431.8" y="556.8" width="1" height="3.9"/><circle cx="432.5" cy="557.4" r="3.5"/><rect x="432.8" y="556.5" width="1" height="3.6"/><circle cx="433.2" cy="561.9" r="3.5"/><rect x="433.8" y="556.7" width="1" height="3.4"/><circle cx="434.3" cy="560.3" r="3.5"/><rect x="434.8" y="557.1" width="1" height="3.3"/><circle cx="434.9" cy="562.4" r="3.5"/><rect x="435.8" y="557.5" width="1" height="3.1"/><circle cx="436.3" cy="555.1" r="3.5"/><rect x="436.8" y="557.9" width="1" height="3.0"/><circle cx="437.2" cy="563.4" r="3.5"/><rect x="437.8" y="558.3" width="1" height="2.8"/><circle cx="438.7" cy="563.5" r="3.5"/><rect x="438.8" y="558.7" width="1" height="2.6"/><circle cx="438.8" cy="556.7" r="3.5"/><rect x="439.8" y="559.1" width="1" height="1.6"/><circle cx="439.9" cy="563.1" r="3.5"/><rect x="440.8" y="559.3" width="1" height="0.8"/><circle cx="441.0" cy="562.5" r="3.5"/><rect x="441.8" y="559.4" width="1" height="0.1"/><circle cx="441.9" cy="558.3" r="3.5"/><circle cx="442.9" cy="558.9" r="3.5"/><circle cx="444.2" cy="560.5" r="3.5"/><circle cx="445.7" cy="558.3" r="3.5"/><circle cx="446.1" cy="557.5" r="3.5"/><circle cx="447.1" cy="557.7" r="3.5"/><circle cx="448.8" cy="560.5" r="3.5"/><circle cx="451.1" cy="561.4" r="3.5"/><rect x="451.8" y="558.7" width="1" height="0.3"/><circle cx="452.5" cy="556.5" r="3.5"/><rect x="452.8" y="558.4" width="1" height="0.0"/><circle cx="141.3" cy="560.3" r="3.5"/><circle cx="142.7" cy="556.7" r="3.5"/><circle cx="148.4" cy="554.6" r="3.5"/><circle cx="155.4" cy="550.4" r="3.5"/><circle cx="162.5" cy="548.3" r="3.5"/><circle cx="168.1" cy="551.1" r="3.5"/><circle cx="172.4" cy="547.6" r="3.5"/><circle cx="176.6" cy="553.2" r="3.5"/><circle cx="182.2" cy="550.4" r="3.5"/><circle cx="189.3" cy="551.1" r="3.5"/><circle cx="196.4" cy="551.8" r="3.5"/><circle cx="203.4" cy="546.9" r="3.5"/><circle cx="209.1" cy="545.4" r="3.5"/><circle cx="216.1" cy="546.9" r="3.5"/><circle cx="220.4" cy="551.1" r="3.5"/><circle cx="228.8" cy="547.6" r="3.5"/><circle cx="234.5" cy="545.4" r="3.5"/><circle cx="240.1" cy="542.6" r="3.5"/><circle cx="245.8" cy="541.9" r="3.5"/><circle cx="250.0" cy="542.6" r="3.5"/><circle cx="250.0" cy="544.0" r="3.5"/><circle cx="257.1" cy="543.3" r="3.5"/><circle cx="259.9" cy="541.2" r="3.5"/><circle cx="261.3" cy="546.1" r="3.5"/><circle cx="271.2" cy="548.3" r="3.5"/><circle cx="279.6" cy="546.9" r="3.5"/><circle cx="286.7" cy="552.5" r="3.5"/><circle cx="290.9" cy="552.5" r="3.5"/><circle cx="293.8" cy="545.4" r="3.5"/><circle cx="300.8" cy="544.0" r="3.5"/><circle cx="303.6" cy="541.9" r="3.5"/><circle cx="306.5" cy="549.0" r="3.5"/><circle cx="314.9" cy="549.7" r="3.5"/><circle cx="323.4" cy="551.8" r="3.5"/><circle cx="334.7" cy="556.7" r="3.5"/><circle cx="341.8" cy="554.6" r="3.5"/><circle cx="351.6" cy="551.1" r="3.5"/><circle cx="362.9" cy="549.7" r="3.5"/><circle cx="370.0" cy="551.1" r="3.5"/><circle cx="370.0" cy="553.2" r="3.5"/><circle cx="378.5" cy="555.3" r="3.5"/><circle cx="386.9" cy="550.4" r="3.5"/><circle cx="392.6" cy="554.6" r="3.5"/><circle cx="405.3" cy="554.6" r="3.5"/><circle cx="415.2" cy="553.2" r="3.5"/><circle cx="423.6" cy="556.7" r="3.5"/><circle cx="433.5" cy="553.9" r="3.5"/><circle cx="440.6" cy="556.7" r="3.5"/><circle cx="449.1" cy="557.4" r="3.5"/><circle cx="454.0" cy="555.3" r="3.5"/><circle cx="454.0" cy="556.7" r="3.5"/><circle cx="141.3" cy="555.4" r="3.5"/><circle cx="142.7" cy="559.6" r="3.5"/><circle cx="142.7" cy="563.9" r="3.5"/><circle cx="151.2" cy="562.4" r="3.5"/><circle cx="158.2" cy="556.1" r="3.5"/><circle cx="172.4" cy="556.8" r="3.5"/><circle cx="176.6" cy="560.3" r="3.5"/><circle cx="179.4" cy="566.7" r="3.5"/><circle cx="183.6" cy="562.4" r="3.5"/><circle cx="192.1" cy="563.9" r="3.5"/><circle cx="196.4" cy="558.9" r="3.5"/><circle cx="207.6" cy="555.4" r="3.5"/><circle cx="211.9" cy="558.2" r="3.5"/><circle cx="220.4" cy="563.9" r="3.5"/><circle cx="227.4" cy="567.4" r="3.5"/><circle cx="234.5" cy="565.3" r="3.5"/><circle cx="237.3" cy="558.2" r="3.5"/><circle cx="250.0" cy="556.1" r="3.5"/><circle cx="250.0" cy="559.6" r="3.5"/><circle cx="261.3" cy="558.9" r="3.5"/><circle cx="269.8" cy="559.6" r="3.5"/><circle cx="274.0" cy="568.1" r="3.5"/><circle cx="285.3" cy="566.0" r="3.5"/><circle cx="290.9" cy="568.1" r="3.5"/><circle cx="293.8" cy="561.0" r="3.5"/><circle cx="306.5" cy="559.6" r="3.5"/><circle cx="313.5" cy="561.7" r="3.5"/><circle cx="322.0" cy="563.1" r="3.5"/><circle cx="324.8" cy="566.7" r="3.5"/><circle cx="333.3" cy="568.1" r="3.5"/><circle cx="340.4" cy="562.4" r="3.5"/><circle cx="348.8" cy="561.0" r="3.5"/><circle cx="357.3" cy="558.9" r="3.5"/><circle cx="370.0" cy="561.0" r="3.5"/><circle cx="370.0" cy="561.7" r="3.5"/><circle cx="378.5" cy="558.9" r="3.5"/><circle cx="391.2" cy="561.0" r="3.5"/><circle cx="403.9" cy="561.7" r="3.5"/><circle cx="419.4" cy="563.9" r="3.5"/><circle cx="423.6" cy="568.1" r="3.5"/><circle cx="433.5" cy="562.4" r="3.5"/><circle cx="439.2" cy="563.9" r="3.5"/><circle cx="446.2" cy="559.6" r="3.5"/><circle cx="451.9" cy="561.7" r="3.5"/><circle cx="454.0" cy="558.2" r="3.5"/><circle cx="463.8" cy="554.7" r="3.5"/><rect x="464.6" y="552.9" width="1" height="0.2"/><circle cx="465.1" cy="553.2" r="3.5"/><rect x="465.6" y="553.1" width="1" height="0.7"/><rect x="466.6" y="553.3" width="1" height="1.2"/><circle cx="467.0" cy="557.0" r="3.5"/><rect x="467.6" y="553.5" width="1" height="1.7"/><circle cx="468.4" cy="556.3" r="3.5"/><rect x="468.6" y="553.8" width="1" height="2.0"/><circle cx="469.3" cy="557.9" r="3.5"/><rect x="469.6" y="554.0" width="1" height="1.8"/><circle cx="469.7" cy="552.0" r="3.5"/><rect x="470.6" y="554.2" width="1" height="1.7"/><circle cx="471.0" cy="555.5" r="3.5"/><rect x="471.6" y="554.3" width="1" height="1.6"/><circle cx="472.6" cy="555.9" r="3.5"/><rect x="472.6" y="554.3" width="1" height="1.7"/><circle cx="473.5" cy="553.8" r="3.5"/><rect x="473.6" y="554.3" width="1" height="1.7"/><circle cx="474.2" cy="552.0" r="3.5"/><rect x="474.6" y="554.3" width="1" height="1.8"/><circle cx="475.2" cy="558.3" r="3.5"/><rect x="475.6" y="554.3" width="1" height="1.9"/><circle cx="476.2" cy="552.3" r="3.5"/><rect x="476.6" y="554.3" width="1" height="1.9"/><circle cx="477.2" cy="552.5" r="3.5"/><rect x="477.6" y="554.3" width="1" height="2.0"/><circle cx="478.2" cy="558.0" r="3.5"/><rect x="478.6" y="554.6" width="1" height="1.7"/><circle cx="479.1" cy="553.3" r="3.5"/><rect x="479.6" y="555.3" width="1" height="1.1"/><circle cx="480.4" cy="558.4" r="3.5"/><rect x="480.6" y="556.0" width="1" height="0.3"/><circle cx="481.5" cy="555.3" r="3.5"/><circle cx="483.8" cy="558.0" r="3.5"/><circle cx="485.0" cy="556.5" r="3.5"/><circle cx="486.0" cy="558.4" r="3.5"/><circle cx="487.0" cy="557.7" r="3.5"/><circle cx="488.1" cy="555.3" r="3.5"/><rect x="489.6" y="557.7" width="1" height="0.8"/><circle cx="490.4" cy="557.0" r="3.5"/><rect x="490.6" y="556.7" width="1" height="1.3"/><rect x="491.6" y="555.7" width="1" height="1.8"/><circle cx="492.5" cy="557.9" r="3.5"/><rect x="492.6" y="554.7" width="1" height="2.3"/><circle cx="492.9" cy="556.2" r="3.5"/><rect x="493.6" y="553.7" width="1" height="2.8"/><rect x="494.6" y="552.7" width="1" height="3.3"/><circle cx="494.7" cy="550.4" r="3.5"/><rect x="495.6" y="551.7" width="1" height="3.8"/><rect x="496.6" y="550.9" width="1" height="4.1"/><circle cx="497.6" cy="549.4" r="3.5"/><rect x="497.6" y="551.9" width="1" height="2.6"/><circle cx="498.3" cy="550.4" r="3.5"/><rect x="498.6" y="552.9" width="1" height="1.5"/><rect x="499.6" y="553.9" width="1" height="0.6"/><circle cx="500.0" cy="551.4" r="3.5"/><circle cx="502.4" cy="556.4" r="3.5"/><circle cx="502.7" cy="557.0" r="3.5"/><circle cx="505.4" cy="554.7" r="3.5"/><circle cx="507.6" cy="557.0" r="3.5"/><circle cx="508.1" cy="557.1" r="3.5"/><circle cx="510.5" cy="554.7" r="3.5"/><rect x="510.6" y="555.4" width="1" height="0.0"/><circle cx="510.7" cy="557.9" r="3.5"/><rect x="511.6" y="555.1" width="1" height="0.4"/><circle cx="512.0" cy="553.0" r="3.5"/><rect x="512.6" y="554.9" width="1" height="0.8"/><circle cx="513.2" cy="558.1" r="3.5"/><rect x="513.6" y="554.6" width="1" height="1.2"/><circle cx="514.5" cy="555.5" r="3.5"/><rect x="514.6" y="554.4" width="1" height="1.6"/><rect x="515.6" y="554.1" width="1" height="2.0"/><circle cx="516.2" cy="554.6" r="3.5"/><rect x="516.6" y="553.9" width="1" height="2.4"/><circle cx="517.3" cy="555.4" r="3.5"/><circle cx="463.1" cy="555.3" r="3.5"/><circle cx="463.1" cy="549.7" r="3.5"/><circle cx="471.6" cy="551.8" r="3.5"/><circle cx="478.7" cy="551.8" r="3.5"/><circle cx="485.8" cy="556.7" r="3.5"/><circle cx="490.0" cy="553.2" r="3.5"/><circle cx="490.0" cy="555.3" r="3.5"/><circle cx="497.1" cy="548.3" r="3.5"/><circle cx="501.3" cy="552.5" r="3.5"/><circle cx="506.9" cy="553.9" r="3.5"/><circle cx="517.8" cy="551.1" r="3.5"/><circle cx="517.8" cy="552.5" r="3.5"/><circle cx="463.1" cy="551.1" r="3.5"/><circle cx="463.1" cy="553.3" r="3.5"/><circle cx="468.8" cy="558.2" r="3.5"/><circle cx="480.1" cy="558.9" r="3.5"/><circle cx="490.0" cy="558.2" r="3.5"/><circle cx="490.0" cy="561.0" r="3.5"/><circle cx="498.5" cy="556.8" r="3.5"/><circle cx="508.4" cy="557.5" r="3.5"/><circle cx="517.8" cy="558.9" r="3.5"/><circle cx="517.8" cy="555.4" r="3.5"/><circle cx="529.1" cy="557.5" r="3.5"/><circle cx="530.6" cy="555.3" r="3.5"/><rect x="531.0" y="555.9" width="1" height="0.7"/><circle cx="531.7" cy="555.1" r="3.5"/><rect x="532.0" y="555.2" width="1" height="1.8"/><circle cx="532.3" cy="556.0" r="3.5"/><rect x="533.0" y="554.6" width="1" height="2.2"/><circle cx="533.2" cy="555.5" r="3.5"/><rect x="534.0" y="554.0" width="1" height="2.6"/><rect x="535.0" y="553.0" width="1" height="3.3"/><rect x="536.0" y="551.4" width="1" height="4.7"/><circle cx="536.2" cy="556.8" r="3.5"/><rect x="537.0" y="549.7" width="1" height="6.1"/><circle cx="537.1" cy="555.4" r="3.5"/><rect x="538.0" y="548.0" width="1" height="7.5"/><circle cx="538.3" cy="556.7" r="3.5"/><circle cx="538.1" cy="554.5" r="3.5"/><rect x="539.0" y="546.7" width="1" height="8.7"/><circle cx="539.9" cy="544.5" r="3.5"/><rect x="540.0" y="548.3" width="1" height="6.7"/><circle cx="540.4" cy="546.2" r="3.5"/><rect x="541.0" y="550.0" width="1" height="4.8"/><rect x="542.0" y="551.7" width="1" height="2.9"/><circle cx="542.7" cy="557.0" r="3.5"/><rect x="543.0" y="553.3" width="1" height="1.0"/><circle cx="543.7" cy="551.3" r="3.5"/><rect x="544.0" y="553.6" width="1" height="0.4"/><circle cx="544.8" cy="554.3" r="3.5"/><rect x="545.0" y="553.7" width="1" height="0.1"/><circle cx="545.2" cy="551.2" r="3.5"/><circle cx="547.1" cy="551.8" r="3.5"/><circle cx="549.4" cy="556.3" r="3.5"/><rect x="550.0" y="554.1" width="1" height="0.0"/><circle cx="550.8" cy="552.5" r="3.5"/><rect x="551.0" y="554.1" width="1" height="0.1"/><rect x="552.0" y="554.2" width="1" height="0.1"/><circle cx="552.8" cy="555.9" r="3.5"/><rect x="553.0" y="554.3" width="1" height="0.2"/><circle cx="553.8" cy="555.0" r="3.5"/><rect x="554.0" y="554.4" width="1" height="0.2"/><circle cx="554.9" cy="557.0" r="3.5"/><rect x="555.0" y="554.6" width="1" height="0.1"/><circle cx="555.3" cy="556.2" r="3.5"/><rect x="556.0" y="554.7" width="1" height="0.1"/><circle cx="556.1" cy="552.4" r="3.5"/><rect x="557.0" y="554.9" width="1" height="0.1"/><circle cx="557.7" cy="555.4" r="3.5"/><rect x="558.0" y="555.0" width="1" height="0.1"/><rect x="559.0" y="555.2" width="1" height="0.2"/><rect x="560.0" y="555.3" width="1" height="0.3"/><circle cx="560.6" cy="552.9" r="3.5"/><rect x="561.0" y="555.5" width="1" height="0.4"/><rect x="562.0" y="555.6" width="1" height="0.5"/><circle cx="562.1" cy="553.6" r="3.5"/><rect x="563.0" y="555.8" width="1" height="0.6"/><circle cx="563.3" cy="555.8" r="3.5"/><rect x="564.0" y="555.9" width="1" height="0.7"/><circle cx="564.4" cy="559.0" r="3.5"/><rect x="565.0" y="556.1" width="1" height="0.8"/><circle cx="565.1" cy="556.7" r="3.5"/><rect x="566.0" y="556.2" width="1" height="0.9"/><circle cx="566.1" cy="553.9" r="3.5"/><rect x="567.0" y="556.4" width="1" height="1.0"/><circle cx="567.4" cy="556.4" r="3.5"/><rect x="568.0" y="556.1" width="1" height="1.6"/><circle cx="568.9" cy="559.3" r="3.5"/><rect x="569.0" y="555.8" width="1" height="2.1"/><circle cx="569.9" cy="554.0" r="3.5"/><rect x="570.0" y="555.5" width="1" height="2.7"/><circle cx="570.8" cy="555.8" r="3.5"/><rect x="571.0" y="555.1" width="1" height="3.3"/><circle cx="571.9" cy="556.3" r="3.5"/><rect x="572.0" y="554.8" width="1" height="4.4"/><circle cx="572.8" cy="556.9" r="3.5"/><rect x="573.0" y="554.5" width="1" height="5.7"/><circle cx="573.3" cy="554.4" r="3.5"/><rect x="574.0" y="554.1" width="1" height="7.0"/><circle cx="574.0" cy="563.6" r="3.5"/><circle cx="574.2" cy="552.3" r="3.5"/><rect x="575.0" y="553.8" width="1" height="7.1"/><circle cx="575.4" cy="556.3" r="3.5"/><rect x="576.0" y="553.7" width="1" height="6.6"/><circle cx="577.0" cy="552.3" r="3.5"/><rect x="577.0" y="553.9" width="1" height="5.8"/><circle cx="577.0" cy="552.3" r="3.5"/><rect x="578.0" y="554.1" width="1" height="5.0"/><circle cx="578.7" cy="561.3" r="3.5"/><rect x="579.0" y="554.3" width="1" height="4.1"/><circle cx="579.1" cy="560.6" r="3.5"/><rect x="580.0" y="554.6" width="1" height="3.3"/><circle cx="580.6" cy="559.0" r="3.5"/><rect x="581.0" y="554.8" width="1" height="2.5"/><circle cx="581.5" cy="554.3" r="3.5"/><rect x="582.0" y="555.0" width="1" height="2.1"/><circle cx="582.8" cy="559.6" r="3.5"/><rect x="583.0" y="555.2" width="1" height="1.9"/><circle cx="583.8" cy="553.3" r="3.5"/><rect x="584.0" y="555.5" width="1" height="1.7"/><circle cx="584.4" cy="553.6" r="3.5"/><rect x="585.0" y="555.7" width="1" height="1.4"/><circle cx="585.7" cy="557.6" r="3.5"/><rect x="586.0" y="555.9" width="1" height="1.2"/><circle cx="586.6" cy="557.7" r="3.5"/><rect x="587.0" y="556.1" width="1" height="1.0"/><circle cx="587.6" cy="556.8" r="3.5"/><rect x="588.0" y="556.3" width="1" height="0.8"/><circle cx="589.0" cy="559.6" r="3.5"/><rect x="589.0" y="556.4" width="1" height="0.9"/><circle cx="589.5" cy="559.4" r="3.5"/><rect x="590.0" y="556.3" width="1" height="1.2"/><rect x="591.0" y="556.2" width="1" height="1.5"/><circle cx="591.7" cy="556.4" r="3.5"/><rect x="592.0" y="556.2" width="1" height="1.9"/><rect x="593.0" y="556.1" width="1" height="2.2"/><circle cx="593.6" cy="559.7" r="3.5"/><rect x="594.0" y="556.1" width="1" height="2.5"/><circle cx="594.5" cy="553.6" r="3.5"/><rect x="595.0" y="556.0" width="1" height="2.8"/><rect x="596.0" y="555.9" width="1" height="3.1"/><circle cx="596.6" cy="553.5" r="3.5"/><rect x="597.0" y="555.9" width="1" height="3.4"/><circle cx="597.9" cy="561.1" r="3.5"/><rect x="598.0" y="555.8" width="1" height="3.7"/><circle cx="598.1" cy="555.6" r="3.5"/><rect x="599.0" y="555.7" width="1" height="4.0"/><circle cx="599.9" cy="558.1" r="3.5"/><rect x="600.0" y="555.7" width="1" height="4.6"/><circle cx="600.8" cy="559.3" r="3.5"/><rect x="601.0" y="555.8" width="1" height="5.5"/><circle cx="601.8" cy="553.3" r="3.5"/><rect x="602.0" y="555.9" width="1" height="6.4"/><circle cx="602.2" cy="554.3" r="3.5"/><rect x="603.0" y="555.9" width="1" height="7.4"/><circle cx="603.8" cy="560.2" r="3.5"/><rect x="604.0" y="556.0" width="1" height="8.0"/><circle cx="604.9" cy="564.1" r="3.5"/><rect x="605.0" y="556.1" width="1" height="6.9"/><circle cx="605.7" cy="564.8" r="3.5"/><rect x="606.0" y="556.2" width="1" height="5.9"/><circle cx="606.8" cy="554.8" r="3.5"/><rect x="607.0" y="556.2" width="1" height="4.8"/><circle cx="607.5" cy="555.1" r="3.5"/><rect x="608.0" y="556.3" width="1" height="3.7"/><rect x="609.0" y="556.4" width="1" height="2.7"/><circle cx="609.2" cy="555.3" r="3.5"/><rect x="610.0" y="557.1" width="1" height="1.5"/><circle cx="610.7" cy="559.9" r="3.5"/><rect x="611.0" y="557.0" width="1" height="1.8"/><circle cx="611.3" cy="558.4" r="3.5"/><rect x="612.0" y="556.9" width="1" height="2.0"/><rect x="613.0" y="556.8" width="1" height="2.3"/><circle cx="613.3" cy="561.6" r="3.5"/><rect x="614.0" y="556.7" width="1" height="2.5"/><circle cx="614.1" cy="561.1" r="3.5"/><rect x="615.0" y="556.7" width="1" height="2.8"/><circle cx="615.5" cy="554.4" r="3.5"/><rect x="616.0" y="556.6" width="1" height="3.0"/><circle cx="616.2" cy="554.6" r="3.5"/><rect x="617.0" y="556.5" width="1" height="3.3"/><circle cx="617.3" cy="557.9" r="3.5"/><rect x="618.0" y="556.4" width="1" height="3.5"/><circle cx="618.6" cy="554.8" r="3.5"/><rect x="619.0" y="555.5" width="1" height="4.1"/><rect x="620.0" y="554.6" width="1" height="4.6"/><circle cx="620.9" cy="553.1" r="3.5"/><rect x="621.0" y="553.7" width="1" height="5.2"/><circle cx="621.7" cy="561.0" r="3.5"/><rect x="622.0" y="552.8" width="1" height="5.7"/><circle cx="622.7" cy="556.3" r="3.5"/><rect x="623.0" y="551.9" width="1" height="6.3"/><circle cx="623.8" cy="557.1" r="3.5"/><rect x="624.0" y="551.0" width="1" height="6.8"/><circle cx="624.4" cy="559.1" r="3.5"/><rect x="625.0" y="550.1" width="1" height="7.3"/><circle cx="625.4" cy="559.2" r="3.5"/><rect x="626.0" y="551.4" width="1" height="5.7"/><circle cx="626.4" cy="552.1" r="3.5"/><rect x="627.0" y="552.7" width="1" height="4.0"/><circle cx="627.7" cy="556.6" r="3.5"/><rect x="628.0" y="554.0" width="1" height="2.4"/><circle cx="628.7" cy="555.2" r="3.5"/><rect x="629.0" y="555.4" width="1" height="0.8"/><circle cx="629.4" cy="553.2" r="3.5"/><rect x="630.0" y="555.5" width="1" height="0.5"/><rect x="631.0" y="555.1" width="1" height="0.6"/><circle cx="632.0" cy="553.0" r="3.5"/><rect x="632.0" y="554.8" width="1" height="0.7"/><circle cx="632.1" cy="552.8" r="3.5"/><rect x="633.0" y="554.5" width="1" height="0.8"/><rect x="634.0" y="554.1" width="1" height="1.0"/><rect x="635.0" y="553.8" width="1" height="1.1"/><circle cx="635.6" cy="551.7" r="3.5"/><rect x="636.0" y="553.5" width="1" height="1.2"/><circle cx="636.9" cy="551.0" r="3.5"/><rect x="637.0" y="553.1" width="1" height="1.3"/><circle cx="637.4" cy="553.3" r="3.5"/><rect x="638.0" y="552.8" width="1" height="1.5"/><circle cx="638.2" cy="551.7" r="3.5"/><rect x="639.0" y="552.7" width="1" height="1.7"/><circle cx="639.5" cy="551.4" r="3.5"/><rect x="640.0" y="552.6" width="1" height="1.9"/><rect x="641.0" y="552.4" width="1" height="2.2"/><circle cx="641.5" cy="556.1" r="3.5"/><rect x="642.0" y="552.3" width="1" height="2.4"/><circle cx="642.8" cy="556.4" r="3.5"/><rect x="643.0" y="552.1" width="1" height="2.6"/><circle cx="643.3" cy="556.4" r="3.5"/><rect x="644.0" y="552.0" width="1" height="2.8"/><circle cx="644.9" cy="557.2" r="3.5"/><rect x="645.0" y="551.8" width="1" height="3.1"/><circle cx="645.1" cy="553.2" r="3.5"/><rect x="646.0" y="551.7" width="1" height="3.3"/><circle cx="646.5" cy="556.8" r="3.5"/><rect x="647.0" y="551.6" width="1" height="3.5"/><circle cx="647.6" cy="556.4" r="3.5"/><rect x="648.0" y="551.6" width="1" height="3.5"/><circle cx="648.1" cy="556.8" r="3.5"/><rect x="649.0" y="552.0" width="1" height="3.2"/><circle cx="649.3" cy="551.3" r="3.5"/><rect x="650.0" y="552.5" width="1" height="2.9"/><circle cx="650.4" cy="550.3" r="3.5"/><rect x="651.0" y="552.9" width="1" height="2.5"/><circle cx="651.9" cy="552.3" r="3.5"/><rect x="652.0" y="553.3" width="1" height="2.2"/><circle cx="652.9" cy="554.4" r="3.5"/><rect x="653.0" y="553.7" width="1" height="1.9"/><circle cx="653.5" cy="551.9" r="3.5"/><rect x="654.0" y="554.1" width="1" height="1.5"/><rect x="655.0" y="554.5" width="1" height="1.2"/><circle cx="655.0" cy="553.8" r="3.5"/><rect x="656.0" y="555.0" width="1" height="0.9"/><circle cx="656.4" cy="553.0" r="3.5"/><rect x="657.0" y="554.9" width="1" height="1.0"/><rect x="658.0" y="554.8" width="1" height="1.2"/><circle cx="658.8" cy="552.3" r="3.5"/><rect x="659.0" y="554.7" width="1" height="1.4"/><rect x="660.0" y="554.6" width="1" height="1.6"/><circle cx="660.8" cy="552.7" r="3.5"/><rect x="661.0" y="554.5" width="1" height="1.8"/><circle cx="661.7" cy="555.4" r="3.5"/><rect x="662.0" y="554.3" width="1" height="2.0"/><rect x="663.0" y="554.2" width="1" height="2.2"/><circle cx="663.3" cy="552.1" r="3.5"/><rect x="664.0" y="554.1" width="1" height="2.4"/><circle cx="664.9" cy="558.8" r="3.5"/><rect x="665.0" y="554.0" width="1" height="2.6"/><circle cx="665.5" cy="557.5" r="3.5"/><rect x="666.0" y="553.9" width="1" height="2.8"/><rect x="667.0" y="553.8" width="1" height="2.9"/><circle cx="668.0" cy="551.4" r="3.5"/><rect x="668.0" y="553.7" width="1" height="3.1"/><circle cx="668.2" cy="552.6" r="3.5"/><rect x="669.0" y="553.6" width="1" height="3.3"/><rect x="670.0" y="553.6" width="1" height="3.4"/><circle cx="670.6" cy="552.1" r="3.5"/><rect x="671.0" y="553.6" width="1" height="3.5"/><circle cx="671.1" cy="557.6" r="3.5"/><rect x="672.0" y="553.6" width="1" height="3.5"/><circle cx="672.5" cy="558.8" r="3.5"/><rect x="673.0" y="553.6" width="1" height="3.4"/><circle cx="673.2" cy="559.1" r="3.5"/><rect x="674.0" y="553.6" width="1" height="3.2"/><circle cx="674.4" cy="558.1" r="3.5"/><rect x="675.0" y="553.6" width="1" height="3.1"/><circle cx="675.2" cy="559.1" r="3.5"/><rect x="676.0" y="553.6" width="1" height="3.0"/><circle cx="676.7" cy="553.7" r="3.5"/><rect x="677.0" y="553.6" width="1" height="2.9"/><circle cx="677.9" cy="558.8" r="3.5"/><rect x="678.0" y="553.6" width="1" height="2.7"/><circle cx="678.8" cy="558.7" r="3.5"/><rect x="679.0" y="553.6" width="1" height="2.6"/><circle cx="679.2" cy="558.6" r="3.5"/><rect x="680.0" y="553.6" width="1" height="2.5"/><circle cx="680.6" cy="558.3" r="3.5"/><rect x="681.0" y="553.6" width="1" height="2.4"/><circle cx="681.2" cy="553.3" r="3.5"/><rect x="682.0" y="553.6" width="1" height="2.2"/><circle cx="682.1" cy="554.4" r="3.5"/><rect x="683.0" y="553.6" width="1" height="2.1"/><circle cx="683.6" cy="557.8" r="3.5"/><rect x="684.0" y="553.6" width="1" height="2.0"/><rect x="685.0" y="553.6" width="1" height="1.9"/><circle cx="685.4" cy="557.9" r="3.5"/><rect x="686.0" y="553.6" width="1" height="1.7"/><circle cx="686.9" cy="557.5" r="3.5"/><rect x="687.0" y="553.6" width="1" height="1.6"/><circle cx="687.0" cy="551.6" r="3.5"/><rect x="688.0" y="553.6" width="1" height="1.5"/><circle cx="688.0" cy="556.5" r="3.5"/><rect x="689.0" y="553.7" width="1" height="1.2"/><circle cx="689.2" cy="556.8" r="3.5"/><rect x="690.0" y="553.9" width="1" height="0.9"/><circle cx="690.6" cy="556.9" r="3.5"/><rect x="691.0" y="554.2" width="1" height="0.5"/><rect x="692.0" y="554.4" width="1" height="0.1"/><circle cx="692.3" cy="554.3" r="3.5"/><circle cx="693.0" cy="556.3" r="3.5"/><circle cx="694.6" cy="554.9" r="3.5"/><rect x="696.0" y="555.4" width="1" height="0.2"/><circle cx="696.7" cy="557.6" r="3.5"/><rect x="697.0" y="555.7" width="1" height="0.7"/><rect x="698.0" y="555.0" width="1" height="2.1"/><rect x="699.0" y="554.3" width="1" height="3.6"/><circle cx="699.9" cy="560.0" r="3.5"/><rect x="700.0" y="553.6" width="1" height="4.9"/><circle cx="700.2" cy="551.9" r="3.5"/><rect x="701.0" y="552.9" width="1" height="5.9"/><circle cx="701.5" cy="556.3" r="3.5"/><rect x="702.0" y="552.2" width="1" height="6.8"/><circle cx="702.5" cy="557.6" r="3.5"/><rect x="703.0" y="551.5" width="1" height="7.8"/><circle cx="703.2" cy="554.4" r="3.5"/><rect x="704.0" y="550.8" width="1" height="8.7"/><circle cx="704.1" cy="555.0" r="3.5"/><circle cx="704.3" cy="552.1" r="3.5"/><rect x="705.0" y="549.4" width="1" height="10.4"/><circle cx="705.0" cy="562.1" r="3.5"/><rect x="706.0" y="547.9" width="1" height="12.2"/><circle cx="706.7" cy="556.1" r="3.5"/><rect x="707.0" y="546.6" width="1" height="13.7"/><circle cx="707.1" cy="547.5" r="3.5"/><rect x="708.0" y="547.2" width="1" height="13.4"/><circle cx="708.5" cy="560.3" r="3.5"/><circle cx="708.4" cy="557.7" r="3.5"/><rect x="709.0" y="547.8" width="1" height="13.0"/><circle cx="709.0" cy="545.7" r="3.5"/><rect x="710.0" y="548.4" width="1" height="12.7"/><circle cx="710.2" cy="561.9" r="3.5"/><rect x="711.0" y="549.0" width="1" height="12.3"/><circle cx="711.7" cy="551.4" r="3.5"/><rect x="712.0" y="549.6" width="1" height="11.3"/><circle cx="712.3" cy="548.7" r="3.5"/><rect x="713.0" y="550.2" width="1" height="10.2"/><circle cx="713.4" cy="562.3" r="3.5"/><rect x="714.0" y="550.8" width="1" height="9.0"/><circle cx="714.5" cy="548.4" r="3.5"/><rect x="715.0" y="552.2" width="1" height="7.0"/><circle cx="715.3" cy="552.4" r="3.5"/><circle cx="529.5" cy="556.7" r="3.5"/><circle cx="535.2" cy="551.1" r="3.5"/><circle cx="539.4" cy="544.0" r="3.5"/><circle cx="543.6" cy="551.1" r="3.5"/><circle cx="553.5" cy="551.8" r="3.5"/><circle cx="567.6" cy="553.9" r="3.5"/><circle cx="576.1" cy="551.1" r="3.5"/><circle cx="588.8" cy="553.9" r="3.5"/><circle cx="600.1" cy="553.2" r="3.5"/><circle cx="610.0" cy="553.9" r="3.5"/><circle cx="610.0" cy="554.6" r="3.5"/><circle cx="618.5" cy="553.9" r="3.5"/><circle cx="625.5" cy="547.6" r="3.5"/><circle cx="629.8" cy="553.2" r="3.5"/><circle cx="638.2" cy="550.4" r="3.5"/><circle cx="648.1" cy="549.0" r="3.5"/><circle cx="656.6" cy="552.5" r="3.5"/><circle cx="669.3" cy="551.1" r="3.5"/><circle cx="680.6" cy="551.1" r="3.5"/><circle cx="689.1" cy="551.1" r="3.5"/><circle cx="697.5" cy="553.2" r="3.5"/><circle cx="704.6" cy="548.3" r="3.5"/><circle cx="707.4" cy="544.0" r="3.5"/><circle cx="714.5" cy="548.3" r="3.5"/><circle cx="715.9" cy="555.3" r="3.5"/><circle cx="529.5" cy="555.4" r="3.5"/><circle cx="532.4" cy="559.6" r="3.5"/><circle cx="546.5" cy="556.1" r="3.5"/><circle cx="557.8" cy="557.5" r="3.5"/><circle cx="571.9" cy="561.0" r="3.5"/><circle cx="574.7" cy="563.9" r="3.5"/><circle cx="581.8" cy="559.6" r="3.5"/><circle cx="588.8" cy="559.6" r="3.5"/><circle cx="600.1" cy="562.4" r="3.5"/><circle cx="604.4" cy="566.7" r="3.5"/><circle cx="610.0" cy="561.0" r="3.5"/><circle cx="610.0" cy="561.0" r="3.5"/><circle cx="618.5" cy="562.4" r="3.5"/><circle cx="628.4" cy="558.9" r="3.5"/><circle cx="638.2" cy="556.8" r="3.5"/><circle cx="655.2" cy="558.2" r="3.5"/><circle cx="672.1" cy="559.6" r="3.5"/><circle cx="683.4" cy="558.2" r="3.5"/><circle cx="694.7" cy="556.8" r="3.5"/><circle cx="700.4" cy="561.0" r="3.5"/><circle cx="711.6" cy="563.9" r="3.5"/><circle cx="715.9" cy="559.6" r="3.5"/><circle cx="144.8" cy="546.2" r="3.5"/><circle cx="195.2" cy="544.1" r="3.5"/><circle cx="199.2" cy="565.9" r="3.5"/><circle cx="392.6" cy="540.8" r="3.5"/><circle cx="407.4" cy="540.8" r="3.5"/><circle cx="418.3" cy="542.2" r="3.5"/><circle cx="435.2" cy="543.6" r="3.5"/><circle cx="375.4" cy="568.8" r="3.5"/><circle cx="432.8" cy="576.5" r="3.5"/><circle cx="463.2" cy="571.6" r="3.5"/><circle cx="472.4" cy="569.5" r="3.5"/><circle cx="478.4" cy="565.9" r="3.5"/><circle cx="495.4" cy="568.8" r="3.5"/><circle cx="509.8" cy="575.8" r="3.5"/><circle cx="541.1" cy="569.9" r="3.5"/><circle cx="556.4" cy="575.8" r="3.5"/><circle cx="564.5" cy="567.6" r="3.5"/><circle cx="590.2" cy="570.2" r="3.5"/><circle cx="609.3" cy="573.7" r="3.5"/><circle cx="528.1" cy="565.9" r="3.5"/><circle cx="682.0" cy="534.6" r="3.5"/><circle cx="633.7" cy="564.5" r="3.5"/><circle cx="639.6" cy="567.4" r="3.5"/><circle cx="675.6" cy="570.9" r="3.5"/><circle cx="687.6" cy="566.6" r="3.5"/><circle cx="703.2" cy="573.7" r="3.5"/><circle cx="711.6" cy="568.8" r="3.5"/><circle cx="611.4" cy="573.7" r="3.5"/></g>
<rect x="74" y="74" width="702" height="2" fill="#ffffff"/>
<rect x="74" y="251" width="702" height="2" fill="#ffffff"/>
<rect x="74" y="427" width="702" height="2" fill="#ffffff"/>
<rect x="74" y="604" width="702" height="2" fill="#ffffff"/>
<rect x="74" y="74" width="2" height="532" fill="#ffffff"/>
<rect x="774" y="74" width="2" height="532" fill="#ffffff"/>
<rect x="74" y="75" width="2" height="10" fill="#ffffff"/>
<rect x="74" y="242" width="2" height="10" fill="#ffffff"/>
<rect x="74" y="252" width="2" height="10" fill="#ffffff"/>
<rect x="74" y="418" width="2" height="10" fill="#ffffff"/>
<rect x="74" y="428" width="2" height="10" fill="#ffffff"/>
<rect x="74" y="595" width="2" height="10" fill="#ffffff"/>
<rect x="94" y="75" width="2" height="5" fill="#ffffff"/>
<rect x="94" y="247" width="2" height="5" fill="#ffffff"/>
<rect x="94" y="252" width="2" height="5" fill="#ffffff"/>
<rect x="94" y="423" width="2" height="5" fill="#ffffff"/>
<rect x="94" y="428" width="2" height="5" fill="#ffffff"/>
<rect x="94" y="600" width="2" height="5" fill="#ffffff"/>
<rect x="114" y="75" width="2" height="5" fill="#ffffff"/>
<rect x="114" y="247" width="2" height="5" fill="#ffffff"/>
<rect x="114" y="252" width="2" height="5" fill="#ffffff"/>
<rect x="114" y="423" width="2" height="5" fill="#ffffff"/>
<rect x="114" y="428" width="2" height="5" fill="#ffffff"/>
<rect x="114" y="600" width="2" height="5" fill="#ffffff"/>
<rect x="134" y="75" width="2" height="5" fill="#ffffff"/>
<rect x="134" y="247" width="2" height="5" fill="#ffffff"/>
<rect x="134" y="252" width="2" height="5" fill="#ffffff"/>
<rect x="134" y="423" width="2" height="5" fill="#ffffff"/>
<rect x="134" y="428" width="2" height="5" fill="#ffffff"/>
<rect x="134" y="600" width="2" height="5" fill="#ffffff"/>
<rect x="154" y="75" width="2" height="5" fill="#ffffff"/>
<rect x="154" y="247" width="2" height="5" fill="#ffffff"/>
<rect x="154" y="252" width="2" height="5" fill="#ffffff"/>
<rect x="154" y="423" width="2" height="5" fill="#ffffff"/>
<rect x="154" y="428" width="2" height="5" fill="#ffffff"/>
<rect x="154" y="600" width="2" height="5" fill="#ffffff"/>
<rect x="175" y="75" width="2" height="10" fill="#ffffff"/>
<rect x="175" y="242" width="2" height="10" fill="#ffffff"/>
<rect x="175" y="252" width="2" height="10" fill="#ffffff"/>
<rect x="175" y="418" width="2" height="10" fill="#ffffff"/>
<rect x="175" y="428" width="2" height="10" fill="#ffffff"/>
<rect x="175" y="595" width="2" height="10" fill="#ffffff"/>
<rect x="195" y="75" width="2" height="5" fill="#ffffff"/>
<rect x="195" y="247" width="2" height="5" fill="#ffffff"/>
<rect x="195" y="252" width="2" height="5" fill="#ffffff"/>
<rect x="195" y="423" width="2" height="5" fill="#ffffff"/>
<rect x="195" y="428" width="2" height="5" fill="#ffffff"/>
<rect x="195" y="600" width="2" height="5" fill="#ffffff"/>
<rect x="215" y="75" width="2" height="5" fill="#ffffff"/>
<rect x="215" y="247" width="2" height="5" fill="#ffffff"/>
<rect x="215" y="252" width="2" height="5" fill="#ffffff"/>
<rect x="215" y="423" width="2" height="5" fill="#ffffff"/>
<rect x="215" y="428" width="2" height="5" fill="#ffffff"/>
<rect x="215" y="600" width="2" height="5" fill="#ffffff"/>
<rect x="235" y="75" width="2" height="5" fill="#ffffff"/>
<rect x="235" y="247" width="2" height="5" fill="#ffffff"/>
<rect x="235" y="252" width="2" height="5" fill="#ffffff"/>
<rect x="235" y="423" width="2" height="5" fill="#ffffff"/>
<rect x="235" y="428" width="2" height="5" fill="#ffffff"/>
<rect x="235" y="600" width="2" height="5" fill="#ffffff"/>
<rect x="255" y="75" width="2" height="5" fill="#ffffff"/>
<rect x="255" y="247" width="2" height="5" fill="#ffffff"/>
<rect x="255" y="252" width="2" height="5" fill="#ffffff"/>
<rect x="255" y="423" width="2" height="5" fill="#ffffff"/>
<rect x="255" y="428" width="2" height="5" fill="#ffffff"/>
<rect x="255" y="600" width="2" height="5" fill="#ffffff"/>
<rect x="275" y="75" width="2" height="10" fill="#ffffff"/>
<rect x="275" y="242" width="2" height="10" fill="#ffffff"/>
<rect x="275" y="252" width="2" height="10" fill="#ffffff"/>
<rect x="275" y="418" width="2" height="10" fill="#ffffff"/>
<rect x="275" y="428" width="2" height="10" fill="#ffffff"/>
<rect x="275" y="595" width="2" height="10" fill="#ffffff"/>
<rect x="295" y="75" width="2" height="5" fill="#ffffff"/>
<rect x="295" y="247" width="2" height="5" fill="#ffffff"/>
<rect x="295" y="252" width="2" height="5" fill="#ffffff"/>
<rect x="295" y="423" width="2" height="5" fill="#ffffff"/>
<rect x="295" y="428" width="2" height="5" fill="#ffffff"/>
<rect x="295" y="600" width="2" height="5" fill="#ffffff"/>
<rect x="315" y="75" width="2" height="5" fill="#ffffff"/>
<rect x="315" y="247" width="2" height="5" fill="#ffffff"/>
<rect x="315" y="252" width="2" height="5" fill="#ffffff"/>
<rect x="315" y="423" width="2" height="5" fill="#ffffff"/>
<rect x="315" y="428" width="2" height="5" fill="#ffffff"/>
<rect x="315" y="600" width="2" height="5" fill="#ffffff"/>
<rect x="335" y="75" width="2" height="5" fill="#ffffff"/>
<rect x="335" y="247" width="2" height="5" fill="#ffffff"/>
<rect x="335" y="252" width="2" height="5" fill="#ffffff"/>
<rect x="335" y="423" width="2" height="5" fill="#ffffff"/>
<rect x="335" y="428" width="2" height="5" fill="#ffffff"/>
<rect x="335" y="600" width="2" height="5" fill="#ffffff"/>
<rect x="355" y="75" width="2" height="5" fill="#ffffff"/>
<rect x="355" y="247" width="2" height="5" fill="#ffffff"/>
<rect x="355" y="252" width="2" height="5" fill="#ffffff"/>
<rect x="355" y="423" width="2" height="5" fill="#ffffff"/>
<rect x="355" y="428" width="2" height="5" fill="#ffffff"/>
<rect x="355" y="600" width="2" height="5" fill="#ffffff"/>
<rect x="376" y="75" width="2" height="10" fill="#ffffff"/>
<rect x="376" y="242" width="2" height="10" fill="#ffffff"/>
<rect x="376" y="252" width="2" height="10" fill="#ffffff"/>
<rect x="376" y="418" width="2" height="10" fill="#ffffff"/>
<rect x="376" y="428" width="2" height="10" fill="#ffffff"/>
<rect x="376" y="595" width="2" height="10" fill="#ffffff"/>
<rect x="396" y="75" width="2" height="5" fill="#ffffff"/>
<rect x="396" y="247" width="2" height="5" fill="#ffffff"/>
<rect x="396" y="252" width="2" height="5" fill="#ffffff"/>
<rect x="396" y="423" width="2" height="5" fill="#ffffff"/>
<rect x="396" y="428" width="2" height="5" fill="#ffffff"/>
<rect x="396" y="600" width="2" height="5" fill="#ffffff"/>
<rect x="416" y="75" width="2" height="5" fill="#ffffff"/>
<rect x="416" y="247" width="2" height="5" fill="#ffffff"/>
<rect x="416" y="252" width="2" height="5" fill="#ffffff"/>
<rect x="416" y="423" width="2" height="5" fill="#ffffff"/>
<rect x="416" y="428" width="2" height="5" fill="#ffffff"/>
<rect x="416" y="600" width="2" height="5" fill="#ffffff"/>
<rect x="436" y="75" width="2" height="5" fill="#ffffff"/>
<rect x="436" y="247" width="2" height="5" fill="#ffffff"/>
<rect x="436" y="252" width="2" height="5" fill="#ffffff"/>
<rect x="436" y="423" width="2" height="5" fill="#ffffff"/>
<rect x="436" y="428" width="2" height="5" fill="#ffffff"/>
<rect x="436" y="600" width="2" height="5" fill="#ffffff"/>
<rect x="456" y="75" width="2" height="5" fill="#ffffff"/>
<rect x="456" y="247" width="2" height="5" fill="#ffffff"/>
<rect x="456" y="252" width="2" height="5" fill="#ffffff"/>
<rect x="456" y="423" width="2" height="5" fill="#ffffff"/>
<rect x="456" y="428" width="2" height="5" fill="#ffffff"/>
<rect x="456" y="600" width="2" height="5" fill="#ffffff"/>
<rect x="476" y="75" width="2" height="10" fill="#ffffff"/>
<rect x="476" y="242" width="2" height="10" fill="#ffffff"/>
<rect x="476" y="252" width="2" height="10" fill="#ffffff"/>
<rect x="476" y="418" width="2" height="10" fill="#ffffff"/>
<rect x="476" y="428" width="2" height="10" fill="#ffffff"/>
<rect x="476" y="595" width="2" height="10" fill="#ffffff"/>
<rect x="496" y="75" width="2" height="5" fill="#ffffff"/>
<rect x="496" y="247" width="2" height="5" fill="#ffffff"/>
<rect x="496" y="252" width="2" height="5" fill="#ffffff"/>
<rect x="496" y="423" width="2" height="5" fill="#ffffff"/>
<rect x="496" y="428" width="2" height="5" fill="#ffffff"/>
<rect x="496" y="600" width="2" height="5" fill="#ffffff"/>
<rect x="516" y="75" width="2" height="5" fill="#ffffff"/>
<rect x="516" y="247" width="2" height="5" fill="#ffffff"/>
<rect x="516" y="252" width="2" height="5" fill="#ffffff"/>
<rect x="516" y="423" width="2" height="5" fill="#ffffff"/>
<rect x="516" y="428" width="2" height="5" fill="#ffffff"/>
<rect x="516" y="600" width="2" height="5" fill="#ffffff"/>
<rect x="536" y="75" width="2" height="5" fill="#ffffff"/>
<rect x="536" y="247" width="2" height="5" fill="#ffffff"/>
<rect x="536" y="252" width="2" height="5" fill="#ffffff"/>
<rect x="536" y="423" width="2" height="5" fill="#ffffff"/>
<rect x="536" y="428" width="2" height="5" fill="#ffffff"/>
<rect x="536" y="600" width="2" height="5" fill="#ffffff"/>
<rect x="556" y="75" width="2" height="5" fill="#ffffff"/>
<rect x="556" y="247" width="2" height="5" fill="#ffffff"/>
<rect x="556" y="252" width="2" height="5" fill="#ffffff"/>
<rect x="556" y="423" width="2" height="5" fill="#ffffff"/>
<rect x="556" y="428" width="2" height="5" fill="#ffffff"/>
<rect x="556" y="600" width="2" height="5" fill="#ffffff"/>
<rect x="577" y="75" width="2" height="10" fill="#ffffff"/>
<rect x="577" y="242" width="2" height="10" fill="#ffffff"/>
<rect x="577" y="252" width="2" height="10" fill="#ffffff"/>
<rect x="577" y="418" width="2" height="10" fill="#ffffff"/>
<rect x="577" y="428" width="2" height="10" fill="#ffffff"/>
<rect x="577" y="595" width="2" height="10" fill="#ffffff"/>
<rect x="597" y="75" width="2" height="5" fill="#ffffff"/>
<rect x="597" y="247" width="2" height="5" fill="#ffffff"/>
<rect x="597" y="252" width="2" height="5" fill="#ffffff"/>
<rect x="597" y="423" width="2" height="5" fill="#ffffff"/>
<rect x="597" y="428" width="2" height="5" fill="#ffffff"/>
<rect x="597" y="600" width="2" height="5" fill="#ffffff"/>
<rect x="617" y="75" width="2" height="5" fill="#ffffff"/>
<rect x="617" y="247" width="2" height="5" fill="#ffffff"/>
<rect x="617" y="252" width="2" height="5" fill="#ffffff"/>
<rect x="617" y="423" width="2" height="5" fill="#ffffff"/>
<rect x="617" y="428" width="2" height="5" fill="#ffffff"/>
<rect x="617" y="600" width="2" height="5" fill="#ffffff"/>
<rect x="637" y="75" width="2" height="5" fill="#ffffff"/>
<rect x="637" y="247" width="2" height="5" fill="#ffffff"/>
<rect x="637" y="252" width="2" height="5" fill="#ffffff"/>
<rect x="637" y="423" width="2" height="5" fill="#ffffff"/>
<rect x="637" y="428" width="2" height="5" fill="#ffffff"/>
<rect x="637" y="600" width="2" height="5" fill="#ffffff"/>
<rect x="657" y="75" width="2" height="5" fill="#ffffff"/>
<rect x="657" y="247" width="2" height="5" fill="#ffffff"/>
<rect x="657" y="252" width="2" height="5" fill="#ffffff"/>
<rect x="657" y="423" width="2" height="5" fill="#ffffff"/>
<rect x="657" y="428" width="2" height="5" fill="#ffffff"/>
<rect x="657" y="600" width="2" height="5" fill="#ffffff"/>
<rect x="677" y="75" width="2" height="10" fill="#ffffff"/>
<rect x="677" y="242" width="2" height="10" fill="#ffffff"/>
<rect x="677" y="252" width="2" height="10" fill="#ffffff"/>
<rect x="677" y="418" width="2" height="10" fill="#ffffff"/>
<rect x="677" y="428" width="2" height="10" fill="#ffffff"/>
<rect x="677" y="595" width="2" height="10" fill="#ffffff"/>
<rect x="697" y="75" width="2" height="5" fill="#ffffff"/>
<rect x="697" y="247" width="2" height="5" fill="#ffffff"/>
<rect x="697" y="252" width="2" height="5" fill="#ffffff"/>
<rect x="697" y="423" width="2" height="5" fill="#ffffff"/>
<rect x="697" y="428" width="2" height="5" fill="#ffffff"/>
<rect x="697" y="600" width="2" height="5" fill="#ffffff"/>
<rect x="717" y="75" width="2" height="5" fill="#ffffff"/>
<rect x="717" y="247" width="2" height="5" fill="#ffffff"/>
<rect x="717" y="252" width="2" height="5" fill="#ffffff"/>
<rect x="717" y="423" width="2" height="5" fill="#ffffff"/>
<rect x="717" y="428" width="2" height="5" fill="#ffffff"/>
<rect x="717" y="600" width="2" height="5" fill="#ffffff"/>
<rect x="737" y="75" width="2" height="5" fill="#ffffff"/>
<rect x="737" y="247" width="2" height="5" fill="#ffffff"/>
<rect x="737" y="252" width="2" height="5" fill="#ffffff"/>
<rect x="737" y="423" width="2" height="5" fill="#ffffff"/>
<rect x="737" y="428" width="2" height="5" fill="#ffffff"/>
<rect x="737" y="600" width="2" height="5" fill="#ffffff"/>
<rect x="757" y="75" width="2" height="5" fill="#ffffff"/>
<rect x="757" y="247" width="2" height="5" fill="#ffffff"/>
<rect x="757" y="252" width="2" height="5" fill="#ffffff"/>
<rect x="757" y="423" width="2" height="5" fill="#ffffff"/>
<rect x="757" y="428" width="2" height="5" fill="#ffffff"/>
<rect x="757" y="600" width="2" height="5" fill="#ffffff"/>
<rect x="75" y="193" width="10" height="2" fill="#ffffff"/>
<rect x="765" y="193" width="10" height="2" fill="#ffffff"/>
<rect x="75" y="135" width="10" height="2" fill="#ffffff"/>
<rect x="765" y="135" width="10" height="2" fill="#ffffff"/>
<rect x="75" y="77" width="10" height="2" fill="#ffffff"/>
<rect x="765" y="77" width="10" height="2" fill="#ffffff"/>
<rect x="75" y="369" width="10" height="2" fill="#ffffff"/>
<rect x="765" y="369" width="10" height="2" fill="#ffffff"/>
<rect x="75" y="312" width="10" height="2" fill="#ffffff"/>
<rect x="765" y="312" width="10" height="2" fill="#ffffff"/>
<rect x="75" y="254" width="10" height="2" fill="#ffffff"/>
<rect x="765" y="254" width="10" height="2" fill="#ffffff"/>
<rect x="75" y="574" width="5" height="2" fill="#ffffff"/>
<rect x="770" y="574" width="5" height="2" fill="#ffffff"/>
<rect x="75" y="559" width="5" height="2" fill="#ffffff"/>
<rect x="770" y="559" width="5" height="2" fill="#ffffff"/>
<rect x="75" y="545" width="5" height="2" fill="#ffffff"/>
<rect x="770" y="545" width="5" height="2" fill="#ffffff"/>
<rect x="75" y="530" width="5" height="2" fill="#ffffff"/>
<rect x="770" y="530" width="5" height="2" fill="#ffffff"/>
<rect x="75" y="500" width="5" height="2" fill="#ffffff"/>
<rect x="770" y="500" width="5" height="2" fill="#ffffff"/>
<rect x="75" y="485" width="5" height="2" fill="#ffffff"/>
<rect x="770" y="485" width="5" height="2" fill="#ffffff"/>
<rect x="75" y="471" width="5" height="2" fill="#ffffff"/>
<rect x="770" y="471" width="5" height="2" fill="#ffffff"/>
<rect x="75" y="456" width="5" height="2" fill="#ffffff"/>
<rect x="770" y="456" width="5" height="2" fill="#ffffff"/>
<rect x="75" y="589" width="10" height="2" fill="#ffffff"/>
<rect x="765" y="589" width="10" height="2" fill="#ffffff"/>
<rect x="75" y="515" width="10" height="2" fill="#ffffff"/>
<rect x="765" y="515" width="10" height="2" fill="#ffffff"/>
<rect x="75" y="441" width="10" height="2" fill="#ffffff"/>
<rect x="765" y="441" width="10" height="2" fill="#ffffff"/>
<path d="M379.34,28.75 L379.34,28.17 L379.92,27.02 L380.49,26.44 L381.65,25.86 L383.96,25.86 L385.12,26.44 L385.70,27.02 L386.27,28.17 L386.27,29.33 L385.70,30.49 L384.54,32.22 L378.76,38.00 L386.85,38.00 M391.48,25.86 L397.83,25.86 L394.37,30.49 L396.10,30.49 L397.26,31.06 L397.83,31.64 L398.41,33.38 L398.41,34.53 L397.83,36.27 L396.68,37.42 L394.94,38.00 L393.21,38.00 L391.48,37.42 L390.90,36.84 L390.32,35.69 M408.82,25.86 L403.04,25.86 L402.46,31.06 L403.04,30.49 L404.77,29.91 L406.50,29.91 L408.24,30.49 L409.39,31.64 L409.97,33.38 L409.97,34.53 L409.39,36.27 L408.24,37.42 L406.50,38.00 L404.77,38.00 L403.04,37.42 L402.46,36.84 L401.88,35.69 M414.02,28.75 L414.02,28.17 L414.60,27.02 L415.17,26.44 L416.33,25.86 L418.64,25.86 L419.80,26.44 L420.38,27.02 L420.95,28.17 L420.95,29.33 L420.38,30.49 L419.22,32.22 L413.44,38.00 L421.53,38.00 M430.78,27.60 L430.78,38.00 M425.58,32.80 L435.98,32.80 M445.81,25.86 L440.03,33.95 L448.70,33.95 M445.81,25.86 L445.81,38.00 M459.10,29.91 L458.52,31.64 L457.37,32.80 L455.63,33.38 L455.06,33.38 L453.32,32.80 L452.17,31.64 L451.59,29.91 L451.59,29.33 L452.17,27.60 L453.32,26.44 L455.06,25.86 L455.63,25.86 L457.37,26.44 L458.52,27.60 L459.10,29.91 L459.10,32.80 L458.52,35.69 L457.37,37.42 L455.63,38.00 L454.48,38.00 L452.74,37.42 L452.17,36.27 M470.08,25.86 L464.30,25.86 L463.73,31.06 L464.30,30.49 L466.04,29.91 L467.77,29.91 L469.51,30.49 L470.66,31.64 L471.24,33.38 L471.24,34.53 L470.66,36.27 L469.51,37.42 L467.77,38.00 L466.04,38.00 L464.30,37.42 L463.73,36.84 L463.15,35.69" fill="none" stroke="#00ffff" stroke-width="2.0" stroke-linecap="round" stroke-linejoin="round" shape-rendering="crispEdges"/>
<path d="M403.61,652.87 L408.24,658.17 L408.24,664.00 M412.86,652.87 L408.24,658.17 M415.75,652.87 L415.75,664.00 M415.75,652.87 L423.27,652.87 M415.75,658.17 L420.38,658.17 M415.75,664.00 L423.27,664.00 M429.62,652.87 L425.00,664.00 M429.62,652.87 L434.25,664.00 M426.73,660.29 L432.51,660.29 M437.14,652.87 L437.14,664.00 M437.14,652.87 L442.34,652.87 L444.07,653.40 L444.65,653.93 L445.23,654.99 L445.23,656.05 L444.65,657.11 L444.07,657.64 L442.34,658.17 L437.14,658.17 M441.18,658.17 L445.23,664.00" fill="none" stroke="#00ffff" stroke-width="2.0" stroke-linecap="round" stroke-linejoin="round" shape-rendering="crispEdges"/>
<path d="M55.35,617.17 L56.50,616.60 L58.24,614.86 L58.24,627.00 M72.69,618.91 L72.11,620.64 L70.95,621.80 L69.22,622.38 L68.64,622.38 L66.91,621.80 L65.75,620.64 L65.17,618.91 L65.17,618.33 L65.75,616.60 L66.91,615.44 L68.64,614.86 L69.22,614.86 L70.95,615.44 L72.11,616.60 L72.69,618.91 L72.69,621.80 L72.11,624.69 L70.95,626.42 L69.22,627.00 L68.06,627.00 L66.33,626.42 L65.75,625.27 M79.62,614.86 L77.89,615.44 L77.31,616.60 L77.31,617.75 L77.89,618.91 L79.05,619.49 L81.36,620.06 L83.09,620.64 L84.25,621.80 L84.83,622.95 L84.83,624.69 L84.25,625.84 L83.67,626.42 L81.94,627.00 L79.62,627.00 L77.89,626.42 L77.31,625.84 L76.73,624.69 L76.73,622.95 L77.31,621.80 L78.47,620.64 L80.20,620.06 L82.51,619.49 L83.67,618.91 L84.25,617.75 L84.25,616.60 L83.67,615.44 L81.94,614.86 L79.62,614.86 M88.87,617.75 L88.87,617.17 L89.45,616.02 L90.03,615.44 L91.18,614.86 L93.50,614.86 L94.65,615.44 L95.23,616.02 L95.81,617.17 L95.81,618.33 L95.23,619.49 L94.07,621.22 L88.29,627.00 L96.39,627.00" fill="none" stroke="#ffffff" stroke-width="2.0" stroke-linecap="round" stroke-linejoin="round" shape-rendering="crispEdges"/>
<path d="M156.35,617.17 L157.50,616.60 L159.24,614.86 L159.24,627.00 M173.69,618.91 L173.11,620.64 L171.95,621.80 L170.22,622.38 L169.64,622.38 L167.91,621.80 L166.75,620.64 L166.17,618.91 L166.17,618.33 L166.75,616.60 L167.91,615.44 L169.64,614.86 L170.22,614.86 L171.95,615.44 L173.11,616.60 L173.69,618.91 L173.69,621.80 L173.11,624.69 L171.95,626.42 L170.22,627.00 L169.06,627.00 L167.33,626.42 L166.75,625.27 M180.62,614.86 L178.89,615.44 L178.31,616.60 L178.31,617.75 L178.89,618.91 L180.05,619.49 L182.36,620.06 L184.09,620.64 L185.25,621.80 L185.83,622.95 L185.83,624.69 L185.25,625.84 L184.67,626.42 L182.94,627.00 L180.62,627.00 L178.89,626.42 L178.31,625.84 L177.73,624.69 L177.73,622.95 L178.31,621.80 L179.47,620.64 L181.20,620.06 L183.51,619.49 L184.67,618.91 L185.25,617.75 L185.25,616.60 L184.67,615.44 L182.94,614.86 L180.62,614.86 M195.07,614.86 L189.29,622.95 L197.96,622.95 M195.07,614.86 L195.07,627.00" fill="none" stroke="#ffffff" stroke-width="2.0" stroke-linecap="round" stroke-linejoin="round" shape-rendering="crispEdges"/>
<path d="M256.35,617.17 L257.50,616.60 L259.24,614.86 L259.24,627.00 M273.69,618.91 L273.11,620.64 L271.95,621.80 L270.22,622.38 L269.64,622.38 L267.91,621.80 L266.75,620.64 L266.17,618.91 L266.17,618.33 L266.75,616.60 L267.91,615.44 L269.64,614.86 L270.22,614.86 L271.95,615.44 L273.11,616.60 L273.69,618.91 L273.69,621.80 L273.11,624.69 L271.95,626.42 L270.22,627.00 L269.06,627.00 L267.33,626.42 L266.75,625.27 M280.62,614.86 L278.89,615.44 L278.31,616.60 L278.31,617.75 L278.89,618.91 L280.05,619.49 L282.36,620.06 L284.09,620.64 L285.25,621.80 L285.83,622.95 L285.83,624.69 L285.25,625.84 L284.67,626.42 L282.94,627.00 L280.62,627.00 L278.89,626.42 L278.31,625.84 L277.73,624.69 L277.73,622.95 L278.31,621.80 L279.47,620.64 L281.20,620.06 L283.51,619.49 L284.67,618.91 L285.25,617.75 L285.25,616.60 L284.67,615.44 L282.94,614.86 L280.62,614.86 M296.81,616.60 L296.23,615.44 L294.50,614.86 L293.34,614.86 L291.61,615.44 L290.45,617.17 L289.87,620.06 L289.87,622.95 L290.45,625.27 L291.61,626.42 L293.34,627.00 L293.92,627.00 L295.65,626.42 L296.81,625.27 L297.39,623.53 L297.39,622.95 L296.81,621.22 L295.65,620.06 L293.92,619.49 L293.34,619.49 L291.61,620.06 L290.45,621.22 L289.87,622.95" fill="none" stroke="#ffffff" stroke-width="2.0" stroke-linecap="round" stroke-linejoin="round" shape-rendering="crispEdges"/>
<path d="M357.35,617.17 L358.50,616.60 L360.24,614.86 L360.24,627.00 M374.69,618.91 L374.11,620.64 L372.95,621.80 L371.22,622.38 L370.64,622.38 L368.91,621.80 L367.75,620.64 L367.17,618.91 L367.17,618.33 L367.75,616.60 L368.91,615.44 L370.64,614.86 L371.22,614.86 L372.95,615.44 L374.11,616.60 L374.69,618.91 L374.69,621.80 L374.11,624.69 L372.95,626.42 L371.22,627.00 L370.06,627.00 L368.33,626.42 L367.75,625.27 M381.62,614.86 L379.89,615.44 L379.31,616.60 L379.31,617.75 L379.89,618.91 L381.05,619.49 L383.36,620.06 L385.09,620.64 L386.25,621.80 L386.83,622.95 L386.83,624.69 L386.25,625.84 L385.67,626.42 L383.94,627.00 L381.62,627.00 L379.89,626.42 L379.31,625.84 L378.73,624.69 L378.73,622.95 L379.31,621.80 L380.47,620.64 L382.20,620.06 L384.51,619.49 L385.67,618.91 L386.25,617.75 L386.25,616.60 L385.67,615.44 L383.94,614.86 L381.62,614.86 M393.18,614.86 L391.45,615.44 L390.87,616.60 L390.87,617.75 L391.45,618.91 L392.61,619.49 L394.92,620.06 L396.65,620.64 L397.81,621.80 L398.39,622.95 L398.39,624.69 L397.81,625.84 L397.23,626.42 L395.50,627.00 L393.18,627.00 L391.45,626.42 L390.87,625.84 L390.29,624.69 L390.29,622.95 L390.87,621.80 L392.03,620.64 L393.76,620.06 L396.07,619.49 L397.23,618.91 L397.81,617.75 L397.81,616.60 L397.23,615.44 L395.50,614.86 L393.18,614.86" fill="none" stroke="#ffffff" stroke-width="2.0" stroke-linecap="round" stroke-linejoin="round" shape-rendering="crispEdges"/>
<path d="M457.35,617.17 L458.50,616.60 L460.24,614.86 L460.24,627.00 M474.69,618.91 L474.11,620.64 L472.95,621.80 L471.22,622.38 L470.64,622.38 L468.91,621.80 L467.75,620.64 L467.17,618.91 L467.17,618.33 L467.75,616.60 L468.91,615.44 L470.64,614.86 L471.22,614.86 L472.95,615.44 L474.11,616.60 L474.69,618.91 L474.69,621.80 L474.11,624.69 L472.95,626.42 L471.22,627.00 L470.06,627.00 L468.33,626.42 L467.75,625.27 M486.25,618.91 L485.67,620.64 L484.51,621.80 L482.78,622.38 L482.20,622.38 L480.47,621.80 L479.31,620.64 L478.73,618.91 L478.73,618.33 L479.31,616.60 L480.47,615.44 L482.20,614.86 L482.78,614.86 L484.51,615.44 L485.67,616.60 L486.25,618.91 L486.25,621.80 L485.67,624.69 L484.51,626.42 L482.78,627.00 L481.62,627.00 L479.89,626.42 L479.31,625.27 M493.76,614.86 L492.03,615.44 L490.87,617.17 L490.29,620.06 L490.29,621.80 L490.87,624.69 L492.03,626.42 L493.76,627.00 L494.92,627.00 L496.65,626.42 L497.81,624.69 L498.39,621.80 L498.39,620.06 L497.81,617.17 L496.65,615.44 L494.92,614.86 L493.76,614.86" fill="none" stroke="#ffffff" stroke-width="2.0" stroke-linecap="round" stroke-linejoin="round" shape-rendering="crispEdges"/>
<path d="M558.35,617.17 L559.50,616.60 L561.24,614.86 L561.24,627.00 M575.69,618.91 L575.11,620.64 L573.95,621.80 L572.22,622.38 L571.64,622.38 L569.91,621.80 L568.75,620.64 L568.17,618.91 L568.17,618.33 L568.75,616.60 L569.91,615.44 L571.64,614.86 L572.22,614.86 L573.95,615.44 L575.11,616.60 L575.69,618.91 L575.69,621.80 L575.11,624.69 L573.95,626.42 L572.22,627.00 L571.06,627.00 L569.33,626.42 L568.75,625.27 M587.25,618.91 L586.67,620.64 L585.51,621.80 L583.78,622.38 L583.20,622.38 L581.47,621.80 L580.31,620.64 L579.73,618.91 L579.73,618.33 L580.31,616.60 L581.47,615.44 L583.20,614.86 L583.78,614.86 L585.51,615.44 L586.67,616.60 L587.25,618.91 L587.25,621.80 L586.67,624.69 L585.51,626.42 L583.78,627.00 L582.62,627.00 L580.89,626.42 L580.31,625.27 M591.87,617.75 L591.87,617.17 L592.45,616.02 L593.03,615.44 L594.18,614.86 L596.50,614.86 L597.65,615.44 L598.23,616.02 L598.81,617.17 L598.81,618.33 L598.23,619.49 L597.07,621.22 L591.29,627.00 L599.39,627.00" fill="none" stroke="#ffffff" stroke-width="2.0" stroke-linecap="round" stroke-linejoin="round" shape-rendering="crispEdges"/>
<path d="M658.35,617.17 L659.50,616.60 L661.24,614.86 L661.24,627.00 M675.69,618.91 L675.11,620.64 L673.95,621.80 L672.22,622.38 L671.64,622.38 L669.91,621.80 L668.75,620.64 L668.17,618.91 L668.17,618.33 L668.75,616.60 L669.91,615.44 L671.64,614.86 L672.22,614.86 L673.95,615.44 L675.11,616.60 L675.69,618.91 L675.69,621.80 L675.11,624.69 L673.95,626.42 L672.22,627.00 L671.06,627.00 L669.33,626.42 L668.75,625.27 M687.25,618.91 L686.67,620.64 L685.51,621.80 L683.78,622.38 L683.20,622.38 L681.47,621.80 L680.31,620.64 L679.73,618.91 L679.73,618.33 L680.31,616.60 L681.47,615.44 L683.20,614.86 L683.78,614.86 L685.51,615.44 L686.67,616.60 L687.25,618.91 L687.25,621.80 L686.67,624.69 L685.51,626.42 L683.78,627.00 L682.62,627.00 L680.89,626.42 L680.31,625.27 M697.07,614.86 L691.29,622.95 L699.96,622.95 M697.07,614.86 L697.07,627.00" fill="none" stroke="#ffffff" stroke-width="2.0" stroke-linecap="round" stroke-linejoin="round" shape-rendering="crispEdges"/>
<path d="M49.86,80.89 L49.86,74.53 L54.49,78.00 L54.49,76.27 L55.06,75.11 L55.64,74.53 L57.38,73.95 L58.53,73.95 L60.27,74.53 L61.42,75.69 L62.00,77.42 L62.00,79.16 L61.42,80.89 L60.84,81.47 L59.69,82.05" fill="none" stroke="#ffffff" stroke-width="2.0" stroke-linecap="round" stroke-linejoin="round" shape-rendering="crispEdges"/>
<path d="M52.75,139.47 L52.17,139.47 L51.02,138.89 L50.44,138.31 L49.86,137.16 L49.86,134.84 L50.44,133.69 L51.02,133.11 L52.17,132.53 L53.33,132.53 L54.49,133.11 L56.22,134.27 L62.00,140.05 L62.00,131.95" fill="none" stroke="#ffffff" stroke-width="2.0" stroke-linecap="round" stroke-linejoin="round" shape-rendering="crispEdges"/>
<path d="M52.17,196.31 L51.60,195.16 L49.86,193.42 L62.00,193.42" fill="none" stroke="#ffffff" stroke-width="2.0" stroke-linecap="round" stroke-linejoin="round" shape-rendering="crispEdges"/>
<path d="M49.86,252.58 L50.44,254.31 L52.17,255.47 L55.06,256.05 L56.80,256.05 L59.69,255.47 L61.42,254.31 L62.00,252.58 L62.00,251.42 L61.42,249.69 L59.69,248.53 L56.80,247.95 L55.06,247.95 L52.17,248.53 L50.44,249.69 L49.86,251.42 L49.86,252.58" fill="none" stroke="#ffffff" stroke-width="2.0" stroke-linecap="round" stroke-linejoin="round" shape-rendering="crispEdges"/>
<path d="M49.86,257.88 L49.86,251.52 L54.49,254.99 L54.49,253.26 L55.06,252.10 L55.64,251.52 L57.38,250.94 L58.53,250.94 L60.27,251.52 L61.42,252.68 L62.00,254.41 L62.00,256.15 L61.42,257.88 L60.84,258.46 L59.69,259.04" fill="none" stroke="#ffffff" stroke-width="2.0" stroke-linecap="round" stroke-linejoin="round" shape-rendering="crispEdges"/>
<path d="M52.75,316.13 L52.17,316.13 L51.02,315.55 L50.44,314.97 L49.86,313.82 L49.86,311.50 L50.44,310.35 L51.02,309.77 L52.17,309.19 L53.33,309.19 L54.49,309.77 L56.22,310.93 L62.00,316.71 L62.00,308.61" fill="none" stroke="#ffffff" stroke-width="2.0" stroke-linecap="round" stroke-linejoin="round" shape-rendering="crispEdges"/>
<path d="M52.17,372.64 L51.60,371.49 L49.86,369.75 L62.00,369.75" fill="none" stroke="#ffffff" stroke-width="2.0" stroke-linecap="round" stroke-linejoin="round" shape-rendering="crispEdges"/>
<path d="M49.86,428.58 L50.44,430.31 L52.17,431.47 L55.06,432.05 L56.80,432.05 L59.69,431.47 L61.42,430.31 L62.00,428.58 L62.00,427.42 L61.42,425.69 L59.69,424.53 L56.80,423.95 L55.06,423.95 L52.17,424.53 L50.44,425.69 L49.86,427.42 L49.86,428.58" fill="none" stroke="#ffffff" stroke-width="2.0" stroke-linecap="round" stroke-linejoin="round" shape-rendering="crispEdges"/>
<path d="M52.17,444.56 L51.60,443.41 L49.86,441.67 L62.00,441.67" fill="none" stroke="#ffffff" stroke-width="2.0" stroke-linecap="round" stroke-linejoin="round" shape-rendering="crispEdges"/>
<path d="M49.86,516.58 L50.44,518.31 L52.17,519.47 L55.06,520.05 L56.80,520.05 L59.69,519.47 L61.42,518.31 L62.00,516.58 L62.00,515.42 L61.42,513.69 L59.69,512.53 L56.80,511.95 L55.06,511.95 L52.17,512.53 L50.44,513.69 L49.86,515.42 L49.86,516.58" fill="none" stroke="#ffffff" stroke-width="2.0" stroke-linecap="round" stroke-linejoin="round" shape-rendering="crispEdges"/>
<path d="M56.80,600.73 L56.80,590.33 M52.17,584.55 L51.60,583.39 L49.86,581.66 L62.00,581.66" fill="none" stroke="#ffffff" stroke-width="2.0" stroke-linecap="round" stroke-linejoin="round" shape-rendering="crispEdges"/>
<path d="M21.86,235.46 L22.44,237.19 L23.60,237.77 L24.75,237.77 L25.91,237.19 L26.49,236.04 L27.06,233.73 L27.64,231.99 L28.80,230.84 L29.95,230.26 L31.69,230.26 L32.84,230.84 L33.42,231.41 L34.00,233.15 L34.00,235.46 L33.42,237.19 L32.84,237.77 L31.69,238.35 L29.95,238.35 L28.80,237.77 L27.64,236.62 L27.06,234.88 L26.49,232.57 L25.91,231.41 L24.75,230.84 L23.60,230.84 L22.44,231.41 L21.86,233.15 L21.86,235.46 M24.75,208.87 L23.60,209.45 L22.44,210.61 L21.86,211.76 L21.86,214.07 L22.44,215.23 L23.60,216.39 L24.75,216.97 L26.49,217.54 L29.38,217.54 L31.11,216.97 L32.27,216.39 L33.42,215.23 L34.00,214.07 L34.00,211.76 L33.42,210.61 L32.27,209.45 L31.11,208.87 L29.38,208.87 M29.38,211.76 L29.38,208.87 M21.86,204.83 L34.00,204.83 M21.86,196.74 L34.00,196.74 M27.64,204.83 L27.64,196.74 M25.91,186.33 L34.00,192.69 M25.91,192.69 L25.91,186.33 M34.00,192.69 L34.00,186.33 M21.86,173.04 L34.00,173.04 M21.86,173.04 L21.86,165.52 M27.64,173.04 L27.64,168.41 M21.86,162.63 L34.00,162.63 M34.00,162.63 L34.00,155.70 M21.86,152.81 L30.53,152.81 L32.27,152.23 L33.42,151.07 L34.00,149.34 L34.00,148.18 L33.42,146.45 L32.27,145.29 L30.53,144.72 L21.86,144.72 M21.86,140.67 L34.00,132.58 M21.86,132.58 L34.00,140.67 M19.55,115.24 L20.71,116.39 L22.44,117.55 L24.75,118.71 L27.64,119.28 L29.95,119.28 L32.84,118.71 L35.16,117.55 L36.89,116.39 L38.05,115.24 M21.86,106.57 L31.11,106.57 L32.84,107.15 L33.42,107.72 L34.00,108.88 L34.00,110.03 L33.42,111.19 L32.84,111.77 L31.11,112.35 L29.95,112.35 M25.91,103.10 L34.00,99.63 M25.91,96.16 L34.00,99.63 L36.31,100.79 L37.47,101.94 L38.05,103.10 L38.05,103.68 M19.55,93.27 L20.71,92.12 L22.44,90.96 L24.75,89.81 L27.64,89.23 L29.95,89.23 L32.84,89.81 L35.16,90.96 L36.89,92.12 L38.05,93.27" fill="none" stroke="#00ffff" stroke-width="2.0" stroke-linecap="round" stroke-linejoin="round" shape-rendering="crispEdges"/>
<path d="M24.75,414.27 L24.17,414.27 L23.02,413.69 L22.44,413.12 L21.86,411.96 L21.86,409.65 L22.44,408.49 L23.02,407.91 L24.17,407.34 L25.33,407.34 L26.49,407.91 L28.22,409.07 L34.00,414.85 L34.00,406.76 M24.75,385.37 L23.60,385.95 L22.44,387.11 L21.86,388.26 L21.86,390.57 L22.44,391.73 L23.60,392.89 L24.75,393.46 L26.49,394.04 L29.38,394.04 L31.11,393.46 L32.27,392.89 L33.42,391.73 L34.00,390.57 L34.00,388.26 L33.42,387.11 L32.27,385.95 L31.11,385.37 L29.38,385.37 M29.38,388.26 L29.38,385.37 M21.86,381.33 L34.00,381.33 M21.86,373.24 L34.00,373.24 M27.64,381.33 L27.64,373.24 M25.91,362.83 L34.00,369.19 M25.91,369.19 L25.91,362.83 M34.00,369.19 L34.00,362.83 M21.86,349.54 L34.00,349.54 M21.86,349.54 L21.86,342.02 M27.64,349.54 L27.64,344.91 M21.86,339.13 L34.00,339.13 M34.00,339.13 L34.00,332.20 M21.86,329.31 L30.53,329.31 L32.27,328.73 L33.42,327.57 L34.00,325.84 L34.00,324.68 L33.42,322.95 L32.27,321.79 L30.53,321.21 L21.86,321.21 M21.86,317.17 L34.00,309.08 M21.86,309.08 L34.00,317.17 M19.55,291.74 L20.71,292.89 L22.44,294.05 L24.75,295.20 L27.64,295.78 L29.95,295.78 L32.84,295.20 L35.16,294.05 L36.89,292.89 L38.05,291.74 M21.86,283.07 L31.11,283.07 L32.84,283.64 L33.42,284.22 L34.00,285.38 L34.00,286.54 L33.42,287.69 L32.84,288.27 L31.11,288.85 L29.95,288.85 M25.91,279.60 L34.00,276.13 M25.91,272.66 L34.00,276.13 L36.31,277.29 L37.47,278.44 L38.05,279.60 L38.05,280.18 M19.55,269.77 L20.71,268.62 L22.44,267.46 L24.75,266.31 L27.64,265.73 L29.95,265.73 L32.84,266.31 L35.16,267.46 L36.89,268.62 L38.05,269.77" fill="none" stroke="#00ffff" stroke-width="2.0" stroke-linecap="round" stroke-linejoin="round" shape-rendering="crispEdges"/>
<path d="M23.60,581.52 L22.44,582.68 L21.86,584.41 L21.86,586.73 L22.44,588.46 L23.60,589.62 L24.75,589.62 L25.91,589.04 L26.49,588.46 L27.06,587.30 L28.22,583.84 L28.80,582.68 L29.38,582.10 L30.53,581.52 L32.27,581.52 L33.42,582.68 L34.00,584.41 L34.00,586.73 L33.42,588.46 L32.27,589.62 M21.86,577.48 L34.00,577.48 M21.86,577.48 L21.86,572.28 L22.44,570.54 L23.02,569.97 L24.17,569.39 L25.91,569.39 L27.06,569.97 L27.64,570.54 L28.22,572.28 L28.22,577.48 M21.86,565.34 L34.00,565.34 M21.86,565.34 L21.86,557.83 M27.64,565.34 L27.64,560.72 M34.00,565.34 L34.00,557.83 M24.75,546.27 L23.60,546.85 L22.44,548.00 L21.86,549.16 L21.86,551.47 L22.44,552.62 L23.60,553.78 L24.75,554.36 L26.49,554.94 L29.38,554.94 L31.11,554.36 L32.27,553.78 L33.42,552.62 L34.00,551.47 L34.00,549.16 L33.42,548.00 L32.27,546.85 L31.11,546.27 M21.86,539.91 L34.00,539.91 M21.86,543.96 L21.86,535.86 M21.86,532.97 L34.00,532.97 M21.86,532.97 L21.86,527.77 L22.44,526.04 L23.02,525.46 L24.17,524.88 L25.33,524.88 L26.49,525.46 L27.06,526.04 L27.64,527.77 L27.64,532.97 M27.64,528.93 L34.00,524.88 M21.86,517.95 L34.00,522.57 M21.86,517.95 L34.00,513.32 M29.95,520.84 L29.95,515.05 M21.86,510.43 L34.00,510.43 M34.00,510.43 L34.00,503.50 M21.86,491.36 L34.00,491.36 M21.86,486.73 L34.00,486.73 M21.86,486.73 L34.00,478.64 M21.86,478.64 L34.00,478.64 M21.86,474.02 L34.00,474.02 M21.86,474.02 L21.86,469.97 L22.44,468.24 L23.60,467.08 L24.75,466.50 L26.49,465.93 L29.38,465.93 L31.11,466.50 L32.27,467.08 L33.42,468.24 L34.00,469.97 L34.00,474.02 M21.86,461.88 L34.00,461.88 M21.86,461.88 L21.86,454.37 M27.64,461.88 L27.64,457.25 M34.00,461.88 L34.00,454.37 M21.86,451.48 L34.00,443.38 M21.86,443.38 L34.00,451.48" fill="none" stroke="#00ffff" stroke-width="2.0" stroke-linecap="round" stroke-linejoin="round" shape-rendering="crispEdges"/>
<rect x="93" y="96" width="6" height="2" fill="#ff0000"/>
<rect x="93" y="105" width="6" height="2" fill="#ff0000"/>
<rect x="95" y="96" width="2" height="11" fill="#ff0000"/>
<rect x="93" y="398" width="6" height="2" fill="#ff0000"/>
<rect x="93" y="404" width="6" height="2" fill="#ff0000"/>
<rect x="95" y="398" width="2" height="8" fill="#ff0000"/>
<rect x="93" y="449" width="6" height="2" fill="#ff0000"/>
<rect x="93" y="458" width="6" height="2" fill="#ff0000"/>
<rect x="95" y="449" width="2" height="11" fill="#ff0000"/>
</svg>
</body></html>
